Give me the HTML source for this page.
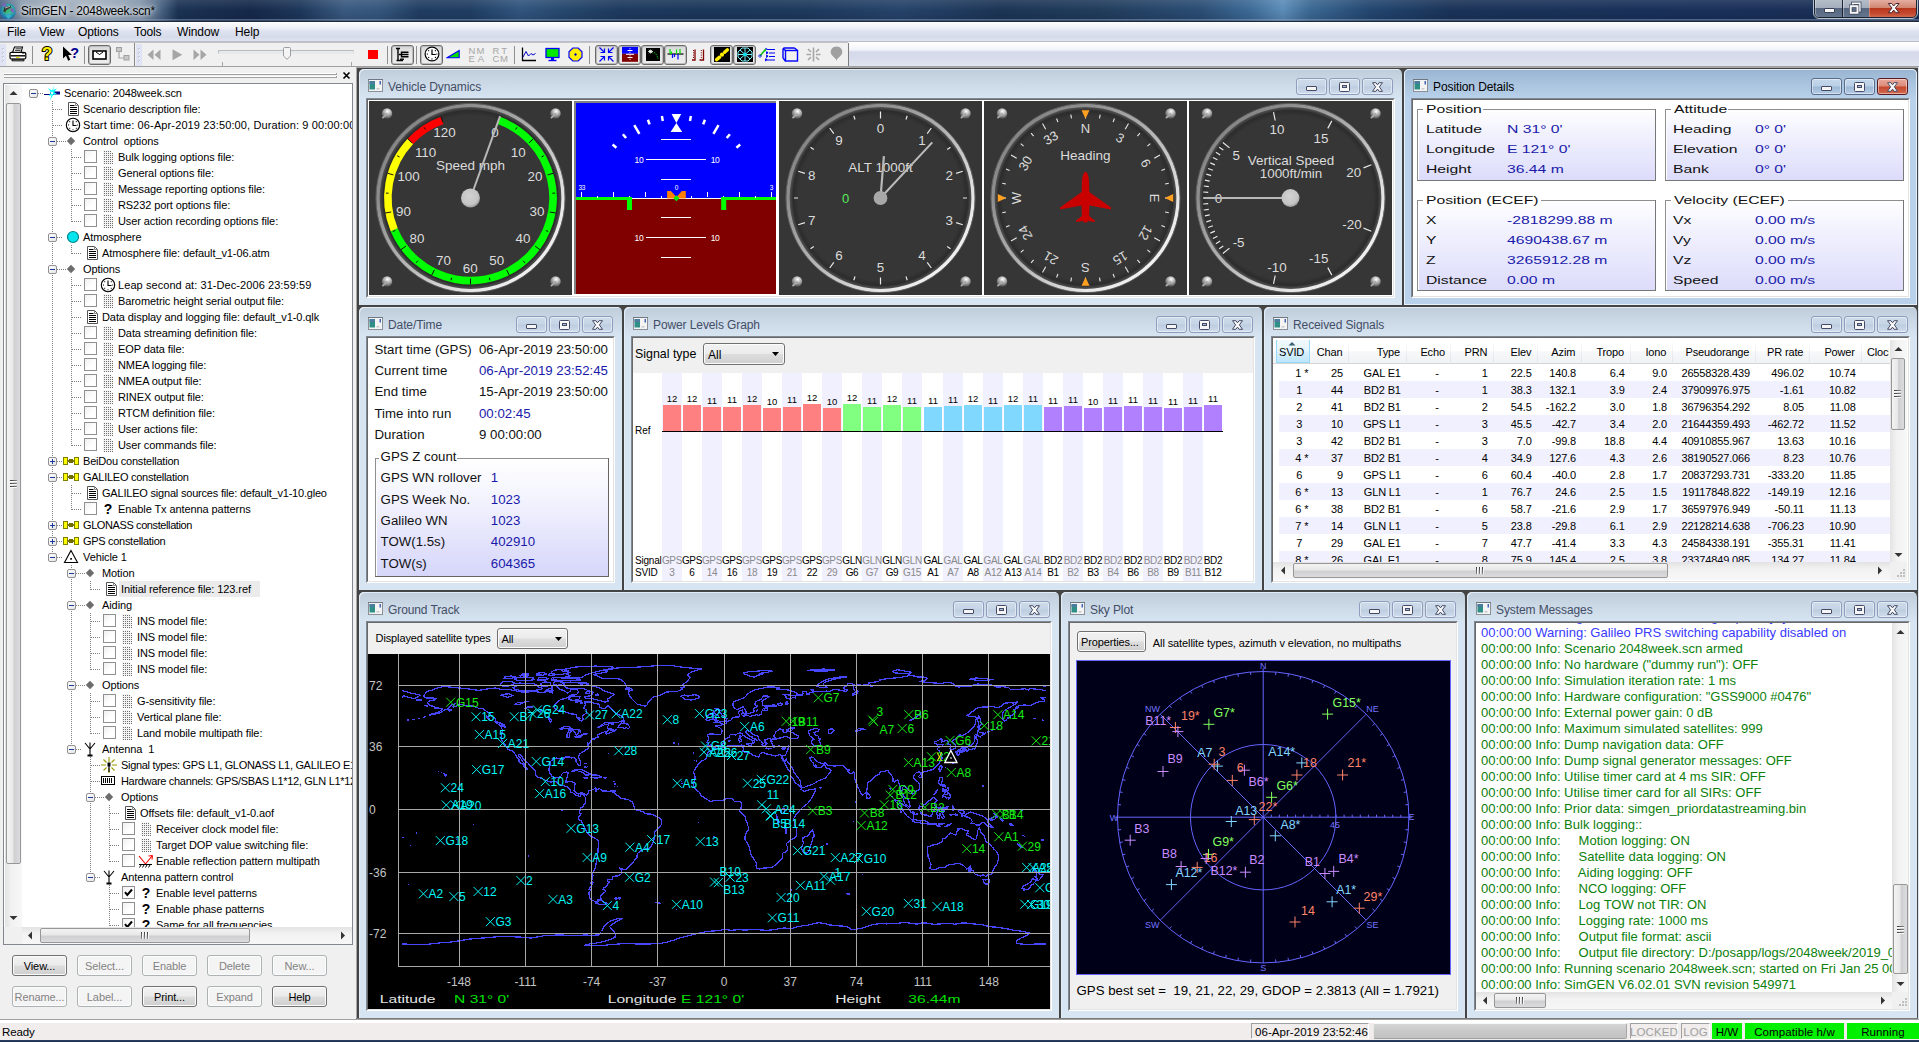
<!DOCTYPE html>
<html><head><meta charset="utf-8"><title>SimGEN - 2048week.scn*</title>
<style>
html,body{margin:0;padding:0;background:#f0f0f0;}
body{width:1919px;height:1042px;position:relative;overflow:hidden;font-family:'Liberation Sans',sans-serif;}
</style></head><body><div style="position:absolute;left:0px;top:0px;width:1919px;height:1042px;background:#f0f0f0"></div><div style="position:absolute;left:0px;top:0px;width:1919px;height:22px;background:linear-gradient(90deg,#4a6484 0,#8798ac 22px,#a3b0be 60px,#9aa9b9 110px,#8295ab 140px,#4c6685 160px,#1b3354 178px,#16294a 250px,#1d375a 300px,#3a5a80 345px,#35567c 380px,#203d61 420px,#203e63 470px,#31557e 520px,#28496f 560px,#1d3a5e 620px,#1b375a 700px,#1d395c 800px,#26436a 900px,#1c3556 1000px,#213c5c 1100px,#2b4d74 1200px,#3c6a96 1250px,#5b8cb8 1283px,#3b6892 1310px,#234670 1370px,#1a3358 1450px,#19305a 1700px,#1b2f55 1919px)"></div><div style="position:absolute;left:0px;top:0px;width:1919px;height:22px;background:linear-gradient(rgba(255,255,255,.10) 0,rgba(255,255,255,0) 10px,rgba(0,0,20,.12) 20px)"></div><div style="position:absolute;left:0px;top:21px;width:1919px;height:1px;background:#1d2a3c"></div><svg style="position:absolute;left:0px;top:1px;" width="17" height="20" viewBox="0 0 17 20"><defs><radialGradient id="gl" cx="55%" cy="40%" r="65%"><stop offset="0" stop-color="#62d8c0"/><stop offset="0.55" stop-color="#2a9fa8"/><stop offset="1" stop-color="#1d55a8"/></radialGradient></defs><circle cx="7.8" cy="10.5" r="8" fill="url(#gl)"/><path d="M3 8 Q7 5 12 6.5 Q15 9 13 11 Q9 10.5 6 12.5 Q3 11 3 8Z" fill="#3cb868" opacity="0.9"/><path d="M6 14 Q9 12.5 11.5 14.5 Q10.5 17.5 8 18 Q6 16.5 6 14Z" fill="#36b0c8"/><path d="M1.5 3.2 L4.5 2 L7 5 L4 6.2Z" fill="#7a66b8"/><path d="M9.5 8.2 L12.5 7 L15 10.5 L12 11.5Z" fill="#7a66b8"/><path d="M3.2 10.2 L4.2 6.2 L10.6 4.4 L11.3 6.2 L6.3 9.2 L5.2 11.6Z" fill="#3a3a3a"/><path d="M5 7 L10 5.3" stroke="#b8bcc2" stroke-width="0.9"/></svg><span style="position:absolute;left:21px;top:4px;white-space:pre;font:12px 'Liberation Sans',sans-serif;color:#000;letter-spacing:-0.22px;text-shadow:0 0 6px rgba(255,255,255,.9),0 0 10px rgba(255,255,255,.7),0 0 3px rgba(255,255,255,.6)">SimGEN - 2048week.scn*</span><div style="position:absolute;left:1813px;top:-2px;width:105px;height:21px;border:1px solid #b4c0cd;border-radius:0 0 6px 6px;box-sizing:border-box;background:#1c2433"></div><div style="position:absolute;left:1815px;top:0px;width:27px;height:17px;border-radius:0 0 0 4px;background:linear-gradient(#b4bdc9 0,#a3adbc 45%,#56677f 50%,#64758e 100%);box-shadow:inset 1px 0 0 rgba(255,255,255,.35)"></div><div style="position:absolute;left:1843px;top:0px;width:26px;height:17px;background:linear-gradient(#b4bdc9 0,#a3adbc 45%,#56677f 50%,#64758e 100%);box-shadow:inset 1px 0 0 rgba(255,255,255,.35)"></div><div style="position:absolute;left:1869px;top:0px;width:47px;height:17px;border-radius:0 0 4px 0;background:linear-gradient(#e4aea2 0,#d28672 45%,#b9371e 50%,#c44a30 80%,#d0674d 100%);box-shadow:inset 1px 0 0 rgba(255,255,255,.3)"></div><div style="position:absolute;left:0px;top:19px;width:1919px;height:2px;background:linear-gradient(rgba(150,170,195,.55),rgba(120,140,165,.2))"></div><div style="position:absolute;left:1824px;top:8px;width:9px;height:3px;background:#f6f6f6;border:1px solid #39425a;border-radius:1px;box-sizing:content-box"></div><svg style="position:absolute;left:1848px;top:1px;" width="16" height="14" viewBox="0 0 16 14"><rect x="4.8" y="2.3" width="7" height="7.5" fill="none" stroke="#39425a" stroke-width="3.2"/><rect x="4.8" y="2.3" width="7" height="7.5" fill="none" stroke="#f6f6f6" stroke-width="1.7"/><rect x="2.7" y="5.2" width="6.8" height="6.6" fill="#5d6d86" stroke="#39425a" stroke-width="3.4"/><rect x="2.7" y="5.2" width="6.8" height="6.6" fill="none" stroke="#f6f6f6" stroke-width="2"/></svg><svg style="position:absolute;left:1887px;top:2px;" width="14" height="12" viewBox="0 0 14 12"><path d="M1.3 1.5 L4.6 1.5 L6.7 4 L8.8 1.5 L12.1 1.5 L8.4 6 L12.1 10.7 L8.8 10.7 L6.7 8.1 L4.6 10.7 L1.3 10.7 L5 6 Z" fill="#f8f8f8" stroke="#4a2630" stroke-width="1" stroke-linejoin="round"/></svg><div style="position:absolute;left:0px;top:22px;width:1919px;height:20px;background:linear-gradient(#fdfdfe 0,#eef0f8 6px,#dfe3f0 9px,#d6dbea 15px,#e2e6f2 20px)"></div><div style="position:absolute;left:0px;top:41px;width:1919px;height:1px;background:#b9bccb"></div><div style="position:absolute;left:0px;top:42px;width:1919px;height:1px;background:#ffffff"></div><span style="position:absolute;left:7px;top:25px;white-space:pre;font:12px 'Liberation Sans',sans-serif;color:#000;letter-spacing:-0.1px">File</span><span style="position:absolute;left:39px;top:25px;white-space:pre;font:12px 'Liberation Sans',sans-serif;color:#000;letter-spacing:-0.1px">View</span><span style="position:absolute;left:78px;top:25px;white-space:pre;font:12px 'Liberation Sans',sans-serif;color:#000;letter-spacing:-0.1px">Options</span><span style="position:absolute;left:134px;top:25px;white-space:pre;font:12px 'Liberation Sans',sans-serif;color:#000;letter-spacing:-0.1px">Tools</span><span style="position:absolute;left:177px;top:25px;white-space:pre;font:12px 'Liberation Sans',sans-serif;color:#000;letter-spacing:-0.1px">Window</span><span style="position:absolute;left:235px;top:25px;white-space:pre;font:12px 'Liberation Sans',sans-serif;color:#000;letter-spacing:-0.1px">Help</span><div style="position:absolute;left:0px;top:43px;width:1919px;height:23px;background:linear-gradient(#ffffff 0,#f2f3f9 7px,#d5daeb 9px,#d8dcec 16px,#e1e5f1 23px)"></div><div style="position:absolute;left:0px;top:43px;width:848px;height:23px;background:#f0f0f0"></div><div style="position:absolute;left:0px;top:42px;width:848px;height:1px;background:#c4c4c4"></div><div style="position:absolute;left:848px;top:43px;width:1px;height:23px;background:#7c7c7c"></div><div style="position:absolute;left:134px;top:43px;width:1px;height:23px;background:#8a8a8a"></div><div style="position:absolute;left:0px;top:44px;width:6px;height:22px;background:#dfe3f4"></div><div style="position:absolute;left:2px;top:48px;width:2px;height:2px;background:#c3c8da"></div><div style="position:absolute;left:3px;top:49px;width:1px;height:1px;background:#fff"></div><div style="position:absolute;left:2px;top:52px;width:2px;height:2px;background:#c3c8da"></div><div style="position:absolute;left:3px;top:53px;width:1px;height:1px;background:#fff"></div><div style="position:absolute;left:2px;top:56px;width:2px;height:2px;background:#c3c8da"></div><div style="position:absolute;left:3px;top:57px;width:1px;height:1px;background:#fff"></div><div style="position:absolute;left:2px;top:60px;width:2px;height:2px;background:#c3c8da"></div><div style="position:absolute;left:3px;top:61px;width:1px;height:1px;background:#fff"></div><div style="position:absolute;left:136px;top:44px;width:6px;height:22px;background:#dfe3f4"></div><div style="position:absolute;left:138px;top:48px;width:2px;height:2px;background:#c3c8da"></div><div style="position:absolute;left:139px;top:49px;width:1px;height:1px;background:#fff"></div><div style="position:absolute;left:138px;top:52px;width:2px;height:2px;background:#c3c8da"></div><div style="position:absolute;left:139px;top:53px;width:1px;height:1px;background:#fff"></div><div style="position:absolute;left:138px;top:56px;width:2px;height:2px;background:#c3c8da"></div><div style="position:absolute;left:139px;top:57px;width:1px;height:1px;background:#fff"></div><div style="position:absolute;left:138px;top:60px;width:2px;height:2px;background:#c3c8da"></div><div style="position:absolute;left:139px;top:61px;width:1px;height:1px;background:#fff"></div><svg style="position:absolute;left:9px;top:46px;" width="18" height="16" viewBox="0 0 18 16"><path d="M5.5 1 H13.5 L12 6.5 H3.5Z" fill="#fff" stroke="#000" stroke-width="1.1"/><path d="M6.5 2.8H12M6 4.4H11.5" stroke="#000" stroke-width="0.8"/><path d="M1 7.5 Q1 6.3 2.5 6.3 H14.5 Q16.8 6.3 16.8 8 V11.5 Q16.8 13 15 13 H2.8 Q1 13 1 11.5Z" fill="#fff" stroke="#000" stroke-width="1.2"/><path d="M1.5 9.8H16" stroke="#000" stroke-width="1.4"/><path d="M3 13.3 H15 V14.8 H3Z" fill="#fff" stroke="#000" stroke-width="1"/><rect x="7" y="10.8" width="3.5" height="1.2" fill="#e8d800"/><path d="M13 7.5h2.5" stroke="#777" stroke-width="1"/></svg><div style="position:absolute;left:32px;top:46px;width:1px;height:18px;background:#8f8f8f"></div><svg style="position:absolute;left:41px;top:45px;" width="12" height="18" viewBox="0 0 12 18"><text x="6" y="15" text-anchor="middle" font-family="Liberation Sans,sans-serif" font-weight="bold" font-size="17.5" fill="#ffee00" stroke="#000" stroke-width="2" paint-order="stroke" stroke-linejoin="round">?</text></svg><svg style="position:absolute;left:62px;top:46px;" width="18" height="16" viewBox="0 0 18 16"><path d="M1 0.5 V12.5 L4 9.8 L6.2 14.8 L8.3 13.8 L6.2 9 L10 9 Z" fill="#000"/><text x="12.8" y="11.5" text-anchor="middle" font-family="Liberation Sans,sans-serif" font-weight="bold" font-size="14.5" fill="#000090">?</text></svg><div style="position:absolute;left:84px;top:46px;width:1px;height:18px;background:#8f8f8f"></div><div style="position:absolute;left:88px;top:45px;width:23px;height:20px;box-sizing:border-box;border:1px solid #6b6b6b;border-radius:3px;background:linear-gradient(#d6d6d6 0,#e6e6e6 40%,#ededed 100%);box-shadow:inset 0 0 0 1px #bdbdbd"></div><svg style="position:absolute;left:92px;top:50px;" width="15" height="10" viewBox="0 0 15 10"><rect x="1" y="1" width="13" height="8" fill="#fff" stroke="#000" stroke-width="1.6"/><path d="M4 2 L7.5 4.5 L11 2" fill="none" stroke="#000" stroke-width="1"/></svg><svg style="position:absolute;left:116px;top:47px;" width="14" height="14" viewBox="0 0 14 14"><rect x="0.5" y="0.5" width="5" height="4" fill="#c8c8c8" stroke="#a0a0a0"/><rect x="8" y="8.5" width="5" height="4.5" fill="#c8c8c8" stroke="#a0a0a0"/><path d="M3 4.5 V11 H8" fill="none" stroke="#a8a8a8" stroke-width="1.2"/></svg><svg style="position:absolute;left:147px;top:49px;" width="14" height="12" viewBox="0 0 14 12"><path d="M6.5 0.5 V11 L0.5 5.8Z M13.5 0.5 V11 L7.5 5.8Z" fill="#a6a6a6"/></svg><svg style="position:absolute;left:172px;top:49px;" width="11" height="12" viewBox="0 0 11 12"><path d="M0.5 0.3 V11.3 L10.3 5.8Z" fill="#a6a6a6"/></svg><svg style="position:absolute;left:193px;top:49px;" width="14" height="12" viewBox="0 0 14 12"><path d="M0.5 0.5 V11 L6.5 5.8Z M7.5 0.5 V11 L13.5 5.8Z" fill="#a6a6a6"/></svg><div style="position:absolute;left:218px;top:50px;width:136px;height:4px;box-sizing:border-box;border:1px solid #b8bcc0;border-bottom-color:#e6eaee;border-right-color:#d6dadd;background:#e7eaea;border-radius:1px"></div><svg style="position:absolute;left:283px;top:47px;" width="8" height="13" viewBox="0 0 8 13"><path d="M0.5 1.5 Q0.5 0.5 1.5 0.5 H6.5 Q7.5 0.5 7.5 1.5 V9 L4 12.3 L0.5 9Z" fill="#f4f4f4" stroke="#9a9ea3" stroke-width="1"/></svg><div style="position:absolute;left:222px;top:62px;width:1px;height:4px;background:#a8a8a8"></div><div style="position:absolute;left:351px;top:62px;width:1px;height:4px;background:#a8a8a8"></div><div style="position:absolute;left:368px;top:50px;width:10px;height:9px;background:#ff0000"></div><div style="position:absolute;left:387px;top:46px;width:1px;height:18px;background:#8f8f8f"></div><div style="position:absolute;left:391px;top:45px;width:23px;height:20px;box-sizing:border-box;border:1px solid #6b6b6b;border-radius:3px;background:linear-gradient(#d6d6d6 0,#e6e6e6 40%,#ededed 100%);box-shadow:inset 0 0 0 1px #bdbdbd"></div><svg style="position:absolute;left:395px;top:47px;" width="15" height="15" viewBox="0 0 15 15"><path d="M1 1.5H5M3 1.5V13.5M1.5 13.5H8" stroke="#000" stroke-width="1.4" fill="none"/><path d="M4 7.5H7M7 5.2H13.5M7 7.5H13.5M7 9.8H13.5M6.5 4.5V10.5" stroke="#000" stroke-width="1.4" fill="none"/><path d="M5 12.2H9" stroke="#000" stroke-width="1.4"/></svg><div style="position:absolute;left:416px;top:46px;width:1px;height:18px;background:#8f8f8f"></div><div style="position:absolute;left:420px;top:45px;width:23px;height:20px;box-sizing:border-box;border:1px solid #6b6b6b;border-radius:3px;background:linear-gradient(#d6d6d6 0,#e6e6e6 40%,#ededed 100%);box-shadow:inset 0 0 0 1px #bdbdbd"></div><svg style="position:absolute;left:424px;top:46px;" width="16" height="16" viewBox="0 0 16 16"><circle cx="8" cy="8" r="6.9" fill="#fff" stroke="#000" stroke-width="1.2"/><path d="M8 3.5V8.5H11.8" fill="none" stroke="#000" stroke-width="1.2"/><g fill="#000"><rect x="7.4" y="12.4" width="1.1" height="1.1"/><rect x="2.8" y="7.5" width="1.1" height="1.1"/><rect x="12.3" y="7.5" width="1.1" height="1.1"/><rect x="4.1" y="4.1" width="1.1" height="1.1"/><rect x="10.9" y="4.1" width="1.1" height="1.1"/><rect x="4.1" y="10.9" width="1.1" height="1.1"/><rect x="10.9" y="10.9" width="1.1" height="1.1"/></g></svg><svg style="position:absolute;left:446px;top:49px;" width="15" height="10" viewBox="0 0 15 10"><path d="M1 8.8 L13.2 1.5 V8.8Z" fill="#00e000" stroke="#0000ff" stroke-width="1.1"/></svg><svg style="position:absolute;left:467px;top:45px;" width="42" height="18" viewBox="0 0 42 18"><text x="1.5" y="9" style="font-family:'Liberation Sans',sans-serif;font-size:9.5px;fill:#a6a6a6" textLength="16" lengthAdjust="spacing">NM</text><text x="1.5" y="17" style="font-family:'Liberation Sans',sans-serif;font-size:9.5px;fill:#a6a6a6" textLength="15.5" lengthAdjust="spacing">EA</text><text x="25.5" y="9" style="font-family:'Liberation Sans',sans-serif;font-size:9.5px;fill:#a6a6a6" textLength="14.5" lengthAdjust="spacing">RT</text><text x="25.5" y="17" style="font-family:'Liberation Sans',sans-serif;font-size:9.5px;fill:#a6a6a6" textLength="15.5" lengthAdjust="spacing">CM</text></svg><div style="position:absolute;left:514px;top:46px;width:1px;height:18px;background:#8f8f8f"></div><svg style="position:absolute;left:521px;top:47px;" width="16" height="15" viewBox="0 0 16 15"><path d="M1.5 0.5V13.5H15" fill="none" stroke="#000" stroke-width="1.3"/><path d="M2 10 L5 4.5 L7.5 9 L10 6.5 L12 8 L14.5 6.5" fill="none" stroke="#0000c8" stroke-width="1"/></svg><svg style="position:absolute;left:545px;top:47px;" width="15" height="15" viewBox="0 0 15 15"><rect x="1" y="1.5" width="13" height="9" fill="#00e800" stroke="#0000ff" stroke-width="1.3"/><rect x="6" y="11" width="3" height="2" fill="#0000ff"/><rect x="3.5" y="12.8" width="8" height="1.4" fill="#0000ff"/></svg><svg style="position:absolute;left:568px;top:47px;" width="15" height="15" viewBox="0 0 15 15"><path d="M4.8 1 H10.2 L14 4.8 V10.2 L10.2 14 H4.8 L1 10.2 V4.8Z" fill="#ffee00" stroke="#0000ff" stroke-width="1.2"/><path d="M7.5 6 L9 7.5 L7.5 9 L6 7.5Z" fill="#0000c8"/></svg><div style="position:absolute;left:589px;top:46px;width:1px;height:18px;background:#8f8f8f"></div><div style="position:absolute;left:595px;top:45px;width:23px;height:20px;box-sizing:border-box;border:1px solid #6b6b6b;border-radius:3px;background:linear-gradient(#d6d6d6 0,#e6e6e6 40%,#ededed 100%);box-shadow:inset 0 0 0 1px #bdbdbd"></div><svg style="position:absolute;left:598px;top:46px;" width="17" height="17" viewBox="0 0 17 17"><g stroke="#0000ff" stroke-width="1.2" fill="none"><path d="M1.5 1.5 L6.5 6.5 M6.5 2.5 V6.5 H2.5"/><path d="M15.5 1.5 L10.5 6.5 M10.5 2.5 V6.5 H14.5"/><path d="M1.5 15.5 L6.5 10.5 M6.5 14.5 V10.5 H2.5"/><path d="M15.5 15.5 L10.5 10.5 M10.5 14.5 V10.5 H14.5"/></g></svg><div style="position:absolute;left:618px;top:45px;width:23px;height:20px;box-sizing:border-box;border:1px solid #6b6b6b;border-radius:3px;background:linear-gradient(#d6d6d6 0,#e6e6e6 40%,#ededed 100%);box-shadow:inset 0 0 0 1px #bdbdbd"></div><svg style="position:absolute;left:622px;top:46px;" width="16" height="16" viewBox="0 0 16 16"><rect x="0" y="0.8" width="16" height="7" fill="#0000ff"/><rect x="0" y="7.8" width="16" height="8" fill="#800000"/><g stroke="#fff" stroke-width="1" fill="none"><path d="M5.5 4.5H10.5M8 2.2V3.2M8 5.8V6.8M4 8.3H12M5.5 11.5H10.5M8 9.5V10.3M8 12.8V13.8"/></g></svg><div style="position:absolute;left:641px;top:45px;width:23px;height:20px;box-sizing:border-box;border:1px solid #6b6b6b;border-radius:3px;background:linear-gradient(#d6d6d6 0,#e6e6e6 40%,#ededed 100%);box-shadow:inset 0 0 0 1px #bdbdbd"></div><svg style="position:absolute;left:646px;top:48px;" width="14" height="13" viewBox="0 0 14 13"><rect width="14" height="13" fill="#000"/><path d="M3 3.5 Q10.5 3 12 11" fill="none" stroke="#00e000" stroke-width="1" stroke-dasharray="1.5 1"/><path d="M2 3.5H7M4.5 1.5V5.5M2.8 1.8L6.2 5.2M6.2 1.8L2.8 5.2" stroke="#fff" stroke-width="0.8"/></svg><div style="position:absolute;left:664px;top:45px;width:23px;height:20px;box-sizing:border-box;border:1px solid #6b6b6b;border-radius:3px;background:linear-gradient(#d6d6d6 0,#e6e6e6 40%,#ededed 100%);box-shadow:inset 0 0 0 1px #bdbdbd"></div><svg style="position:absolute;left:667px;top:48px;" width="17" height="13" viewBox="0 0 17 13"><path d="M0.5 6H16.5" stroke="#000" stroke-width="1.2"/><path d="M3 1V6M4.5 3.5V6M9.5 1.5V6M13 1V6" stroke="#00e000" stroke-width="1.2"/><path d="M5.5 6V10M7.5 6V9M11 6V11.5" stroke="#0000ff" stroke-width="1.2"/></svg><svg style="position:absolute;left:692px;top:49px;" width="13" height="12" viewBox="0 0 13 12"><path d="M3 0.5V11H0M11.5 0.5V11H7.5" fill="none" stroke="#800000" stroke-width="1.3"/><path d="M1.5 1V10M9.3 1V10" stroke="#800000" stroke-width="1" stroke-dasharray="1 1.3"/></svg><div style="position:absolute;left:710px;top:45px;width:23px;height:20px;box-sizing:border-box;border:1px solid #6b6b6b;border-radius:3px;background:linear-gradient(#d6d6d6 0,#e6e6e6 40%,#ededed 100%);box-shadow:inset 0 0 0 1px #bdbdbd"></div><svg style="position:absolute;left:714px;top:47px;" width="16" height="15" viewBox="0 0 16 15"><rect width="16" height="15" fill="#000"/><path d="M2.6 12.6 L5.6 10.2" stroke="#ffee00" stroke-width="3.4" stroke-linecap="round"/><path d="M10.6 5.2 L13.4 2.8" stroke="#ffee00" stroke-width="3.4" stroke-linecap="round"/><circle cx="8" cy="7.7" r="2.1" fill="#ffee00"/></svg><div style="position:absolute;left:733px;top:45px;width:23px;height:20px;box-sizing:border-box;border:1px solid #6b6b6b;border-radius:3px;background:linear-gradient(#d6d6d6 0,#e6e6e6 40%,#ededed 100%);box-shadow:inset 0 0 0 1px #bdbdbd"></div><svg style="position:absolute;left:737px;top:47px;" width="16" height="15" viewBox="0 0 16 15"><rect width="16" height="15" fill="#000"/><g stroke="#7af4ff" stroke-width="1" fill="none"><path d="M5 1 H11 L15 5 V10 L11 14 H5 L1 10 V5Z"/><path d="M8 1V14M1 7.5H15M3 3L13 12M13 3L3 12"/></g><circle cx="8" cy="7.5" r="1.8" fill="#00e5ee"/></svg><svg style="position:absolute;left:758px;top:47px;" width="18" height="15" viewBox="0 0 18 15"><g stroke="#0000ff" stroke-width="1.1" fill="none"><path d="M9 2.5H17M11 6H17M11 9.5H17M9 13H17"/><path d="M9 2.5L7.5 1.2M10 6L8.5 4.7 M10 9.5 L8.5 8.2M9 13L7.5 11.7" /></g><path d="M2 9 L7 3" stroke="#00c000" stroke-width="1.4"/><path d="M0.5 9 L2 7.5 L3.5 9 L2 10.5Z" fill="none" stroke="#0000ff" stroke-width="0.9"/><path d="M7.8 1.5 L8 4.5 L5.5 3.2Z" fill="#00c000"/><g fill="none" stroke="#0000ff" stroke-width="0.9"><path d="M8.5 5 L9.8 6 L8.5 7Z M8.5 8.5 L9.8 9.5 L8.5 10.5Z M7.5 12 L8.8 13 L7.5 14Z"/></g></svg><svg style="position:absolute;left:782px;top:47px;" width="17" height="15" viewBox="0 0 17 15"><g stroke="#0000ff" stroke-width="1.4" fill="none"><rect x="3.5" y="3.5" width="12" height="10.5"/><path d="M1 2.5 Q1 1 2.5 1 H12.5 M1 2.5 V11 M1 11 L3.5 14 M12.5 1 L15.5 3.5 M1 1.5 L3.5 3.5"/></g></svg><svg style="position:absolute;left:806px;top:47px;" width="15" height="15" viewBox="0 0 15 15"><g stroke="#a6a6a6" stroke-width="1.6" fill="none"><path d="M7.5 0.5V14.5M0.5 7.5H5M10 7.5H14.5M2 2L5 5M13 2L10 5M2 13L5 10M13 13L10 10"/></g></svg><svg style="position:absolute;left:830px;top:46px;" width="13" height="16" viewBox="0 0 13 16"><path d="M6.5 0.5 C10.5 0.5 12.3 3.5 12.3 6 C12.3 9 8.5 11.5 7.2 13 L6.5 15 L5.8 13 C4.5 11.5 0.7 9 0.7 6 C0.7 3.5 2.5 0.5 6.5 0.5Z" fill="#a0a0a0"/></svg><div style="position:absolute;left:0px;top:67px;width:356px;height:951px;background:#f0f0f0"></div><div style="position:absolute;left:0px;top:66px;width:1919px;height:1px;background:#a0a0a0"></div><div style="position:absolute;left:4px;top:73px;width:332px;height:1px;background:#fff"></div><div style="position:absolute;left:4px;top:74px;width:332px;height:1px;background:#a0a0a0"></div><div style="position:absolute;left:336px;top:73px;width:1px;height:2px;background:#a0a0a0"></div><div style="position:absolute;left:4px;top:76px;width:332px;height:1px;background:#fff"></div><div style="position:absolute;left:4px;top:77px;width:332px;height:1px;background:#a0a0a0"></div><div style="position:absolute;left:336px;top:76px;width:1px;height:2px;background:#a0a0a0"></div><svg style="position:absolute;left:342px;top:71px;" width="10" height="10" viewBox="0 0 10 10"><path d="M1.5 1.5 L7.5 7.5 M7.5 1.5 L1.5 7.5" stroke="#000" stroke-width="1.6"/></svg><div style="position:absolute;left:3px;top:83px;width:350px;height:862px;box-sizing:border-box;border:1px solid #828790;background:#fff"></div><div style="position:absolute;left:0;top:84px;width:352px;height:843px;overflow:hidden"><div style="position:absolute;left:0;top:-84px"><div style="position:absolute;left:38px;top:93px;width:6px;height:1px;background:repeating-linear-gradient(90deg,#808080 0,#808080 1px,transparent 1px,transparent 2px)"></div><div style="position:absolute;left:29px;top:89px;width:7px;height:7px;border:1px solid #919191;border-radius:2px;background:linear-gradient(135deg,#fff,#e4e4e4)"></div><div style="position:absolute;left:31px;top:93px;width:5px;height:1px;background:#1b3a9c"></div><svg style="position:absolute;left:44px;top:85px" width="16" height="16" viewBox="0 0 16 16"><path d="M0 9 H6 V7.5 H9 V6.5 H16 V9.5 H10 V10 H0Z" fill="#000080"/><path d="M10.5 0 L9 5 L13 3.5 L10 7 L13 9 L9.5 9.5 L6 15 L7.5 10 L4.5 11 L7 7.5 L4 3 L8 5.5 Z" fill="#00ffff"/><path d="M8 6.5 L9.5 8 L8 9.5 L6.7 8Z" fill="#fff"/></svg><span style="position:absolute;left:64px;top:87px;line-height:16px;white-space:pre;font:11px 'Liberation Sans',sans-serif;letter-spacing:-0.09px;color:#000;">Scenario: 2048week.scn</span><div style="position:absolute;left:52px;top:101px;width:1px;height:16px;background:repeating-linear-gradient(#808080 0,#808080 1px,transparent 1px,transparent 2px)"></div><div style="position:absolute;left:53px;top:109px;width:10px;height:1px;background:repeating-linear-gradient(90deg,#808080 0,#808080 1px,transparent 1px,transparent 2px)"></div><svg style="position:absolute;left:65px;top:101px" width="16" height="16" viewBox="0 0 16 16"><path d="M3.5 1.5 H10.5 L13.5 4.5 V14.5 H3.5 Z" fill="#fff" stroke="#555" stroke-width="1"/><path d="M10.5 1.5 V4.5 H13.5" fill="none" stroke="#888" stroke-width="1"/><path d="M5 4.5H9.5M5 6.5H12M5 8.5H12M5 10.5H12M5 12.5H12" stroke="#000" stroke-width="1"/></svg><span style="position:absolute;left:83px;top:103px;line-height:16px;white-space:pre;font:11px 'Liberation Sans',sans-serif;letter-spacing:-0.09px;color:#000;">Scenario description file:</span><div style="position:absolute;left:52px;top:117px;width:1px;height:16px;background:repeating-linear-gradient(#808080 0,#808080 1px,transparent 1px,transparent 2px)"></div><div style="position:absolute;left:53px;top:125px;width:10px;height:1px;background:repeating-linear-gradient(90deg,#808080 0,#808080 1px,transparent 1px,transparent 2px)"></div><svg style="position:absolute;left:65px;top:117px" width="16" height="16" viewBox="0 0 16 16"><circle cx="8" cy="8" r="6.7" fill="#fff" stroke="#000" stroke-width="1.1"/><path d="M8 3.5V8.5H11.5" fill="none" stroke="#000" stroke-width="1.1"/><g fill="#000"><rect x="7.5" y="12.3" width="1" height="1"/><rect x="3" y="7.5" width="1" height="1"/><rect x="12.2" y="7.5" width="1" height="1"/><rect x="4.2" y="4.2" width="1" height="1"/><rect x="10.8" y="4.2" width="1" height="1"/><rect x="4.2" y="10.8" width="1" height="1"/><rect x="10.8" y="10.8" width="1" height="1"/></g></svg><span style="position:absolute;left:83px;top:119px;line-height:16px;white-space:pre;font:11px 'Liberation Sans',sans-serif;letter-spacing:-0.09px;color:#000;letter-spacing:0.12px;">Start time: 06-Apr-2019 23:50:00, Duration: 9 00:00:00</span><div style="position:absolute;left:52px;top:133px;width:1px;height:16px;background:repeating-linear-gradient(#808080 0,#808080 1px,transparent 1px,transparent 2px)"></div><div style="position:absolute;left:57px;top:141px;width:10px;height:1px;background:repeating-linear-gradient(90deg,#808080 0,#808080 1px,transparent 1px,transparent 2px)"></div><div style="position:absolute;left:48px;top:137px;width:7px;height:7px;border:1px solid #919191;border-radius:2px;background:linear-gradient(135deg,#fff,#e4e4e4)"></div><div style="position:absolute;left:50px;top:141px;width:5px;height:1px;background:#1b3a9c"></div><svg style="position:absolute;left:63px;top:133px" width="16" height="16" viewBox="0 0 16 16"><path d="M8 3.8 L12.2 8 L8 12.2 L3.8 8 Z" fill="#6c6c6c"/></svg><span style="position:absolute;left:83px;top:135px;line-height:16px;white-space:pre;font:11px 'Liberation Sans',sans-serif;letter-spacing:-0.09px;color:#000;">Control  options</span><div style="position:absolute;left:52px;top:149px;width:1px;height:16px;background:repeating-linear-gradient(#808080 0,#808080 1px,transparent 1px,transparent 2px)"></div><div style="position:absolute;left:71px;top:149px;width:1px;height:16px;background:repeating-linear-gradient(#808080 0,#808080 1px,transparent 1px,transparent 2px)"></div><div style="position:absolute;left:72px;top:157px;width:10px;height:1px;background:repeating-linear-gradient(90deg,#808080 0,#808080 1px,transparent 1px,transparent 2px)"></div><div style="position:absolute;left:84px;top:150px;width:11px;height:11px;border:1px solid #8e8f8f;background:linear-gradient(135deg,#f0f0f0,#fff 60%)"></div><svg style="position:absolute;left:100px;top:149px" width="16" height="16" viewBox="0 0 16 16"><defs><pattern id="dt" width="2" height="2" patternUnits="userSpaceOnUse"><rect width="1" height="1" fill="#6e6e6e"/></pattern></defs><path d="M3 1 H10 L13 4 V15 H3 Z" fill="#f4f4f4"/><path d="M3 1 H10 L13 4 V15 H3 Z" fill="url(#dt)"/></svg><span style="position:absolute;left:118px;top:151px;line-height:16px;white-space:pre;font:11px 'Liberation Sans',sans-serif;letter-spacing:-0.09px;color:#000;">Bulk logging options file:</span><div style="position:absolute;left:52px;top:165px;width:1px;height:16px;background:repeating-linear-gradient(#808080 0,#808080 1px,transparent 1px,transparent 2px)"></div><div style="position:absolute;left:71px;top:165px;width:1px;height:16px;background:repeating-linear-gradient(#808080 0,#808080 1px,transparent 1px,transparent 2px)"></div><div style="position:absolute;left:72px;top:173px;width:10px;height:1px;background:repeating-linear-gradient(90deg,#808080 0,#808080 1px,transparent 1px,transparent 2px)"></div><div style="position:absolute;left:84px;top:166px;width:11px;height:11px;border:1px solid #8e8f8f;background:linear-gradient(135deg,#f0f0f0,#fff 60%)"></div><svg style="position:absolute;left:100px;top:165px" width="16" height="16" viewBox="0 0 16 16"><defs><pattern id="dt" width="2" height="2" patternUnits="userSpaceOnUse"><rect width="1" height="1" fill="#6e6e6e"/></pattern></defs><path d="M3 1 H10 L13 4 V15 H3 Z" fill="#f4f4f4"/><path d="M3 1 H10 L13 4 V15 H3 Z" fill="url(#dt)"/></svg><span style="position:absolute;left:118px;top:167px;line-height:16px;white-space:pre;font:11px 'Liberation Sans',sans-serif;letter-spacing:-0.09px;color:#000;">General options file:</span><div style="position:absolute;left:52px;top:181px;width:1px;height:16px;background:repeating-linear-gradient(#808080 0,#808080 1px,transparent 1px,transparent 2px)"></div><div style="position:absolute;left:71px;top:181px;width:1px;height:16px;background:repeating-linear-gradient(#808080 0,#808080 1px,transparent 1px,transparent 2px)"></div><div style="position:absolute;left:72px;top:189px;width:10px;height:1px;background:repeating-linear-gradient(90deg,#808080 0,#808080 1px,transparent 1px,transparent 2px)"></div><div style="position:absolute;left:84px;top:182px;width:11px;height:11px;border:1px solid #8e8f8f;background:linear-gradient(135deg,#f0f0f0,#fff 60%)"></div><svg style="position:absolute;left:100px;top:181px" width="16" height="16" viewBox="0 0 16 16"><defs><pattern id="dt" width="2" height="2" patternUnits="userSpaceOnUse"><rect width="1" height="1" fill="#6e6e6e"/></pattern></defs><path d="M3 1 H10 L13 4 V15 H3 Z" fill="#f4f4f4"/><path d="M3 1 H10 L13 4 V15 H3 Z" fill="url(#dt)"/></svg><span style="position:absolute;left:118px;top:183px;line-height:16px;white-space:pre;font:11px 'Liberation Sans',sans-serif;letter-spacing:-0.09px;color:#000;">Message reporting options file:</span><div style="position:absolute;left:52px;top:197px;width:1px;height:16px;background:repeating-linear-gradient(#808080 0,#808080 1px,transparent 1px,transparent 2px)"></div><div style="position:absolute;left:71px;top:197px;width:1px;height:16px;background:repeating-linear-gradient(#808080 0,#808080 1px,transparent 1px,transparent 2px)"></div><div style="position:absolute;left:72px;top:205px;width:10px;height:1px;background:repeating-linear-gradient(90deg,#808080 0,#808080 1px,transparent 1px,transparent 2px)"></div><div style="position:absolute;left:84px;top:198px;width:11px;height:11px;border:1px solid #8e8f8f;background:linear-gradient(135deg,#f0f0f0,#fff 60%)"></div><svg style="position:absolute;left:100px;top:197px" width="16" height="16" viewBox="0 0 16 16"><defs><pattern id="dt" width="2" height="2" patternUnits="userSpaceOnUse"><rect width="1" height="1" fill="#6e6e6e"/></pattern></defs><path d="M3 1 H10 L13 4 V15 H3 Z" fill="#f4f4f4"/><path d="M3 1 H10 L13 4 V15 H3 Z" fill="url(#dt)"/></svg><span style="position:absolute;left:118px;top:199px;line-height:16px;white-space:pre;font:11px 'Liberation Sans',sans-serif;letter-spacing:-0.09px;color:#000;">RS232 port options file:</span><div style="position:absolute;left:52px;top:213px;width:1px;height:16px;background:repeating-linear-gradient(#808080 0,#808080 1px,transparent 1px,transparent 2px)"></div><div style="position:absolute;left:71px;top:213px;width:1px;height:9px;background:repeating-linear-gradient(#808080 0,#808080 1px,transparent 1px,transparent 2px)"></div><div style="position:absolute;left:72px;top:221px;width:10px;height:1px;background:repeating-linear-gradient(90deg,#808080 0,#808080 1px,transparent 1px,transparent 2px)"></div><div style="position:absolute;left:84px;top:214px;width:11px;height:11px;border:1px solid #8e8f8f;background:linear-gradient(135deg,#f0f0f0,#fff 60%)"></div><svg style="position:absolute;left:100px;top:213px" width="16" height="16" viewBox="0 0 16 16"><defs><pattern id="dt" width="2" height="2" patternUnits="userSpaceOnUse"><rect width="1" height="1" fill="#6e6e6e"/></pattern></defs><path d="M3 1 H10 L13 4 V15 H3 Z" fill="#f4f4f4"/><path d="M3 1 H10 L13 4 V15 H3 Z" fill="url(#dt)"/></svg><span style="position:absolute;left:118px;top:215px;line-height:16px;white-space:pre;font:11px 'Liberation Sans',sans-serif;letter-spacing:-0.09px;color:#000;">User action recording options file:</span><div style="position:absolute;left:52px;top:229px;width:1px;height:16px;background:repeating-linear-gradient(#808080 0,#808080 1px,transparent 1px,transparent 2px)"></div><div style="position:absolute;left:57px;top:237px;width:6px;height:1px;background:repeating-linear-gradient(90deg,#808080 0,#808080 1px,transparent 1px,transparent 2px)"></div><div style="position:absolute;left:48px;top:233px;width:7px;height:7px;border:1px solid #919191;border-radius:2px;background:linear-gradient(135deg,#fff,#e4e4e4)"></div><div style="position:absolute;left:50px;top:237px;width:5px;height:1px;background:#1b3a9c"></div><svg style="position:absolute;left:65px;top:229px" width="16" height="16" viewBox="0 0 16 16"><circle cx="8" cy="8" r="5.5" fill="#00e5ee" stroke="#00868b" stroke-width="1.2"/></svg><span style="position:absolute;left:83px;top:231px;line-height:16px;white-space:pre;font:11px 'Liberation Sans',sans-serif;letter-spacing:-0.09px;color:#000;">Atmosphere</span><div style="position:absolute;left:52px;top:245px;width:1px;height:16px;background:repeating-linear-gradient(#808080 0,#808080 1px,transparent 1px,transparent 2px)"></div><div style="position:absolute;left:71px;top:245px;width:1px;height:9px;background:repeating-linear-gradient(#808080 0,#808080 1px,transparent 1px,transparent 2px)"></div><div style="position:absolute;left:72px;top:253px;width:10px;height:1px;background:repeating-linear-gradient(90deg,#808080 0,#808080 1px,transparent 1px,transparent 2px)"></div><svg style="position:absolute;left:84px;top:245px" width="16" height="16" viewBox="0 0 16 16"><path d="M3.5 1.5 H10.5 L13.5 4.5 V14.5 H3.5 Z" fill="#fff" stroke="#555" stroke-width="1"/><path d="M10.5 1.5 V4.5 H13.5" fill="none" stroke="#888" stroke-width="1"/><path d="M5 4.5H9.5M5 6.5H12M5 8.5H12M5 10.5H12M5 12.5H12" stroke="#000" stroke-width="1"/></svg><span style="position:absolute;left:102px;top:247px;line-height:16px;white-space:pre;font:11px 'Liberation Sans',sans-serif;letter-spacing:-0.09px;color:#000;">Atmosphere file: default_v1-06.atm</span><div style="position:absolute;left:52px;top:261px;width:1px;height:16px;background:repeating-linear-gradient(#808080 0,#808080 1px,transparent 1px,transparent 2px)"></div><div style="position:absolute;left:57px;top:269px;width:10px;height:1px;background:repeating-linear-gradient(90deg,#808080 0,#808080 1px,transparent 1px,transparent 2px)"></div><div style="position:absolute;left:48px;top:265px;width:7px;height:7px;border:1px solid #919191;border-radius:2px;background:linear-gradient(135deg,#fff,#e4e4e4)"></div><div style="position:absolute;left:50px;top:269px;width:5px;height:1px;background:#1b3a9c"></div><svg style="position:absolute;left:63px;top:261px" width="16" height="16" viewBox="0 0 16 16"><path d="M8 3.8 L12.2 8 L8 12.2 L3.8 8 Z" fill="#6c6c6c"/></svg><span style="position:absolute;left:83px;top:263px;line-height:16px;white-space:pre;font:11px 'Liberation Sans',sans-serif;letter-spacing:-0.09px;color:#000;">Options</span><div style="position:absolute;left:52px;top:277px;width:1px;height:16px;background:repeating-linear-gradient(#808080 0,#808080 1px,transparent 1px,transparent 2px)"></div><div style="position:absolute;left:71px;top:277px;width:1px;height:16px;background:repeating-linear-gradient(#808080 0,#808080 1px,transparent 1px,transparent 2px)"></div><div style="position:absolute;left:72px;top:285px;width:10px;height:1px;background:repeating-linear-gradient(90deg,#808080 0,#808080 1px,transparent 1px,transparent 2px)"></div><div style="position:absolute;left:84px;top:278px;width:11px;height:11px;border:1px solid #8e8f8f;background:linear-gradient(135deg,#f0f0f0,#fff 60%)"></div><svg style="position:absolute;left:100px;top:277px" width="16" height="16" viewBox="0 0 16 16"><circle cx="8" cy="8" r="6.7" fill="#fff" stroke="#000" stroke-width="1.1"/><path d="M8 3.5V8.5H11.5" fill="none" stroke="#000" stroke-width="1.1"/><g fill="#000"><rect x="7.5" y="12.3" width="1" height="1"/><rect x="3" y="7.5" width="1" height="1"/><rect x="12.2" y="7.5" width="1" height="1"/><rect x="4.2" y="4.2" width="1" height="1"/><rect x="10.8" y="4.2" width="1" height="1"/><rect x="4.2" y="10.8" width="1" height="1"/><rect x="10.8" y="10.8" width="1" height="1"/></g></svg><span style="position:absolute;left:118px;top:279px;line-height:16px;white-space:pre;font:11px 'Liberation Sans',sans-serif;letter-spacing:-0.09px;color:#000;letter-spacing:0.07px;">Leap second at: 31-Dec-2006 23:59:59</span><div style="position:absolute;left:52px;top:293px;width:1px;height:16px;background:repeating-linear-gradient(#808080 0,#808080 1px,transparent 1px,transparent 2px)"></div><div style="position:absolute;left:71px;top:293px;width:1px;height:16px;background:repeating-linear-gradient(#808080 0,#808080 1px,transparent 1px,transparent 2px)"></div><div style="position:absolute;left:72px;top:301px;width:10px;height:1px;background:repeating-linear-gradient(90deg,#808080 0,#808080 1px,transparent 1px,transparent 2px)"></div><div style="position:absolute;left:84px;top:294px;width:11px;height:11px;border:1px solid #8e8f8f;background:linear-gradient(135deg,#f0f0f0,#fff 60%)"></div><svg style="position:absolute;left:100px;top:293px" width="16" height="16" viewBox="0 0 16 16"><defs><pattern id="dt" width="2" height="2" patternUnits="userSpaceOnUse"><rect width="1" height="1" fill="#6e6e6e"/></pattern></defs><path d="M3 1 H10 L13 4 V15 H3 Z" fill="#f4f4f4"/><path d="M3 1 H10 L13 4 V15 H3 Z" fill="url(#dt)"/></svg><span style="position:absolute;left:118px;top:295px;line-height:16px;white-space:pre;font:11px 'Liberation Sans',sans-serif;letter-spacing:-0.09px;color:#000;">Barometric height serial output file:</span><div style="position:absolute;left:52px;top:309px;width:1px;height:16px;background:repeating-linear-gradient(#808080 0,#808080 1px,transparent 1px,transparent 2px)"></div><div style="position:absolute;left:71px;top:309px;width:1px;height:16px;background:repeating-linear-gradient(#808080 0,#808080 1px,transparent 1px,transparent 2px)"></div><div style="position:absolute;left:72px;top:317px;width:10px;height:1px;background:repeating-linear-gradient(90deg,#808080 0,#808080 1px,transparent 1px,transparent 2px)"></div><svg style="position:absolute;left:84px;top:309px" width="16" height="16" viewBox="0 0 16 16"><path d="M3.5 1.5 H10.5 L13.5 4.5 V14.5 H3.5 Z" fill="#fff" stroke="#555" stroke-width="1"/><path d="M10.5 1.5 V4.5 H13.5" fill="none" stroke="#888" stroke-width="1"/><path d="M5 4.5H9.5M5 6.5H12M5 8.5H12M5 10.5H12M5 12.5H12" stroke="#000" stroke-width="1"/></svg><span style="position:absolute;left:102px;top:311px;line-height:16px;white-space:pre;font:11px 'Liberation Sans',sans-serif;letter-spacing:-0.09px;color:#000;">Data display and logging file: default_v1-0.qlk</span><div style="position:absolute;left:52px;top:325px;width:1px;height:16px;background:repeating-linear-gradient(#808080 0,#808080 1px,transparent 1px,transparent 2px)"></div><div style="position:absolute;left:71px;top:325px;width:1px;height:16px;background:repeating-linear-gradient(#808080 0,#808080 1px,transparent 1px,transparent 2px)"></div><div style="position:absolute;left:72px;top:333px;width:10px;height:1px;background:repeating-linear-gradient(90deg,#808080 0,#808080 1px,transparent 1px,transparent 2px)"></div><div style="position:absolute;left:84px;top:326px;width:11px;height:11px;border:1px solid #8e8f8f;background:linear-gradient(135deg,#f0f0f0,#fff 60%)"></div><svg style="position:absolute;left:100px;top:325px" width="16" height="16" viewBox="0 0 16 16"><defs><pattern id="dt" width="2" height="2" patternUnits="userSpaceOnUse"><rect width="1" height="1" fill="#6e6e6e"/></pattern></defs><path d="M3 1 H10 L13 4 V15 H3 Z" fill="#f4f4f4"/><path d="M3 1 H10 L13 4 V15 H3 Z" fill="url(#dt)"/></svg><span style="position:absolute;left:118px;top:327px;line-height:16px;white-space:pre;font:11px 'Liberation Sans',sans-serif;letter-spacing:-0.09px;color:#000;">Data streaming definition file:</span><div style="position:absolute;left:52px;top:341px;width:1px;height:16px;background:repeating-linear-gradient(#808080 0,#808080 1px,transparent 1px,transparent 2px)"></div><div style="position:absolute;left:71px;top:341px;width:1px;height:16px;background:repeating-linear-gradient(#808080 0,#808080 1px,transparent 1px,transparent 2px)"></div><div style="position:absolute;left:72px;top:349px;width:10px;height:1px;background:repeating-linear-gradient(90deg,#808080 0,#808080 1px,transparent 1px,transparent 2px)"></div><div style="position:absolute;left:84px;top:342px;width:11px;height:11px;border:1px solid #8e8f8f;background:linear-gradient(135deg,#f0f0f0,#fff 60%)"></div><svg style="position:absolute;left:100px;top:341px" width="16" height="16" viewBox="0 0 16 16"><defs><pattern id="dt" width="2" height="2" patternUnits="userSpaceOnUse"><rect width="1" height="1" fill="#6e6e6e"/></pattern></defs><path d="M3 1 H10 L13 4 V15 H3 Z" fill="#f4f4f4"/><path d="M3 1 H10 L13 4 V15 H3 Z" fill="url(#dt)"/></svg><span style="position:absolute;left:118px;top:343px;line-height:16px;white-space:pre;font:11px 'Liberation Sans',sans-serif;letter-spacing:-0.09px;color:#000;">EOP data file:</span><div style="position:absolute;left:52px;top:357px;width:1px;height:16px;background:repeating-linear-gradient(#808080 0,#808080 1px,transparent 1px,transparent 2px)"></div><div style="position:absolute;left:71px;top:357px;width:1px;height:16px;background:repeating-linear-gradient(#808080 0,#808080 1px,transparent 1px,transparent 2px)"></div><div style="position:absolute;left:72px;top:365px;width:10px;height:1px;background:repeating-linear-gradient(90deg,#808080 0,#808080 1px,transparent 1px,transparent 2px)"></div><div style="position:absolute;left:84px;top:358px;width:11px;height:11px;border:1px solid #8e8f8f;background:linear-gradient(135deg,#f0f0f0,#fff 60%)"></div><svg style="position:absolute;left:100px;top:357px" width="16" height="16" viewBox="0 0 16 16"><defs><pattern id="dt" width="2" height="2" patternUnits="userSpaceOnUse"><rect width="1" height="1" fill="#6e6e6e"/></pattern></defs><path d="M3 1 H10 L13 4 V15 H3 Z" fill="#f4f4f4"/><path d="M3 1 H10 L13 4 V15 H3 Z" fill="url(#dt)"/></svg><span style="position:absolute;left:118px;top:359px;line-height:16px;white-space:pre;font:11px 'Liberation Sans',sans-serif;letter-spacing:-0.09px;color:#000;">NMEA logging file:</span><div style="position:absolute;left:52px;top:373px;width:1px;height:16px;background:repeating-linear-gradient(#808080 0,#808080 1px,transparent 1px,transparent 2px)"></div><div style="position:absolute;left:71px;top:373px;width:1px;height:16px;background:repeating-linear-gradient(#808080 0,#808080 1px,transparent 1px,transparent 2px)"></div><div style="position:absolute;left:72px;top:381px;width:10px;height:1px;background:repeating-linear-gradient(90deg,#808080 0,#808080 1px,transparent 1px,transparent 2px)"></div><div style="position:absolute;left:84px;top:374px;width:11px;height:11px;border:1px solid #8e8f8f;background:linear-gradient(135deg,#f0f0f0,#fff 60%)"></div><svg style="position:absolute;left:100px;top:373px" width="16" height="16" viewBox="0 0 16 16"><defs><pattern id="dt" width="2" height="2" patternUnits="userSpaceOnUse"><rect width="1" height="1" fill="#6e6e6e"/></pattern></defs><path d="M3 1 H10 L13 4 V15 H3 Z" fill="#f4f4f4"/><path d="M3 1 H10 L13 4 V15 H3 Z" fill="url(#dt)"/></svg><span style="position:absolute;left:118px;top:375px;line-height:16px;white-space:pre;font:11px 'Liberation Sans',sans-serif;letter-spacing:-0.09px;color:#000;">NMEA output file:</span><div style="position:absolute;left:52px;top:389px;width:1px;height:16px;background:repeating-linear-gradient(#808080 0,#808080 1px,transparent 1px,transparent 2px)"></div><div style="position:absolute;left:71px;top:389px;width:1px;height:16px;background:repeating-linear-gradient(#808080 0,#808080 1px,transparent 1px,transparent 2px)"></div><div style="position:absolute;left:72px;top:397px;width:10px;height:1px;background:repeating-linear-gradient(90deg,#808080 0,#808080 1px,transparent 1px,transparent 2px)"></div><div style="position:absolute;left:84px;top:390px;width:11px;height:11px;border:1px solid #8e8f8f;background:linear-gradient(135deg,#f0f0f0,#fff 60%)"></div><svg style="position:absolute;left:100px;top:389px" width="16" height="16" viewBox="0 0 16 16"><defs><pattern id="dt" width="2" height="2" patternUnits="userSpaceOnUse"><rect width="1" height="1" fill="#6e6e6e"/></pattern></defs><path d="M3 1 H10 L13 4 V15 H3 Z" fill="#f4f4f4"/><path d="M3 1 H10 L13 4 V15 H3 Z" fill="url(#dt)"/></svg><span style="position:absolute;left:118px;top:391px;line-height:16px;white-space:pre;font:11px 'Liberation Sans',sans-serif;letter-spacing:-0.09px;color:#000;">RINEX output file:</span><div style="position:absolute;left:52px;top:405px;width:1px;height:16px;background:repeating-linear-gradient(#808080 0,#808080 1px,transparent 1px,transparent 2px)"></div><div style="position:absolute;left:71px;top:405px;width:1px;height:16px;background:repeating-linear-gradient(#808080 0,#808080 1px,transparent 1px,transparent 2px)"></div><div style="position:absolute;left:72px;top:413px;width:10px;height:1px;background:repeating-linear-gradient(90deg,#808080 0,#808080 1px,transparent 1px,transparent 2px)"></div><div style="position:absolute;left:84px;top:406px;width:11px;height:11px;border:1px solid #8e8f8f;background:linear-gradient(135deg,#f0f0f0,#fff 60%)"></div><svg style="position:absolute;left:100px;top:405px" width="16" height="16" viewBox="0 0 16 16"><defs><pattern id="dt" width="2" height="2" patternUnits="userSpaceOnUse"><rect width="1" height="1" fill="#6e6e6e"/></pattern></defs><path d="M3 1 H10 L13 4 V15 H3 Z" fill="#f4f4f4"/><path d="M3 1 H10 L13 4 V15 H3 Z" fill="url(#dt)"/></svg><span style="position:absolute;left:118px;top:407px;line-height:16px;white-space:pre;font:11px 'Liberation Sans',sans-serif;letter-spacing:-0.09px;color:#000;">RTCM definition file:</span><div style="position:absolute;left:52px;top:421px;width:1px;height:16px;background:repeating-linear-gradient(#808080 0,#808080 1px,transparent 1px,transparent 2px)"></div><div style="position:absolute;left:71px;top:421px;width:1px;height:16px;background:repeating-linear-gradient(#808080 0,#808080 1px,transparent 1px,transparent 2px)"></div><div style="position:absolute;left:72px;top:429px;width:10px;height:1px;background:repeating-linear-gradient(90deg,#808080 0,#808080 1px,transparent 1px,transparent 2px)"></div><div style="position:absolute;left:84px;top:422px;width:11px;height:11px;border:1px solid #8e8f8f;background:linear-gradient(135deg,#f0f0f0,#fff 60%)"></div><svg style="position:absolute;left:100px;top:421px" width="16" height="16" viewBox="0 0 16 16"><defs><pattern id="dt" width="2" height="2" patternUnits="userSpaceOnUse"><rect width="1" height="1" fill="#6e6e6e"/></pattern></defs><path d="M3 1 H10 L13 4 V15 H3 Z" fill="#f4f4f4"/><path d="M3 1 H10 L13 4 V15 H3 Z" fill="url(#dt)"/></svg><span style="position:absolute;left:118px;top:423px;line-height:16px;white-space:pre;font:11px 'Liberation Sans',sans-serif;letter-spacing:-0.09px;color:#000;">User actions file:</span><div style="position:absolute;left:52px;top:437px;width:1px;height:16px;background:repeating-linear-gradient(#808080 0,#808080 1px,transparent 1px,transparent 2px)"></div><div style="position:absolute;left:71px;top:437px;width:1px;height:9px;background:repeating-linear-gradient(#808080 0,#808080 1px,transparent 1px,transparent 2px)"></div><div style="position:absolute;left:72px;top:445px;width:10px;height:1px;background:repeating-linear-gradient(90deg,#808080 0,#808080 1px,transparent 1px,transparent 2px)"></div><div style="position:absolute;left:84px;top:438px;width:11px;height:11px;border:1px solid #8e8f8f;background:linear-gradient(135deg,#f0f0f0,#fff 60%)"></div><svg style="position:absolute;left:100px;top:437px" width="16" height="16" viewBox="0 0 16 16"><defs><pattern id="dt" width="2" height="2" patternUnits="userSpaceOnUse"><rect width="1" height="1" fill="#6e6e6e"/></pattern></defs><path d="M3 1 H10 L13 4 V15 H3 Z" fill="#f4f4f4"/><path d="M3 1 H10 L13 4 V15 H3 Z" fill="url(#dt)"/></svg><span style="position:absolute;left:118px;top:439px;line-height:16px;white-space:pre;font:11px 'Liberation Sans',sans-serif;letter-spacing:-0.09px;color:#000;">User commands file:</span><div style="position:absolute;left:52px;top:453px;width:1px;height:16px;background:repeating-linear-gradient(#808080 0,#808080 1px,transparent 1px,transparent 2px)"></div><div style="position:absolute;left:57px;top:461px;width:6px;height:1px;background:repeating-linear-gradient(90deg,#808080 0,#808080 1px,transparent 1px,transparent 2px)"></div><div style="position:absolute;left:48px;top:457px;width:7px;height:7px;border:1px solid #919191;border-radius:2px;background:linear-gradient(135deg,#fff,#e4e4e4)"></div><div style="position:absolute;left:50px;top:461px;width:5px;height:1px;background:#1b3a9c"></div><div style="position:absolute;left:52px;top:459px;width:1px;height:5px;background:#1b3a9c"></div><svg style="position:absolute;left:63px;top:453px" width="16" height="16" viewBox="0 0 16 16"><rect x="0.5" y="4.5" width="4" height="7" fill="#ffff00" stroke="#808000"/><rect x="11.5" y="4.5" width="4" height="7" fill="#ffff00" stroke="#808000"/><rect x="6" y="6" width="4" height="4" fill="#6e6e00"/><path d="M4.5 8H6M10 8H11.5" stroke="#808000" stroke-width="2"/></svg><span style="position:absolute;left:83px;top:455px;line-height:16px;white-space:pre;font:11px 'Liberation Sans',sans-serif;letter-spacing:-0.09px;color:#000;letter-spacing:-0.2px;">BeiDou constellation</span><div style="position:absolute;left:52px;top:469px;width:1px;height:16px;background:repeating-linear-gradient(#808080 0,#808080 1px,transparent 1px,transparent 2px)"></div><div style="position:absolute;left:57px;top:477px;width:6px;height:1px;background:repeating-linear-gradient(90deg,#808080 0,#808080 1px,transparent 1px,transparent 2px)"></div><div style="position:absolute;left:48px;top:473px;width:7px;height:7px;border:1px solid #919191;border-radius:2px;background:linear-gradient(135deg,#fff,#e4e4e4)"></div><div style="position:absolute;left:50px;top:477px;width:5px;height:1px;background:#1b3a9c"></div><svg style="position:absolute;left:63px;top:469px" width="16" height="16" viewBox="0 0 16 16"><rect x="0.5" y="4.5" width="4" height="7" fill="#ffff00" stroke="#808000"/><rect x="11.5" y="4.5" width="4" height="7" fill="#ffff00" stroke="#808000"/><rect x="6" y="6" width="4" height="4" fill="#6e6e00"/><path d="M4.5 8H6M10 8H11.5" stroke="#808000" stroke-width="2"/></svg><span style="position:absolute;left:83px;top:471px;line-height:16px;white-space:pre;font:11px 'Liberation Sans',sans-serif;letter-spacing:-0.09px;color:#000;letter-spacing:-0.27px;">GALILEO constellation</span><div style="position:absolute;left:52px;top:485px;width:1px;height:16px;background:repeating-linear-gradient(#808080 0,#808080 1px,transparent 1px,transparent 2px)"></div><div style="position:absolute;left:71px;top:485px;width:1px;height:16px;background:repeating-linear-gradient(#808080 0,#808080 1px,transparent 1px,transparent 2px)"></div><div style="position:absolute;left:72px;top:493px;width:10px;height:1px;background:repeating-linear-gradient(90deg,#808080 0,#808080 1px,transparent 1px,transparent 2px)"></div><svg style="position:absolute;left:84px;top:485px" width="16" height="16" viewBox="0 0 16 16"><path d="M3.5 1.5 H10.5 L13.5 4.5 V14.5 H3.5 Z" fill="#fff" stroke="#555" stroke-width="1"/><path d="M10.5 1.5 V4.5 H13.5" fill="none" stroke="#888" stroke-width="1"/><path d="M5 4.5H9.5M5 6.5H12M5 8.5H12M5 10.5H12M5 12.5H12" stroke="#000" stroke-width="1"/></svg><span style="position:absolute;left:102px;top:487px;line-height:16px;white-space:pre;font:11px 'Liberation Sans',sans-serif;letter-spacing:-0.09px;color:#000;letter-spacing:-0.2px;">GALILEO signal sources file: default_v1-10.gleo</span><div style="position:absolute;left:52px;top:501px;width:1px;height:16px;background:repeating-linear-gradient(#808080 0,#808080 1px,transparent 1px,transparent 2px)"></div><div style="position:absolute;left:71px;top:501px;width:1px;height:9px;background:repeating-linear-gradient(#808080 0,#808080 1px,transparent 1px,transparent 2px)"></div><div style="position:absolute;left:72px;top:509px;width:10px;height:1px;background:repeating-linear-gradient(90deg,#808080 0,#808080 1px,transparent 1px,transparent 2px)"></div><div style="position:absolute;left:84px;top:502px;width:11px;height:11px;border:1px solid #8e8f8f;background:linear-gradient(135deg,#f0f0f0,#fff 60%)"></div><svg style="position:absolute;left:100px;top:501px" width="16" height="16" viewBox="0 0 16 16"><text x="8" y="13" text-anchor="middle" font-family="Liberation Sans,sans-serif" font-weight="bold" font-size="14" fill="#000">?</text></svg><span style="position:absolute;left:118px;top:503px;line-height:16px;white-space:pre;font:11px 'Liberation Sans',sans-serif;letter-spacing:-0.09px;color:#000;">Enable Tx antenna patterns</span><div style="position:absolute;left:52px;top:517px;width:1px;height:16px;background:repeating-linear-gradient(#808080 0,#808080 1px,transparent 1px,transparent 2px)"></div><div style="position:absolute;left:57px;top:525px;width:6px;height:1px;background:repeating-linear-gradient(90deg,#808080 0,#808080 1px,transparent 1px,transparent 2px)"></div><div style="position:absolute;left:48px;top:521px;width:7px;height:7px;border:1px solid #919191;border-radius:2px;background:linear-gradient(135deg,#fff,#e4e4e4)"></div><div style="position:absolute;left:50px;top:525px;width:5px;height:1px;background:#1b3a9c"></div><div style="position:absolute;left:52px;top:523px;width:1px;height:5px;background:#1b3a9c"></div><svg style="position:absolute;left:63px;top:517px" width="16" height="16" viewBox="0 0 16 16"><rect x="0.5" y="4.5" width="4" height="7" fill="#ffff00" stroke="#808000"/><rect x="11.5" y="4.5" width="4" height="7" fill="#ffff00" stroke="#808000"/><rect x="6" y="6" width="4" height="4" fill="#6e6e00"/><path d="M4.5 8H6M10 8H11.5" stroke="#808000" stroke-width="2"/></svg><span style="position:absolute;left:83px;top:519px;line-height:16px;white-space:pre;font:11px 'Liberation Sans',sans-serif;letter-spacing:-0.09px;color:#000;letter-spacing:-0.4px;">GLONASS constellation</span><div style="position:absolute;left:52px;top:533px;width:1px;height:16px;background:repeating-linear-gradient(#808080 0,#808080 1px,transparent 1px,transparent 2px)"></div><div style="position:absolute;left:57px;top:541px;width:6px;height:1px;background:repeating-linear-gradient(90deg,#808080 0,#808080 1px,transparent 1px,transparent 2px)"></div><div style="position:absolute;left:48px;top:537px;width:7px;height:7px;border:1px solid #919191;border-radius:2px;background:linear-gradient(135deg,#fff,#e4e4e4)"></div><div style="position:absolute;left:50px;top:541px;width:5px;height:1px;background:#1b3a9c"></div><div style="position:absolute;left:52px;top:539px;width:1px;height:5px;background:#1b3a9c"></div><svg style="position:absolute;left:63px;top:533px" width="16" height="16" viewBox="0 0 16 16"><rect x="0.5" y="4.5" width="4" height="7" fill="#ffff00" stroke="#808000"/><rect x="11.5" y="4.5" width="4" height="7" fill="#ffff00" stroke="#808000"/><rect x="6" y="6" width="4" height="4" fill="#6e6e00"/><path d="M4.5 8H6M10 8H11.5" stroke="#808000" stroke-width="2"/></svg><span style="position:absolute;left:83px;top:535px;line-height:16px;white-space:pre;font:11px 'Liberation Sans',sans-serif;letter-spacing:-0.09px;color:#000;letter-spacing:-0.3px;">GPS constellation</span><div style="position:absolute;left:52px;top:549px;width:1px;height:9px;background:repeating-linear-gradient(#808080 0,#808080 1px,transparent 1px,transparent 2px)"></div><div style="position:absolute;left:57px;top:557px;width:6px;height:1px;background:repeating-linear-gradient(90deg,#808080 0,#808080 1px,transparent 1px,transparent 2px)"></div><div style="position:absolute;left:48px;top:553px;width:7px;height:7px;border:1px solid #919191;border-radius:2px;background:linear-gradient(135deg,#fff,#e4e4e4)"></div><div style="position:absolute;left:50px;top:557px;width:5px;height:1px;background:#1b3a9c"></div><svg style="position:absolute;left:63px;top:549px" width="16" height="16" viewBox="0 0 16 16"><path d="M8 1.5 L14.5 13.5 H1.5 Z" fill="#fff" stroke="#000" stroke-width="1.1"/><rect x="7.2" y="9" width="1.7" height="1.7" fill="#000"/></svg><span style="position:absolute;left:83px;top:551px;line-height:16px;white-space:pre;font:11px 'Liberation Sans',sans-serif;letter-spacing:-0.09px;color:#000;">Vehicle 1</span><div style="position:absolute;left:71px;top:565px;width:1px;height:16px;background:repeating-linear-gradient(#808080 0,#808080 1px,transparent 1px,transparent 2px)"></div><div style="position:absolute;left:76px;top:573px;width:10px;height:1px;background:repeating-linear-gradient(90deg,#808080 0,#808080 1px,transparent 1px,transparent 2px)"></div><div style="position:absolute;left:67px;top:569px;width:7px;height:7px;border:1px solid #919191;border-radius:2px;background:linear-gradient(135deg,#fff,#e4e4e4)"></div><div style="position:absolute;left:69px;top:573px;width:5px;height:1px;background:#1b3a9c"></div><svg style="position:absolute;left:82px;top:565px" width="16" height="16" viewBox="0 0 16 16"><path d="M8 3.8 L12.2 8 L8 12.2 L3.8 8 Z" fill="#6c6c6c"/></svg><span style="position:absolute;left:102px;top:567px;line-height:16px;white-space:pre;font:11px 'Liberation Sans',sans-serif;letter-spacing:-0.09px;color:#000;">Motion</span><div style="position:absolute;left:71px;top:581px;width:1px;height:16px;background:repeating-linear-gradient(#808080 0,#808080 1px,transparent 1px,transparent 2px)"></div><div style="position:absolute;left:90px;top:581px;width:1px;height:9px;background:repeating-linear-gradient(#808080 0,#808080 1px,transparent 1px,transparent 2px)"></div><div style="position:absolute;left:91px;top:589px;width:10px;height:1px;background:repeating-linear-gradient(90deg,#808080 0,#808080 1px,transparent 1px,transparent 2px)"></div><svg style="position:absolute;left:103px;top:581px" width="16" height="16" viewBox="0 0 16 16"><path d="M3.5 1.5 H10.5 L13.5 4.5 V14.5 H3.5 Z" fill="#fff" stroke="#555" stroke-width="1"/><path d="M10.5 1.5 V4.5 H13.5" fill="none" stroke="#888" stroke-width="1"/><path d="M5 4.5H9.5M5 6.5H12M5 8.5H12M5 10.5H12M5 12.5H12" stroke="#000" stroke-width="1"/></svg><div style="position:absolute;left:119px;top:581px;width:141px;height:16px;background:#ebebeb"></div><span style="position:absolute;left:121px;top:583px;line-height:16px;white-space:pre;font:11px 'Liberation Sans',sans-serif;letter-spacing:-0.09px;color:#000;">Initial reference file: 123.ref</span><div style="position:absolute;left:71px;top:597px;width:1px;height:16px;background:repeating-linear-gradient(#808080 0,#808080 1px,transparent 1px,transparent 2px)"></div><div style="position:absolute;left:76px;top:605px;width:10px;height:1px;background:repeating-linear-gradient(90deg,#808080 0,#808080 1px,transparent 1px,transparent 2px)"></div><div style="position:absolute;left:67px;top:601px;width:7px;height:7px;border:1px solid #919191;border-radius:2px;background:linear-gradient(135deg,#fff,#e4e4e4)"></div><div style="position:absolute;left:69px;top:605px;width:5px;height:1px;background:#1b3a9c"></div><svg style="position:absolute;left:82px;top:597px" width="16" height="16" viewBox="0 0 16 16"><path d="M8 3.8 L12.2 8 L8 12.2 L3.8 8 Z" fill="#6c6c6c"/></svg><span style="position:absolute;left:102px;top:599px;line-height:16px;white-space:pre;font:11px 'Liberation Sans',sans-serif;letter-spacing:-0.09px;color:#000;">Aiding</span><div style="position:absolute;left:71px;top:613px;width:1px;height:16px;background:repeating-linear-gradient(#808080 0,#808080 1px,transparent 1px,transparent 2px)"></div><div style="position:absolute;left:90px;top:613px;width:1px;height:16px;background:repeating-linear-gradient(#808080 0,#808080 1px,transparent 1px,transparent 2px)"></div><div style="position:absolute;left:91px;top:621px;width:10px;height:1px;background:repeating-linear-gradient(90deg,#808080 0,#808080 1px,transparent 1px,transparent 2px)"></div><div style="position:absolute;left:103px;top:614px;width:11px;height:11px;border:1px solid #8e8f8f;background:linear-gradient(135deg,#f0f0f0,#fff 60%)"></div><svg style="position:absolute;left:119px;top:613px" width="16" height="16" viewBox="0 0 16 16"><defs><pattern id="dt" width="2" height="2" patternUnits="userSpaceOnUse"><rect width="1" height="1" fill="#6e6e6e"/></pattern></defs><path d="M3 1 H10 L13 4 V15 H3 Z" fill="#f4f4f4"/><path d="M3 1 H10 L13 4 V15 H3 Z" fill="url(#dt)"/></svg><span style="position:absolute;left:137px;top:615px;line-height:16px;white-space:pre;font:11px 'Liberation Sans',sans-serif;letter-spacing:-0.09px;color:#000;">INS model file:</span><div style="position:absolute;left:71px;top:629px;width:1px;height:16px;background:repeating-linear-gradient(#808080 0,#808080 1px,transparent 1px,transparent 2px)"></div><div style="position:absolute;left:90px;top:629px;width:1px;height:16px;background:repeating-linear-gradient(#808080 0,#808080 1px,transparent 1px,transparent 2px)"></div><div style="position:absolute;left:91px;top:637px;width:10px;height:1px;background:repeating-linear-gradient(90deg,#808080 0,#808080 1px,transparent 1px,transparent 2px)"></div><div style="position:absolute;left:103px;top:630px;width:11px;height:11px;border:1px solid #8e8f8f;background:linear-gradient(135deg,#f0f0f0,#fff 60%)"></div><svg style="position:absolute;left:119px;top:629px" width="16" height="16" viewBox="0 0 16 16"><defs><pattern id="dt" width="2" height="2" patternUnits="userSpaceOnUse"><rect width="1" height="1" fill="#6e6e6e"/></pattern></defs><path d="M3 1 H10 L13 4 V15 H3 Z" fill="#f4f4f4"/><path d="M3 1 H10 L13 4 V15 H3 Z" fill="url(#dt)"/></svg><span style="position:absolute;left:137px;top:631px;line-height:16px;white-space:pre;font:11px 'Liberation Sans',sans-serif;letter-spacing:-0.09px;color:#000;">INS model file:</span><div style="position:absolute;left:71px;top:645px;width:1px;height:16px;background:repeating-linear-gradient(#808080 0,#808080 1px,transparent 1px,transparent 2px)"></div><div style="position:absolute;left:90px;top:645px;width:1px;height:16px;background:repeating-linear-gradient(#808080 0,#808080 1px,transparent 1px,transparent 2px)"></div><div style="position:absolute;left:91px;top:653px;width:10px;height:1px;background:repeating-linear-gradient(90deg,#808080 0,#808080 1px,transparent 1px,transparent 2px)"></div><div style="position:absolute;left:103px;top:646px;width:11px;height:11px;border:1px solid #8e8f8f;background:linear-gradient(135deg,#f0f0f0,#fff 60%)"></div><svg style="position:absolute;left:119px;top:645px" width="16" height="16" viewBox="0 0 16 16"><defs><pattern id="dt" width="2" height="2" patternUnits="userSpaceOnUse"><rect width="1" height="1" fill="#6e6e6e"/></pattern></defs><path d="M3 1 H10 L13 4 V15 H3 Z" fill="#f4f4f4"/><path d="M3 1 H10 L13 4 V15 H3 Z" fill="url(#dt)"/></svg><span style="position:absolute;left:137px;top:647px;line-height:16px;white-space:pre;font:11px 'Liberation Sans',sans-serif;letter-spacing:-0.09px;color:#000;">INS model file:</span><div style="position:absolute;left:71px;top:661px;width:1px;height:16px;background:repeating-linear-gradient(#808080 0,#808080 1px,transparent 1px,transparent 2px)"></div><div style="position:absolute;left:90px;top:661px;width:1px;height:9px;background:repeating-linear-gradient(#808080 0,#808080 1px,transparent 1px,transparent 2px)"></div><div style="position:absolute;left:91px;top:669px;width:10px;height:1px;background:repeating-linear-gradient(90deg,#808080 0,#808080 1px,transparent 1px,transparent 2px)"></div><div style="position:absolute;left:103px;top:662px;width:11px;height:11px;border:1px solid #8e8f8f;background:linear-gradient(135deg,#f0f0f0,#fff 60%)"></div><svg style="position:absolute;left:119px;top:661px" width="16" height="16" viewBox="0 0 16 16"><defs><pattern id="dt" width="2" height="2" patternUnits="userSpaceOnUse"><rect width="1" height="1" fill="#6e6e6e"/></pattern></defs><path d="M3 1 H10 L13 4 V15 H3 Z" fill="#f4f4f4"/><path d="M3 1 H10 L13 4 V15 H3 Z" fill="url(#dt)"/></svg><span style="position:absolute;left:137px;top:663px;line-height:16px;white-space:pre;font:11px 'Liberation Sans',sans-serif;letter-spacing:-0.09px;color:#000;">INS model file:</span><div style="position:absolute;left:71px;top:677px;width:1px;height:16px;background:repeating-linear-gradient(#808080 0,#808080 1px,transparent 1px,transparent 2px)"></div><div style="position:absolute;left:76px;top:685px;width:10px;height:1px;background:repeating-linear-gradient(90deg,#808080 0,#808080 1px,transparent 1px,transparent 2px)"></div><div style="position:absolute;left:67px;top:681px;width:7px;height:7px;border:1px solid #919191;border-radius:2px;background:linear-gradient(135deg,#fff,#e4e4e4)"></div><div style="position:absolute;left:69px;top:685px;width:5px;height:1px;background:#1b3a9c"></div><svg style="position:absolute;left:82px;top:677px" width="16" height="16" viewBox="0 0 16 16"><path d="M8 3.8 L12.2 8 L8 12.2 L3.8 8 Z" fill="#6c6c6c"/></svg><span style="position:absolute;left:102px;top:679px;line-height:16px;white-space:pre;font:11px 'Liberation Sans',sans-serif;letter-spacing:-0.09px;color:#000;">Options</span><div style="position:absolute;left:71px;top:693px;width:1px;height:16px;background:repeating-linear-gradient(#808080 0,#808080 1px,transparent 1px,transparent 2px)"></div><div style="position:absolute;left:90px;top:693px;width:1px;height:16px;background:repeating-linear-gradient(#808080 0,#808080 1px,transparent 1px,transparent 2px)"></div><div style="position:absolute;left:91px;top:701px;width:10px;height:1px;background:repeating-linear-gradient(90deg,#808080 0,#808080 1px,transparent 1px,transparent 2px)"></div><div style="position:absolute;left:103px;top:694px;width:11px;height:11px;border:1px solid #8e8f8f;background:linear-gradient(135deg,#f0f0f0,#fff 60%)"></div><svg style="position:absolute;left:119px;top:693px" width="16" height="16" viewBox="0 0 16 16"><defs><pattern id="dt" width="2" height="2" patternUnits="userSpaceOnUse"><rect width="1" height="1" fill="#6e6e6e"/></pattern></defs><path d="M3 1 H10 L13 4 V15 H3 Z" fill="#f4f4f4"/><path d="M3 1 H10 L13 4 V15 H3 Z" fill="url(#dt)"/></svg><span style="position:absolute;left:137px;top:695px;line-height:16px;white-space:pre;font:11px 'Liberation Sans',sans-serif;letter-spacing:-0.09px;color:#000;">G-sensitivity file:</span><div style="position:absolute;left:71px;top:709px;width:1px;height:16px;background:repeating-linear-gradient(#808080 0,#808080 1px,transparent 1px,transparent 2px)"></div><div style="position:absolute;left:90px;top:709px;width:1px;height:16px;background:repeating-linear-gradient(#808080 0,#808080 1px,transparent 1px,transparent 2px)"></div><div style="position:absolute;left:91px;top:717px;width:10px;height:1px;background:repeating-linear-gradient(90deg,#808080 0,#808080 1px,transparent 1px,transparent 2px)"></div><div style="position:absolute;left:103px;top:710px;width:11px;height:11px;border:1px solid #8e8f8f;background:linear-gradient(135deg,#f0f0f0,#fff 60%)"></div><svg style="position:absolute;left:119px;top:709px" width="16" height="16" viewBox="0 0 16 16"><defs><pattern id="dt" width="2" height="2" patternUnits="userSpaceOnUse"><rect width="1" height="1" fill="#6e6e6e"/></pattern></defs><path d="M3 1 H10 L13 4 V15 H3 Z" fill="#f4f4f4"/><path d="M3 1 H10 L13 4 V15 H3 Z" fill="url(#dt)"/></svg><span style="position:absolute;left:137px;top:711px;line-height:16px;white-space:pre;font:11px 'Liberation Sans',sans-serif;letter-spacing:-0.09px;color:#000;">Vertical plane file:</span><div style="position:absolute;left:71px;top:725px;width:1px;height:16px;background:repeating-linear-gradient(#808080 0,#808080 1px,transparent 1px,transparent 2px)"></div><div style="position:absolute;left:90px;top:725px;width:1px;height:9px;background:repeating-linear-gradient(#808080 0,#808080 1px,transparent 1px,transparent 2px)"></div><div style="position:absolute;left:91px;top:733px;width:10px;height:1px;background:repeating-linear-gradient(90deg,#808080 0,#808080 1px,transparent 1px,transparent 2px)"></div><div style="position:absolute;left:103px;top:726px;width:11px;height:11px;border:1px solid #8e8f8f;background:linear-gradient(135deg,#f0f0f0,#fff 60%)"></div><svg style="position:absolute;left:119px;top:725px" width="16" height="16" viewBox="0 0 16 16"><defs><pattern id="dt" width="2" height="2" patternUnits="userSpaceOnUse"><rect width="1" height="1" fill="#6e6e6e"/></pattern></defs><path d="M3 1 H10 L13 4 V15 H3 Z" fill="#f4f4f4"/><path d="M3 1 H10 L13 4 V15 H3 Z" fill="url(#dt)"/></svg><span style="position:absolute;left:137px;top:727px;line-height:16px;white-space:pre;font:11px 'Liberation Sans',sans-serif;letter-spacing:-0.09px;color:#000;">Land mobile multipath file:</span><div style="position:absolute;left:71px;top:741px;width:1px;height:9px;background:repeating-linear-gradient(#808080 0,#808080 1px,transparent 1px,transparent 2px)"></div><div style="position:absolute;left:76px;top:749px;width:6px;height:1px;background:repeating-linear-gradient(90deg,#808080 0,#808080 1px,transparent 1px,transparent 2px)"></div><div style="position:absolute;left:67px;top:745px;width:7px;height:7px;border:1px solid #919191;border-radius:2px;background:linear-gradient(135deg,#fff,#e4e4e4)"></div><div style="position:absolute;left:69px;top:749px;width:5px;height:1px;background:#1b3a9c"></div><svg style="position:absolute;left:82px;top:741px" width="16" height="16" viewBox="0 0 16 16"><path d="M3 2 L8 8 L13 2 M8 1.5 V14" fill="none" stroke="#000" stroke-width="1.1"/><rect x="5.5" y="13.5" width="5" height="2" fill="#000"/></svg><span style="position:absolute;left:102px;top:743px;line-height:16px;white-space:pre;font:11px 'Liberation Sans',sans-serif;letter-spacing:-0.09px;color:#000;">Antenna  1</span><div style="position:absolute;left:90px;top:757px;width:1px;height:16px;background:repeating-linear-gradient(#808080 0,#808080 1px,transparent 1px,transparent 2px)"></div><div style="position:absolute;left:91px;top:765px;width:10px;height:1px;background:repeating-linear-gradient(90deg,#808080 0,#808080 1px,transparent 1px,transparent 2px)"></div><svg style="position:absolute;left:101px;top:757px" width="16" height="16" viewBox="0 0 16 16"><path d="M8 0V5M8 11V16M0 8H5M11 8H16M2.5 2.5L5.5 5.5M13.5 2.5L10.5 5.5M2.5 13.5L5.5 10.5M13.5 13.5L10.5 10.5" stroke="#9a9a00" stroke-width="1.1"/><rect x="6.5" y="5.5" width="3" height="4" fill="#000"/><path d="M8 9V15" stroke="#000" stroke-width="1.2"/></svg><span style="position:absolute;left:121px;top:759px;line-height:16px;white-space:pre;font:11px 'Liberation Sans',sans-serif;letter-spacing:-0.09px;color:#000;letter-spacing:-0.32px;">Signal types: GPS L1, GLONASS L1, GALILEO E1, BeiDou B1</span><div style="position:absolute;left:90px;top:773px;width:1px;height:16px;background:repeating-linear-gradient(#808080 0,#808080 1px,transparent 1px,transparent 2px)"></div><div style="position:absolute;left:91px;top:781px;width:10px;height:1px;background:repeating-linear-gradient(90deg,#808080 0,#808080 1px,transparent 1px,transparent 2px)"></div><svg style="position:absolute;left:101px;top:773px" width="16" height="16" viewBox="0 0 16 16"><g shape-rendering="crispEdges"><rect x="0.5" y="3.5" width="13" height="8" fill="#fff" stroke="#000"/><path d="M2.5 5V10M4.5 5V10M6.5 5V10M8.5 5V10M10.5 5V10" stroke="#000" stroke-width="1"/></g></svg><span style="position:absolute;left:121px;top:775px;line-height:16px;white-space:pre;font:11px 'Liberation Sans',sans-serif;letter-spacing:-0.09px;color:#000;letter-spacing:-0.32px;">Hardware channels: GPS/SBAS L1*12, GLN L1*12, GAL E1*12</span><div style="position:absolute;left:90px;top:789px;width:1px;height:16px;background:repeating-linear-gradient(#808080 0,#808080 1px,transparent 1px,transparent 2px)"></div><div style="position:absolute;left:95px;top:797px;width:10px;height:1px;background:repeating-linear-gradient(90deg,#808080 0,#808080 1px,transparent 1px,transparent 2px)"></div><div style="position:absolute;left:86px;top:793px;width:7px;height:7px;border:1px solid #919191;border-radius:2px;background:linear-gradient(135deg,#fff,#e4e4e4)"></div><div style="position:absolute;left:88px;top:797px;width:5px;height:1px;background:#1b3a9c"></div><svg style="position:absolute;left:101px;top:789px" width="16" height="16" viewBox="0 0 16 16"><path d="M8 3.8 L12.2 8 L8 12.2 L3.8 8 Z" fill="#6c6c6c"/></svg><span style="position:absolute;left:121px;top:791px;line-height:16px;white-space:pre;font:11px 'Liberation Sans',sans-serif;letter-spacing:-0.09px;color:#000;">Options</span><div style="position:absolute;left:90px;top:805px;width:1px;height:16px;background:repeating-linear-gradient(#808080 0,#808080 1px,transparent 1px,transparent 2px)"></div><div style="position:absolute;left:109px;top:805px;width:1px;height:16px;background:repeating-linear-gradient(#808080 0,#808080 1px,transparent 1px,transparent 2px)"></div><div style="position:absolute;left:110px;top:813px;width:10px;height:1px;background:repeating-linear-gradient(90deg,#808080 0,#808080 1px,transparent 1px,transparent 2px)"></div><svg style="position:absolute;left:122px;top:805px" width="16" height="16" viewBox="0 0 16 16"><path d="M3.5 1.5 H10.5 L13.5 4.5 V14.5 H3.5 Z" fill="#fff" stroke="#555" stroke-width="1"/><path d="M10.5 1.5 V4.5 H13.5" fill="none" stroke="#888" stroke-width="1"/><path d="M5 4.5H9.5M5 6.5H12M5 8.5H12M5 10.5H12M5 12.5H12" stroke="#000" stroke-width="1"/></svg><span style="position:absolute;left:140px;top:807px;line-height:16px;white-space:pre;font:11px 'Liberation Sans',sans-serif;letter-spacing:-0.09px;color:#000;">Offsets file: default_v1-0.aof</span><div style="position:absolute;left:90px;top:821px;width:1px;height:16px;background:repeating-linear-gradient(#808080 0,#808080 1px,transparent 1px,transparent 2px)"></div><div style="position:absolute;left:109px;top:821px;width:1px;height:16px;background:repeating-linear-gradient(#808080 0,#808080 1px,transparent 1px,transparent 2px)"></div><div style="position:absolute;left:110px;top:829px;width:10px;height:1px;background:repeating-linear-gradient(90deg,#808080 0,#808080 1px,transparent 1px,transparent 2px)"></div><div style="position:absolute;left:122px;top:822px;width:11px;height:11px;border:1px solid #8e8f8f;background:linear-gradient(135deg,#f0f0f0,#fff 60%)"></div><svg style="position:absolute;left:138px;top:821px" width="16" height="16" viewBox="0 0 16 16"><defs><pattern id="dt" width="2" height="2" patternUnits="userSpaceOnUse"><rect width="1" height="1" fill="#6e6e6e"/></pattern></defs><path d="M3 1 H10 L13 4 V15 H3 Z" fill="#f4f4f4"/><path d="M3 1 H10 L13 4 V15 H3 Z" fill="url(#dt)"/></svg><span style="position:absolute;left:156px;top:823px;line-height:16px;white-space:pre;font:11px 'Liberation Sans',sans-serif;letter-spacing:-0.09px;color:#000;">Receiver clock model file:</span><div style="position:absolute;left:90px;top:837px;width:1px;height:16px;background:repeating-linear-gradient(#808080 0,#808080 1px,transparent 1px,transparent 2px)"></div><div style="position:absolute;left:109px;top:837px;width:1px;height:16px;background:repeating-linear-gradient(#808080 0,#808080 1px,transparent 1px,transparent 2px)"></div><div style="position:absolute;left:110px;top:845px;width:10px;height:1px;background:repeating-linear-gradient(90deg,#808080 0,#808080 1px,transparent 1px,transparent 2px)"></div><div style="position:absolute;left:122px;top:838px;width:11px;height:11px;border:1px solid #8e8f8f;background:linear-gradient(135deg,#f0f0f0,#fff 60%)"></div><svg style="position:absolute;left:138px;top:837px" width="16" height="16" viewBox="0 0 16 16"><defs><pattern id="dt" width="2" height="2" patternUnits="userSpaceOnUse"><rect width="1" height="1" fill="#6e6e6e"/></pattern></defs><path d="M3 1 H10 L13 4 V15 H3 Z" fill="#f4f4f4"/><path d="M3 1 H10 L13 4 V15 H3 Z" fill="url(#dt)"/></svg><span style="position:absolute;left:156px;top:839px;line-height:16px;white-space:pre;font:11px 'Liberation Sans',sans-serif;letter-spacing:-0.09px;color:#000;">Target DOP value switching file:</span><div style="position:absolute;left:90px;top:853px;width:1px;height:16px;background:repeating-linear-gradient(#808080 0,#808080 1px,transparent 1px,transparent 2px)"></div><div style="position:absolute;left:109px;top:853px;width:1px;height:9px;background:repeating-linear-gradient(#808080 0,#808080 1px,transparent 1px,transparent 2px)"></div><div style="position:absolute;left:110px;top:861px;width:10px;height:1px;background:repeating-linear-gradient(90deg,#808080 0,#808080 1px,transparent 1px,transparent 2px)"></div><div style="position:absolute;left:122px;top:854px;width:11px;height:11px;border:1px solid #8e8f8f;background:linear-gradient(135deg,#f0f0f0,#fff 60%)"></div><svg style="position:absolute;left:138px;top:853px" width="16" height="16" viewBox="0 0 16 16"><path d="M1 3 L7.5 11 L14 3" fill="none" stroke="#ff0000" stroke-width="1.1"/><path d="M14.5 2.5 L10.5 3 M14.5 2.5 L14 6.5" stroke="#ff0000" stroke-width="1.1"/><path d="M1 11.5H14" stroke="#000" stroke-width="1"/><path d="M3 12L1.5 14.5M6 12L4.5 14.5M9 12L7.5 14.5M12 12L10.5 14.5" stroke="#000" stroke-width="1"/></svg><span style="position:absolute;left:156px;top:855px;line-height:16px;white-space:pre;font:11px 'Liberation Sans',sans-serif;letter-spacing:-0.09px;color:#000;">Enable reflection pattern multipath</span><div style="position:absolute;left:90px;top:869px;width:1px;height:9px;background:repeating-linear-gradient(#808080 0,#808080 1px,transparent 1px,transparent 2px)"></div><div style="position:absolute;left:95px;top:877px;width:6px;height:1px;background:repeating-linear-gradient(90deg,#808080 0,#808080 1px,transparent 1px,transparent 2px)"></div><div style="position:absolute;left:86px;top:873px;width:7px;height:7px;border:1px solid #919191;border-radius:2px;background:linear-gradient(135deg,#fff,#e4e4e4)"></div><div style="position:absolute;left:88px;top:877px;width:5px;height:1px;background:#1b3a9c"></div><svg style="position:absolute;left:101px;top:869px" width="16" height="16" viewBox="0 0 16 16"><path d="M3 2 L8 8 L13 2 M8 1.5 V14" fill="none" stroke="#000" stroke-width="1.1"/><rect x="5.5" y="13.5" width="5" height="2" fill="#000"/></svg><span style="position:absolute;left:121px;top:871px;line-height:16px;white-space:pre;font:11px 'Liberation Sans',sans-serif;letter-spacing:-0.09px;color:#000;">Antenna pattern control</span><div style="position:absolute;left:109px;top:885px;width:1px;height:16px;background:repeating-linear-gradient(#808080 0,#808080 1px,transparent 1px,transparent 2px)"></div><div style="position:absolute;left:110px;top:893px;width:10px;height:1px;background:repeating-linear-gradient(90deg,#808080 0,#808080 1px,transparent 1px,transparent 2px)"></div><div style="position:absolute;left:122px;top:886px;width:11px;height:11px;border:1px solid #8e8f8f;background:linear-gradient(135deg,#f0f0f0,#fff 60%)"></div><svg style="position:absolute;left:123px;top:887px" width="11" height="11" viewBox="0 0 11 11"><path d="M2 5.2 L4.3 8 L9 2.5" fill="none" stroke="#000" stroke-width="2"/></svg><svg style="position:absolute;left:138px;top:885px" width="16" height="16" viewBox="0 0 16 16"><text x="8" y="13" text-anchor="middle" font-family="Liberation Sans,sans-serif" font-weight="bold" font-size="14" fill="#000">?</text></svg><span style="position:absolute;left:156px;top:887px;line-height:16px;white-space:pre;font:11px 'Liberation Sans',sans-serif;letter-spacing:-0.09px;color:#000;">Enable level patterns</span><div style="position:absolute;left:109px;top:901px;width:1px;height:16px;background:repeating-linear-gradient(#808080 0,#808080 1px,transparent 1px,transparent 2px)"></div><div style="position:absolute;left:110px;top:909px;width:10px;height:1px;background:repeating-linear-gradient(90deg,#808080 0,#808080 1px,transparent 1px,transparent 2px)"></div><div style="position:absolute;left:122px;top:902px;width:11px;height:11px;border:1px solid #8e8f8f;background:linear-gradient(135deg,#f0f0f0,#fff 60%)"></div><svg style="position:absolute;left:138px;top:901px" width="16" height="16" viewBox="0 0 16 16"><text x="8" y="13" text-anchor="middle" font-family="Liberation Sans,sans-serif" font-weight="bold" font-size="14" fill="#000">?</text></svg><span style="position:absolute;left:156px;top:903px;line-height:16px;white-space:pre;font:11px 'Liberation Sans',sans-serif;letter-spacing:-0.09px;color:#000;">Enable phase patterns</span><div style="position:absolute;left:109px;top:917px;width:1px;height:9px;background:repeating-linear-gradient(#808080 0,#808080 1px,transparent 1px,transparent 2px)"></div><div style="position:absolute;left:110px;top:925px;width:10px;height:1px;background:repeating-linear-gradient(90deg,#808080 0,#808080 1px,transparent 1px,transparent 2px)"></div><div style="position:absolute;left:122px;top:918px;width:11px;height:11px;border:1px solid #8e8f8f;background:linear-gradient(135deg,#f0f0f0,#fff 60%)"></div><svg style="position:absolute;left:123px;top:919px" width="11" height="11" viewBox="0 0 11 11"><path d="M2 5.2 L4.3 8 L9 2.5" fill="none" stroke="#000" stroke-width="2"/></svg><svg style="position:absolute;left:138px;top:917px" width="16" height="16" viewBox="0 0 16 16"><text x="8" y="13" text-anchor="middle" font-family="Liberation Sans,sans-serif" font-weight="bold" font-size="14" fill="#000">?</text></svg><span style="position:absolute;left:156px;top:919px;line-height:16px;white-space:pre;font:11px 'Liberation Sans',sans-serif;letter-spacing:-0.09px;color:#000;">Same for all frequencies</span></div></div><div style="position:absolute;left:4px;top:84px;width:19px;height:843px;background:#fff"></div><div style="position:absolute;left:5px;top:85px;width:17px;height:842px;background:linear-gradient(90deg,#e3e3e3,#f2f2f2 40%,#f7f7f7)"></div><svg style="position:absolute;left:9px;top:90px;" width="9" height="6" viewBox="0 0 9 6"><path d="M0.5 5 L4.5 1 L8.5 5Z" fill="#333"/></svg><svg style="position:absolute;left:9px;top:915px;" width="9" height="6" viewBox="0 0 9 6"><path d="M0.5 1 L4.5 5 L8.5 1Z" fill="#333"/></svg><div style="position:absolute;left:6px;top:103px;width:15px;height:761px;border:1px solid #979797;border-radius:2px;background:linear-gradient(90deg,#f3f3f3 0,#e8e8e9 45%,#cfcfd1 55%,#dcdcde 100%);box-sizing:border-box"></div><div style="position:absolute;left:10px;top:480px;width:7px;height:1px;background:linear-gradient(90deg,#3a3a3a,#8a8a8a)"></div><div style="position:absolute;left:10px;top:481px;width:7px;height:1px;background:rgba(255,255,255,.8)"></div><div style="position:absolute;left:10px;top:483px;width:7px;height:1px;background:linear-gradient(90deg,#3a3a3a,#8a8a8a)"></div><div style="position:absolute;left:10px;top:484px;width:7px;height:1px;background:rgba(255,255,255,.8)"></div><div style="position:absolute;left:10px;top:486px;width:7px;height:1px;background:linear-gradient(90deg,#3a3a3a,#8a8a8a)"></div><div style="position:absolute;left:10px;top:487px;width:7px;height:1px;background:rgba(255,255,255,.8)"></div><div style="position:absolute;left:4px;top:927px;width:348px;height:17px;background:#f0f0f0"></div><div style="position:absolute;left:22px;top:927px;width:330px;height:17px;background:linear-gradient(#e3e3e3,#f2f2f2 40%,#f7f7f7)"></div><svg style="position:absolute;left:27px;top:931px;" width="6" height="9" viewBox="0 0 6 9"><path d="M5 0.5 L1 4.5 L5 8.5Z" fill="#333"/></svg><svg style="position:absolute;left:340px;top:931px;" width="6" height="9" viewBox="0 0 6 9"><path d="M1 0.5 L5 4.5 L1 8.5Z" fill="#333"/></svg><div style="position:absolute;left:40px;top:928px;width:210px;height:15px;border:1px solid #979797;border-radius:2px;background:linear-gradient(#f3f3f3 0,#e8e8e9 45%,#cfcfd1 55%,#dcdcde 100%);box-sizing:border-box"></div><div style="position:absolute;left:141px;top:932px;width:1px;height:7px;background:linear-gradient(#3a3a3a,#8a8a8a)"></div><div style="position:absolute;left:142px;top:932px;width:1px;height:7px;background:rgba(255,255,255,.8)"></div><div style="position:absolute;left:144px;top:932px;width:1px;height:7px;background:linear-gradient(#3a3a3a,#8a8a8a)"></div><div style="position:absolute;left:145px;top:932px;width:1px;height:7px;background:rgba(255,255,255,.8)"></div><div style="position:absolute;left:147px;top:932px;width:1px;height:7px;background:linear-gradient(#3a3a3a,#8a8a8a)"></div><div style="position:absolute;left:148px;top:932px;width:1px;height:7px;background:rgba(255,255,255,.8)"></div><div style="position:absolute;left:12px;top:955px;width:53px;height:19px;border-radius:3px;border:1px solid #707070;background:linear-gradient(#f2f2f2 0,#ebebeb 48%,#dddddd 52%,#cfcfcf 100%);box-shadow:inset 0 0 0 1px #fcfcfc;color:#000;font:11px 'Liberation Sans',sans-serif;letter-spacing:-0.1px;text-align:center;line-height:20px;white-space:pre">View...</div><div style="position:absolute;left:77px;top:955px;width:53px;height:19px;border-radius:3px;border:1px solid #adb2b5;background:#f4f4f4;box-shadow:inset 0 0 0 1px #fcfcfc;color:#838383;font:11px 'Liberation Sans',sans-serif;letter-spacing:-0.1px;text-align:center;line-height:20px;white-space:pre">Select...</div><div style="position:absolute;left:142px;top:955px;width:53px;height:19px;border-radius:3px;border:1px solid #adb2b5;background:#f4f4f4;box-shadow:inset 0 0 0 1px #fcfcfc;color:#838383;font:11px 'Liberation Sans',sans-serif;letter-spacing:-0.1px;text-align:center;line-height:20px;white-space:pre">Enable</div><div style="position:absolute;left:207px;top:955px;width:53px;height:19px;border-radius:3px;border:1px solid #adb2b5;background:#f4f4f4;box-shadow:inset 0 0 0 1px #fcfcfc;color:#838383;font:11px 'Liberation Sans',sans-serif;letter-spacing:-0.1px;text-align:center;line-height:20px;white-space:pre">Delete</div><div style="position:absolute;left:272px;top:955px;width:53px;height:19px;border-radius:3px;border:1px solid #adb2b5;background:#f4f4f4;box-shadow:inset 0 0 0 1px #fcfcfc;color:#838383;font:11px 'Liberation Sans',sans-serif;letter-spacing:-0.1px;text-align:center;line-height:20px;white-space:pre">New...</div><div style="position:absolute;left:12px;top:986px;width:53px;height:19px;border-radius:3px;border:1px solid #adb2b5;background:#f4f4f4;box-shadow:inset 0 0 0 1px #fcfcfc;color:#838383;font:11px 'Liberation Sans',sans-serif;letter-spacing:-0.1px;text-align:center;line-height:20px;white-space:pre">Rename...</div><div style="position:absolute;left:77px;top:986px;width:53px;height:19px;border-radius:3px;border:1px solid #adb2b5;background:#f4f4f4;box-shadow:inset 0 0 0 1px #fcfcfc;color:#838383;font:11px 'Liberation Sans',sans-serif;letter-spacing:-0.1px;text-align:center;line-height:20px;white-space:pre">Label...</div><div style="position:absolute;left:142px;top:986px;width:53px;height:19px;border-radius:3px;border:1px solid #707070;background:linear-gradient(#f2f2f2 0,#ebebeb 48%,#dddddd 52%,#cfcfcf 100%);box-shadow:inset 0 0 0 1px #fcfcfc;color:#000;font:11px 'Liberation Sans',sans-serif;letter-spacing:-0.1px;text-align:center;line-height:20px;white-space:pre">Print...</div><div style="position:absolute;left:207px;top:986px;width:53px;height:19px;border-radius:3px;border:1px solid #adb2b5;background:#f4f4f4;box-shadow:inset 0 0 0 1px #fcfcfc;color:#838383;font:11px 'Liberation Sans',sans-serif;letter-spacing:-0.1px;text-align:center;line-height:20px;white-space:pre">Expand</div><div style="position:absolute;left:272px;top:986px;width:53px;height:19px;border-radius:3px;border:1px solid #707070;background:linear-gradient(#f2f2f2 0,#ebebeb 48%,#dddddd 52%,#cfcfcf 100%);box-shadow:inset 0 0 0 1px #fcfcfc;color:#000;font:11px 'Liberation Sans',sans-serif;letter-spacing:-0.1px;text-align:center;line-height:20px;white-space:pre">Help</div><div style="position:absolute;left:10px;top:480px;width:0px;height:0px;"></div><div style="position:absolute;left:10px;top:483px;width:0px;height:0px;"></div><div style="position:absolute;left:10px;top:486px;width:0px;height:0px;"></div><div style="position:absolute;left:356px;top:67px;width:1563px;height:952px;background:#a9a9a9"></div><div style="position:absolute;left:357px;top:68px;width:1562px;height:951px;background:#444"></div><div style="position:absolute;left:358px;top:68px;width:1045px;height:238px;background:#444;border-radius:6px 6px 0 0"></div><div style="position:absolute;left:359px;top:69px;width:1043px;height:236px;background:linear-gradient(#bfcddb 0px,#cbd8e6 14px,#d7e4f2 30px,#d7e4f2 100%);border-radius:5px 5px 0 0;box-shadow:inset 1px 1px 0 0 #e3edf7;"><svg style="position:absolute;left:9px;top:10px" width="15" height="13" viewBox="0 0 15 13"><rect x="0.5" y="0.5" width="14" height="12" fill="#f4f4f4" stroke="#8a8f98"/><rect x="0" y="0" width="15" height="1" fill="#6f7782"/><rect x="1.5" y="2" width="5.5" height="8.5" fill="#2f8f86"/><rect x="1.5" y="2" width="5.5" height="3" fill="#5573a8" opacity="0.7"/><rect x="11.6" y="2" width="1.2" height="3.5" fill="#1a43a8"/><rect x="8.5" y="9" width="3" height="1.5" fill="#c9c9c9"/></svg><span style="position:absolute;left:29px;top:11px;font:12px 'Liberation Sans',sans-serif;color:#434e66;white-space:pre;letter-spacing:-0.1px">Vehicle Dynamics</span><div style="position:absolute;left:1003px;top:9px;width:29px;height:15px;border:1px solid #8e9dbd;border-radius:3px;background:linear-gradient(#cddbea 0,#c6d5e6 48%,#bccde0 52%,#cfdcec 100%);box-shadow:inset 0 0 0 1px rgba(255,255,255,.45)"><svg style="position:absolute;left:9px;top:3px" width="12" height="11" viewBox="0 0 12 11"><path d="M0.5 0.7 L3.9 0.7 L5.5 2.8 L7.1 0.7 L10.5 0.7 L7.4 4.9 L10.5 9.3 L7.1 9.3 L5.5 7.1 L3.9 9.3 L0.5 9.3 L3.6 4.9 Z" fill="#f8f8f8" stroke="#454b66" stroke-width="1" stroke-linejoin="round"/></svg></div><div style="position:absolute;left:970px;top:9px;width:29px;height:15px;border:1px solid #8e9dbd;border-radius:3px;background:linear-gradient(#cddbea 0,#c6d5e6 48%,#bccde0 52%,#cfdcec 100%);box-shadow:inset 0 0 0 1px rgba(255,255,255,.45)"><svg style="position:absolute;left:9px;top:3px" width="12" height="11" viewBox="0 0 12 11"><rect x="0.5" y="0.5" width="10" height="9" rx="1" fill="#f6f6f6" stroke="#454b66"/><rect x="3.5" y="3.5" width="4" height="2" fill="#a9bbd3" stroke="#454b66"/></svg></div><div style="position:absolute;left:937px;top:9px;width:29px;height:15px;border:1px solid #8e9dbd;border-radius:3px;background:linear-gradient(#cddbea 0,#c6d5e6 48%,#bccde0 52%,#cfdcec 100%);box-shadow:inset 0 0 0 1px rgba(255,255,255,.45)"><div style="position:absolute;left:9px;top:7px;width:9px;height:3px;background:#f6f6f6;border:1px solid #454b66;border-radius:1px"></div></div><div style="position:absolute;left:7px;top:29px;width:1029px;height:200px;box-sizing:border-box;border:1px solid;border-color:#7f8893 #fff #fff #7f8893;"><div style="position:absolute;left:0;top:0;right:0;bottom:0;border:1px solid;border-color:#696969 #e3e3e3 #e3e3e3 #696969;overflow:hidden"><div style="position:absolute;left:0px;top:0px;width:1030px;height:200px;background:#fff"></div><svg style="position:absolute;left:1px;top:1px" width="203" height="194" viewBox="0 0 203 194"><defs><linearGradient id="ring" x1="0" y1="0" x2="1" y2="1"><stop offset="0" stop-color="#7c7c7c"/><stop offset="0.25" stop-color="#8e8e8e"/><stop offset="0.5" stop-color="#b4b4b4"/><stop offset="0.75" stop-color="#e6e6e6"/><stop offset="0.9" stop-color="#f4f4f4"/><stop offset="1" stop-color="#b8b8b8"/></linearGradient><radialGradient id="face" cx="50%" cy="50%" r="50%"><stop offset="0" stop-color="#363636"/><stop offset="0.90" stop-color="#363636"/><stop offset="0.955" stop-color="#2c2c2c"/><stop offset="1" stop-color="#5a5a5a"/></radialGradient><radialGradient id="screw" cx="56%" cy="30%" r="70%"><stop offset="0" stop-color="#ffffff"/><stop offset="0.35" stop-color="#c4c4c4"/><stop offset="0.75" stop-color="#7c7c7c"/><stop offset="1" stop-color="#484848"/></radialGradient><radialGradient id="hub" cx="45%" cy="40%" r="60%"><stop offset="0" stop-color="#d2d2d2"/><stop offset="0.75" stop-color="#c4c4c4"/><stop offset="1" stop-color="#9a9a9a"/></radialGradient></defs><rect x="0" y="0" width="203" height="194" fill="#363636"/><circle cx="18" cy="12.5" r="5.2" fill="url(#screw)"/><path d="M13.4 17.1 L18.5 12.5" stroke="#a8a8a8" stroke-width="1.8"/><circle cx="186.5" cy="12.5" r="5.2" fill="url(#screw)"/><path d="M181.9 17.1 L187.0 12.5" stroke="#a8a8a8" stroke-width="1.8"/><circle cx="18" cy="180.5" r="5.2" fill="url(#screw)"/><path d="M13.4 185.1 L18.5 180.5" stroke="#a8a8a8" stroke-width="1.8"/><circle cx="186.5" cy="180.5" r="5.2" fill="url(#screw)"/><path d="M181.9 185.1 L187.0 180.5" stroke="#a8a8a8" stroke-width="1.8"/><circle cx="101.5" cy="97" r="91.5" fill="url(#face)"/><circle cx="101.5" cy="97" r="92.6" fill="none" stroke="url(#ring)" stroke-width="3.4"/><circle cx="101.5" cy="97" r="94.6" fill="none" stroke="#666" stroke-width="0.8"/><path d="M129.8 19.4A82.6 82.6 0 1 1 25.2 128.7" stroke="#00ff00" stroke-width="7.6" fill="none"/><path d="M25.2 128.7A82.6 82.6 0 0 1 41.4 40.3" stroke="#ffff00" stroke-width="7.6" fill="none"/><path d="M41.4 40.3A82.6 82.6 0 0 1 73.3 19.4" stroke="#ff0000" stroke-width="7.6" fill="none"/><path d="M129.0 21.4L131.1 15.6M160.1 41.8L164.5 37.6M178.6 73.9L184.5 72.2M180.8 111.0L186.8 112.0M166.1 145.1L171.0 148.7M137.6 168.9L140.4 174.4M101.5 177.5L101.5 183.6M65.4 168.9L62.6 174.4M36.9 145.1L32.0 148.7M22.2 111.0L16.2 112.0M24.4 73.9L18.5 72.2M42.9 41.8L38.5 37.6M74.0 21.4L71.9 15.6" stroke="#111" stroke-width="1" fill="none"/><path d="M146.6 28.5L148.0 26.3M172.5 56.0L174.8 54.7M183.4 92.2L186.0 92.1M176.8 129.5L179.2 130.5M154.2 159.8L155.9 161.8M120.4 176.8L121.0 179.3M82.6 176.8L82.0 179.3M48.8 159.8L47.1 161.8M26.2 129.5L23.8 130.5M19.6 92.2L17.0 92.1M30.5 56.0L28.2 54.7M56.4 28.5L55.0 26.3" stroke="#111" stroke-width="1" fill="none"/><text x="126.0" y="36.4" style="font-family:'Liberation Sans',sans-serif;fill:#dcdcdc;text-anchor:middle;font-size:13.4px;">0</text><text x="149.3" y="55.8" style="font-family:'Liberation Sans',sans-serif;fill:#dcdcdc;text-anchor:middle;font-size:13.4px;">10</text><text x="166.0" y="80.4" style="font-family:'Liberation Sans',sans-serif;fill:#dcdcdc;text-anchor:middle;font-size:13.4px;">20</text><text x="168.0" y="115.2" style="font-family:'Liberation Sans',sans-serif;fill:#dcdcdc;text-anchor:middle;font-size:13.4px;">30</text><text x="154.0" y="141.8" style="font-family:'Liberation Sans',sans-serif;fill:#dcdcdc;text-anchor:middle;font-size:13.4px;">40</text><text x="127.7" y="164.1" style="font-family:'Liberation Sans',sans-serif;fill:#dcdcdc;text-anchor:middle;font-size:13.4px;">50</text><text x="101.2" y="172.1" style="font-family:'Liberation Sans',sans-serif;fill:#dcdcdc;text-anchor:middle;font-size:13.4px;">60</text><text x="74.4" y="164.1" style="font-family:'Liberation Sans',sans-serif;fill:#dcdcdc;text-anchor:middle;font-size:13.4px;">70</text><text x="48.0" y="141.8" style="font-family:'Liberation Sans',sans-serif;fill:#dcdcdc;text-anchor:middle;font-size:13.4px;">80</text><text x="34.4" y="115.2" style="font-family:'Liberation Sans',sans-serif;fill:#dcdcdc;text-anchor:middle;font-size:13.4px;">90</text><text x="39.6" y="80.4" style="font-family:'Liberation Sans',sans-serif;fill:#dcdcdc;text-anchor:middle;font-size:13.4px;">100</text><text x="56.6" y="55.8" style="font-family:'Liberation Sans',sans-serif;fill:#dcdcdc;text-anchor:middle;font-size:13.4px;">110</text><text x="75.5" y="36.4" style="font-family:'Liberation Sans',sans-serif;fill:#dcdcdc;text-anchor:middle;font-size:13.4px;">120</text><text x="101.5" y="68.8" style="font-family:'Liberation Sans',sans-serif;fill:#dcdcdc;text-anchor:middle;font-size:13.5px;">Speed mph</text><path d="M101.5 97L131.1 15.2" stroke="#b8b8b8" stroke-width="2"/><circle cx="101.5" cy="97" r="9.5" fill="url(#hub)"/></svg><svg style="position:absolute;left:206px;top:1px" width="203" height="194" viewBox="0 0 203 194"><rect x="0" y="0" width="203" height="194" fill="#fff"/><rect x="0" y="0" width="202" height="193" fill="#808080"/><rect x="2" y="2" width="200" height="191" fill="#0000ff"/><rect x="2" y="98" width="200" height="95" fill="#800000"/><rect x="2" y="96" width="56" height="3" fill="#00ff00"/><rect x="147.2" y="96" width="54.8" height="3" fill="#00ff00"/><rect x="58" y="97" width="89.2" height="1" fill="#fff"/><path d="M87.1 38.5H117.1" stroke="#fff" stroke-width="1" fill="none" shape-rendering="crispEdges"/><path d="M87.1 78.5H117.1" stroke="#fff" stroke-width="1" fill="none" shape-rendering="crispEdges"/><path d="M87.1 116.5H117.1" stroke="#fff" stroke-width="1" fill="none" shape-rendering="crispEdges"/><path d="M87.1 156.5H117.1" stroke="#fff" stroke-width="1" fill="none" shape-rendering="crispEdges"/><path d="M72.2 58.5H132.0" stroke="#fff" stroke-width="1" fill="none" shape-rendering="crispEdges"/><text x="64.9" y="61.5" style="font-family:'Liberation Sans',sans-serif;font-size:8.5px;fill:#fff;text-anchor:middle;letter-spacing:-0.4px">10</text><text x="141.1" y="61.5" style="font-family:'Liberation Sans',sans-serif;font-size:8.5px;fill:#fff;text-anchor:middle;letter-spacing:-0.4px">10</text><path d="M72.2 136.5H132.0" stroke="#fff" stroke-width="1" fill="none" shape-rendering="crispEdges"/><text x="64.9" y="139.5" style="font-family:'Liberation Sans',sans-serif;font-size:8.5px;fill:#fff;text-anchor:middle;letter-spacing:-0.4px">10</text><text x="141.1" y="139.5" style="font-family:'Liberation Sans',sans-serif;font-size:8.5px;fill:#fff;text-anchor:middle;letter-spacing:-0.4px">10</text><path d="M42.4 46.7L38.6 43.5" stroke="#fff" stroke-width="2.5"/><path d="M52.1 37.0L48.9 33.2" stroke="#fff" stroke-width="2.5"/><path d="M65.4 32.9L60.3 24.1" stroke="#fff" stroke-width="2.5"/><path d="M75.6 23.4L73.9 18.7" stroke="#fff" stroke-width="2.5"/><path d="M88.8 19.9L87.9 15.0" stroke="#fff" stroke-width="2.5"/><path d="M116.0 19.9L116.9 15.0" stroke="#fff" stroke-width="2.5"/><path d="M129.2 23.4L130.9 18.7" stroke="#fff" stroke-width="2.5"/><path d="M139.4 32.9L144.5 24.1" stroke="#fff" stroke-width="2.5"/><path d="M152.7 37.0L155.9 33.2" stroke="#fff" stroke-width="2.5"/><path d="M162.4 46.7L166.2 43.5" stroke="#fff" stroke-width="2.5"/><path d="M97.59999999999998 12.900000000000006 H107.19999999999997 L102.39999999999998 22Z M102.39999999999998 22 L108.19999999999997 31 H96.59999999999998Z" fill="#fff"/><text x="7.7000000000000455" y="88.80000000000001" style="font-family:'Liberation Sans',sans-serif;font-size:6.5px;fill:#fff;text-anchor:middle;letter-spacing:-0.3px">33</text><text x="102.39999999999998" y="88.80000000000001" style="font-family:'Liberation Sans',sans-serif;font-size:6.5px;fill:#fff;text-anchor:middle;letter-spacing:-0.3px">0</text><text x="197.5" y="88.80000000000001" style="font-family:'Liberation Sans',sans-serif;font-size:6.5px;fill:#fff;text-anchor:middle;letter-spacing:-0.3px">3</text><path d="M7.5 91V96M39.5 91V96M71.5 91V96M133.5 91V96M165.5 91V96M197.5 91V96M23.5 95V97M55.5 95V97M87.5 95V97M117.5 95V97M149.5 95V97M181.5 95V97" stroke="#fff" stroke-width="1" fill="none" shape-rendering="crispEdges"/><path d="M93.09999999999998 90 H96.89999999999998 L102.39999999999998 96 L107.89999999999998 90 H111.79999999999998 V97.6 H93.09999999999998Z" fill="#ff8000"/><path d="M99.39999999999998 97.19999999999999 L102.39999999999998 94.19999999999999 L105.39999999999998 97.19999999999999 L102.39999999999998 100.19999999999999Z" fill="#00ee00"/><rect x="53" y="96" width="5" height="13" fill="#00ff00"/><rect x="147.2" y="96" width="5" height="13" fill="#00ff00"/></svg><svg style="position:absolute;left:411px;top:1px" width="203" height="194" viewBox="0 0 203 194"><rect x="0" y="0" width="203" height="194" fill="#363636"/><circle cx="18" cy="12.5" r="5.2" fill="url(#screw)"/><path d="M13.4 17.1 L18.5 12.5" stroke="#a8a8a8" stroke-width="1.8"/><circle cx="186.5" cy="12.5" r="5.2" fill="url(#screw)"/><path d="M181.9 17.1 L187.0 12.5" stroke="#a8a8a8" stroke-width="1.8"/><circle cx="18" cy="180.5" r="5.2" fill="url(#screw)"/><path d="M13.4 185.1 L18.5 180.5" stroke="#a8a8a8" stroke-width="1.8"/><circle cx="186.5" cy="180.5" r="5.2" fill="url(#screw)"/><path d="M181.9 185.1 L187.0 180.5" stroke="#a8a8a8" stroke-width="1.8"/><circle cx="101.5" cy="97" r="91.5" fill="url(#face)"/><circle cx="101.5" cy="97" r="92.6" fill="none" stroke="url(#ring)" stroke-width="3.4"/><circle cx="101.5" cy="97" r="94.6" fill="none" stroke="#666" stroke-width="0.8"/><path d="M101.5 17.5L101.5 10.5M148.2 32.7L152.3 27.0M177.1 72.4L183.8 70.3M177.1 121.6L183.8 123.7M148.2 161.3L152.3 167.0M101.5 176.5L101.5 183.5M54.8 161.3L50.7 167.0M25.9 121.6L19.2 123.7M25.9 72.4L19.2 70.3M54.8 32.7L50.7 27.0" stroke="#e8e8e8" stroke-width="1.2" fill="none"/><path d="M127.0 18.5L128.2 14.7M168.2 48.5L171.5 46.2M184.0 97.0L188.0 97.0M168.2 145.5L171.5 147.8M127.0 175.5L128.2 179.3M76.0 175.5L74.8 179.3M34.8 145.5L31.5 147.8M19.0 97.0L15.0 97.0M34.8 48.5L31.5 46.2M76.0 18.5L74.8 14.7" stroke="#e8e8e8" stroke-width="1.2" fill="none"/><text x="101.5" y="31.8" style="font-family:'Liberation Sans',sans-serif;fill:#dcdcdc;text-anchor:middle;font-size:13.4px;">0</text><text x="142.9" y="44.4" style="font-family:'Liberation Sans',sans-serif;fill:#dcdcdc;text-anchor:middle;font-size:13.4px;">1</text><text x="170.2" y="79.1" style="font-family:'Liberation Sans',sans-serif;fill:#dcdcdc;text-anchor:middle;font-size:13.4px;">2</text><text x="170.2" y="123.7" style="font-family:'Liberation Sans',sans-serif;fill:#dcdcdc;text-anchor:middle;font-size:13.4px;">3</text><text x="142.9" y="158.5" style="font-family:'Liberation Sans',sans-serif;fill:#dcdcdc;text-anchor:middle;font-size:13.4px;">4</text><text x="101.5" y="171.0" style="font-family:'Liberation Sans',sans-serif;fill:#dcdcdc;text-anchor:middle;font-size:13.4px;">5</text><text x="60.1" y="158.5" style="font-family:'Liberation Sans',sans-serif;fill:#dcdcdc;text-anchor:middle;font-size:13.4px;">6</text><text x="32.8" y="123.7" style="font-family:'Liberation Sans',sans-serif;fill:#dcdcdc;text-anchor:middle;font-size:13.4px;">7</text><text x="32.8" y="79.1" style="font-family:'Liberation Sans',sans-serif;fill:#dcdcdc;text-anchor:middle;font-size:13.4px;">8</text><text x="60.1" y="44.4" style="font-family:'Liberation Sans',sans-serif;fill:#dcdcdc;text-anchor:middle;font-size:13.4px;">9</text><text x="101.5" y="70.5" style="font-family:'Liberation Sans',sans-serif;fill:#dcdcdc;text-anchor:middle;font-size:13.4px;">ALT 1000ft</text><text x="66.7" y="101.8" style="font-family:'Liberation Sans',sans-serif;fill:#dcdcdc;text-anchor:middle;font-size:13px;fill:#58ec58">0</text><path d="M101.5 97L153.3 41.4" stroke="#bcbcbc" stroke-width="2"/><path d="M101.5 97L104.9 55.1" stroke="#b8b8b8" stroke-width="2.2"/><circle cx="101.5" cy="97" r="6.9" fill="#a8a8a8"/></svg><svg style="position:absolute;left:616px;top:1px" width="203" height="194" viewBox="0 0 203 194"><rect x="0" y="0" width="203" height="194" fill="#363636"/><circle cx="18" cy="12.5" r="5.2" fill="url(#screw)"/><path d="M13.4 17.1 L18.5 12.5" stroke="#a8a8a8" stroke-width="1.8"/><circle cx="186.5" cy="12.5" r="5.2" fill="url(#screw)"/><path d="M181.9 17.1 L187.0 12.5" stroke="#a8a8a8" stroke-width="1.8"/><circle cx="18" cy="180.5" r="5.2" fill="url(#screw)"/><path d="M13.4 185.1 L18.5 180.5" stroke="#a8a8a8" stroke-width="1.8"/><circle cx="186.5" cy="180.5" r="5.2" fill="url(#screw)"/><path d="M181.9 185.1 L187.0 180.5" stroke="#a8a8a8" stroke-width="1.8"/><circle cx="101.5" cy="97" r="91.5" fill="url(#face)"/><circle cx="101.5" cy="97" r="92.6" fill="none" stroke="url(#ring)" stroke-width="3.4"/><circle cx="101.5" cy="97" r="94.6" fill="none" stroke="#666" stroke-width="0.8"/><path d="M101.5 17.5L101.5 11.0M141.2 28.2L144.5 22.5M170.3 57.2L176.0 54.0M181.0 97.0L187.5 97.0M170.3 136.8L176.0 140.0M141.2 165.8L144.5 171.5M101.5 176.5L101.5 183.0M61.7 165.8L58.5 171.5M32.7 136.8L27.0 140.0M22.0 97.0L15.5 97.0M32.7 57.2L27.0 54.0M61.7 28.2L58.5 22.5" stroke="#e8e8e8" stroke-width="1.1" fill="none"/><path d="M115.5 17.4L116.2 13.7M129.1 21.1L130.4 17.5M153.4 35.1L155.9 32.2M163.4 45.1L166.3 42.6M177.4 69.4L181.0 68.1M181.1 83.0L184.8 82.3M181.1 111.0L184.8 111.7M177.4 124.6L181.0 125.9M163.4 148.9L166.3 151.4M153.4 158.9L155.9 161.8M129.1 172.9L130.4 176.5M115.5 176.6L116.2 180.3M87.5 176.6L86.8 180.3M73.9 172.9L72.6 176.5M49.6 158.9L47.1 161.8M39.6 148.9L36.7 151.4M25.6 124.6L22.0 125.9M21.9 111.0L18.2 111.7M21.9 83.0L18.2 82.3M25.6 69.4L22.0 68.1M39.6 45.1L36.7 42.6M49.6 35.1L47.1 32.2M73.9 21.1L72.6 17.5M87.5 17.4L86.8 13.7" stroke="#e8e8e8" stroke-width="1.1" fill="none"/><text x="101.5" y="27.5" transform="rotate(0 101.5 27.5)" dy="4.6" style="font-family:'Liberation Sans',sans-serif;fill:#dcdcdc;text-anchor:middle;font-size:13px">N</text><text x="136.2" y="36.8" transform="rotate(30 136.2 36.8)" dy="4.6" style="font-family:'Liberation Sans',sans-serif;fill:#dcdcdc;text-anchor:middle;font-size:13px">3</text><text x="161.7" y="62.2" transform="rotate(60 161.7 62.2)" dy="4.6" style="font-family:'Liberation Sans',sans-serif;fill:#dcdcdc;text-anchor:middle;font-size:13px">6</text><text x="171.0" y="97.0" transform="rotate(90 171.0 97.0)" dy="4.6" style="font-family:'Liberation Sans',sans-serif;fill:#dcdcdc;text-anchor:middle;font-size:13px">E</text><text x="161.7" y="131.8" transform="rotate(120 161.7 131.8)" dy="4.6" style="font-family:'Liberation Sans',sans-serif;fill:#dcdcdc;text-anchor:middle;font-size:13px">12</text><text x="136.2" y="157.2" transform="rotate(150 136.2 157.2)" dy="4.6" style="font-family:'Liberation Sans',sans-serif;fill:#dcdcdc;text-anchor:middle;font-size:13px">15</text><text x="101.5" y="166.5" transform="rotate(180 101.5 166.5)" dy="4.6" style="font-family:'Liberation Sans',sans-serif;fill:#dcdcdc;text-anchor:middle;font-size:13px">S</text><text x="66.8" y="157.2" transform="rotate(210 66.8 157.2)" dy="4.6" style="font-family:'Liberation Sans',sans-serif;fill:#dcdcdc;text-anchor:middle;font-size:13px">21</text><text x="41.3" y="131.8" transform="rotate(240 41.3 131.8)" dy="4.6" style="font-family:'Liberation Sans',sans-serif;fill:#dcdcdc;text-anchor:middle;font-size:13px">24</text><text x="32.0" y="97.0" transform="rotate(270 32.0 97.0)" dy="4.6" style="font-family:'Liberation Sans',sans-serif;fill:#dcdcdc;text-anchor:middle;font-size:13px">W</text><text x="41.3" y="62.2" transform="rotate(300 41.3 62.2)" dy="4.6" style="font-family:'Liberation Sans',sans-serif;fill:#dcdcdc;text-anchor:middle;font-size:13px">30</text><text x="66.7" y="36.8" transform="rotate(330 66.7 36.8)" dy="4.6" style="font-family:'Liberation Sans',sans-serif;fill:#dcdcdc;text-anchor:middle;font-size:13px">33</text><path d="M-4 -4.2 L4 -4.2 L0 4.2Z" transform="translate(101.5 13.5) rotate(0)" fill="#ffa020"/><path d="M-4 -4.2 L4 -4.2 L0 4.2Z" transform="translate(185.0 97.0) rotate(90)" fill="#ffa020"/><path d="M-4 -4.2 L4 -4.2 L0 4.2Z" transform="translate(101.5 180.5) rotate(180)" fill="#ffa020"/><path d="M-4 -4.2 L4 -4.2 L0 4.2Z" transform="translate(18.0 97.0) rotate(270)" fill="#ffa020"/><text x="101.5" y="58.9" style="font-family:'Liberation Sans',sans-serif;fill:#dcdcdc;text-anchor:middle;font-size:13.5px;">Heading</text><path transform="translate(101.5 97)" d="M0 -26 C2.2 -26 3.4 -21 3.6 -16 L3.8 -6 L25.5 9.5 L25.5 11.5 L4 7.5 L3.6 18 L9.5 22.5 L9.5 24 L2.5 23 L1.5 24.5 L-1.5 24.5 L-2.5 23 L-9.5 24 L-9.5 22.5 L-3.6 18 L-4 7.5 L-25.5 11.5 L-25.5 9.5 L-3.8 -6 L-3.6 -16 C-3.4 -21 -2.2 -26 0 -26Z" fill="#c80000"/></svg><svg style="position:absolute;left:821px;top:1px" width="203" height="194" viewBox="0 0 203 194"><rect x="0" y="0" width="203" height="194" fill="#363636"/><circle cx="18" cy="12.5" r="5.2" fill="url(#screw)"/><path d="M13.4 17.1 L18.5 12.5" stroke="#a8a8a8" stroke-width="1.8"/><circle cx="186.5" cy="12.5" r="5.2" fill="url(#screw)"/><path d="M181.9 17.1 L187.0 12.5" stroke="#a8a8a8" stroke-width="1.8"/><circle cx="18" cy="180.5" r="5.2" fill="url(#screw)"/><path d="M13.4 185.1 L18.5 180.5" stroke="#a8a8a8" stroke-width="1.8"/><circle cx="186.5" cy="180.5" r="5.2" fill="url(#screw)"/><path d="M181.9 185.1 L187.0 180.5" stroke="#a8a8a8" stroke-width="1.8"/><circle cx="101.5" cy="97" r="91.5" fill="url(#face)"/><circle cx="101.5" cy="97" r="92.6" fill="none" stroke="url(#ring)" stroke-width="3.4"/><circle cx="101.5" cy="97" r="94.6" fill="none" stroke="#666" stroke-width="0.8"/><path d="M174.5 127.1L182.4 130.3M138.8 166.6L142.8 174.1M86.2 174.5L84.5 182.8M40.5 147.1L33.9 152.5M22.5 97.0L14.0 97.0M40.5 46.9L33.9 41.5M86.2 19.5L84.5 11.2M138.8 27.4L142.8 19.9M174.5 66.9L182.4 63.7" stroke="#e8e8e8" stroke-width="1.2" fill="none"/><path d="M34.3 144.9L30.2 147.8M31.2 140.1L26.9 142.7M28.4 135.2L23.9 137.5M25.9 130.1L21.3 132.1M23.8 124.8L19.1 126.5M22.1 119.4L17.3 120.8M20.7 113.9L15.9 114.9M19.8 108.3L14.8 109.0M19.2 102.7L14.2 103.0M19.2 91.3L14.2 91.0M19.8 85.7L14.8 85.0M20.7 80.1L15.9 79.1M22.1 74.6L17.3 73.2M23.8 69.2L19.1 67.5M25.9 63.9L21.3 61.9M28.4 58.8L23.9 56.5M31.2 53.9L26.9 51.3M34.3 49.1L30.2 46.2" stroke="#e8e8e8" stroke-width="1.2" fill="none"/><text x="29.6" y="102.2" style="font-family:'Liberation Sans',sans-serif;fill:#dcdcdc;text-anchor:middle;font-size:13.4px;">0</text><text x="47.3" y="58.8" style="font-family:'Liberation Sans',sans-serif;fill:#dcdcdc;text-anchor:middle;font-size:13.4px;">5</text><text x="88.0" y="33.2" style="font-family:'Liberation Sans',sans-serif;fill:#dcdcdc;text-anchor:middle;font-size:13.4px;">10</text><text x="132.0" y="41.5" style="font-family:'Liberation Sans',sans-serif;fill:#dcdcdc;text-anchor:middle;font-size:13.4px;">15</text><text x="164.7" y="76.2" style="font-family:'Liberation Sans',sans-serif;fill:#dcdcdc;text-anchor:middle;font-size:13.4px;">20</text><text x="163.0" y="127.8" style="font-family:'Liberation Sans',sans-serif;fill:#dcdcdc;text-anchor:middle;font-size:13.4px;">-20</text><text x="129.7" y="162.3" style="font-family:'Liberation Sans',sans-serif;fill:#dcdcdc;text-anchor:middle;font-size:13.4px;">-15</text><text x="88.0" y="170.6" style="font-family:'Liberation Sans',sans-serif;fill:#dcdcdc;text-anchor:middle;font-size:13.4px;">-10</text><text x="49.6" y="145.6" style="font-family:'Liberation Sans',sans-serif;fill:#dcdcdc;text-anchor:middle;font-size:13.4px;">-5</text><text x="102.0" y="63.8" style="font-family:'Liberation Sans',sans-serif;fill:#dcdcdc;text-anchor:middle;font-size:13.4px;">Vertical Speed</text><text x="102.0" y="77.2" style="font-family:'Liberation Sans',sans-serif;fill:#dcdcdc;text-anchor:middle;font-size:13.4px;">1000ft/min</text><path d="M101.5 97L14.5 97" stroke="#b8b8b8" stroke-width="2"/><circle cx="101.5" cy="97" r="9" fill="url(#hub)"/></svg></div></div></div><div style="position:absolute;left:1403px;top:68px;width:515px;height:238px;background:#444;border-radius:6px 6px 0 0"></div><div style="position:absolute;left:1404px;top:69px;width:513px;height:236px;background:linear-gradient(#99b4d1 0px,#a9c3de 14px,#b9d1ea 30px,#b9d1ea 100%);border-radius:5px 5px 0 0;box-shadow:inset 0 0 0 1px #e8f1fb;"><svg style="position:absolute;left:9px;top:10px" width="15" height="13" viewBox="0 0 15 13"><rect x="0.5" y="0.5" width="14" height="12" fill="#f4f4f4" stroke="#8a8f98"/><rect x="0" y="0" width="15" height="1" fill="#6f7782"/><rect x="1.5" y="2" width="5.5" height="8.5" fill="#2f8f86"/><rect x="1.5" y="2" width="5.5" height="3" fill="#5573a8" opacity="0.7"/><rect x="11.6" y="2" width="1.2" height="3.5" fill="#1a43a8"/><rect x="8.5" y="9" width="3" height="1.5" fill="#c9c9c9"/></svg><span style="position:absolute;left:29px;top:11px;font:12px 'Liberation Sans',sans-serif;color:#000;white-space:pre;letter-spacing:-0.1px">Position Details</span><div style="position:absolute;left:473px;top:9px;width:29px;height:15px;border:1px solid #5b1a1f;border-radius:3px;background:linear-gradient(#e9a99b 0,#dc8a78 48%,#c4472d 52%,#d2694f 100%);box-shadow:inset 0 0 0 1px rgba(255,255,255,.45)"><svg style="position:absolute;left:9px;top:3px" width="12" height="11" viewBox="0 0 12 11"><path d="M0.5 0.7 L3.9 0.7 L5.5 2.8 L7.1 0.7 L10.5 0.7 L7.4 4.9 L10.5 9.3 L7.1 9.3 L5.5 7.1 L3.9 9.3 L0.5 9.3 L3.6 4.9 Z" fill="#f8f8f8" stroke="#454b66" stroke-width="1" stroke-linejoin="round"/></svg></div><div style="position:absolute;left:440px;top:9px;width:29px;height:15px;border:1px solid #5a6c8c;border-radius:3px;background:linear-gradient(#c5d8ec 0,#b9cfe6 48%,#9cb8d6 52%,#b4cbe4 100%);box-shadow:inset 0 0 0 1px rgba(255,255,255,.45)"><svg style="position:absolute;left:9px;top:3px" width="12" height="11" viewBox="0 0 12 11"><rect x="0.5" y="0.5" width="10" height="9" rx="1" fill="#f6f6f6" stroke="#454b66"/><rect x="3.5" y="3.5" width="4" height="2" fill="#a9bbd3" stroke="#454b66"/></svg></div><div style="position:absolute;left:407px;top:9px;width:29px;height:15px;border:1px solid #5a6c8c;border-radius:3px;background:linear-gradient(#c5d8ec 0,#b9cfe6 48%,#9cb8d6 52%,#b4cbe4 100%);box-shadow:inset 0 0 0 1px rgba(255,255,255,.45)"><div style="position:absolute;left:9px;top:7px;width:9px;height:3px;background:#f6f6f6;border:1px solid #454b66;border-radius:1px"></div></div><div style="position:absolute;left:7px;top:29px;width:499px;height:200px;box-sizing:border-box;border:1px solid;border-color:#7f8893 #fff #fff #7f8893;"><div style="position:absolute;left:0;top:0;right:0;bottom:0;border:1px solid;border-color:#696969 #e3e3e3 #e3e3e3 #696969;overflow:hidden"><div style="position:absolute;left:0px;top:0px;width:500px;height:200px;background:#fff"></div><div style="position:absolute;left:4px;top:9px;width:238px;height:71px;background:linear-gradient(#ffffff 0,#f3f3fe 30%,#dcdcfb 100%)"></div><div style="position:absolute;left:4px;top:9px;width:1px;height:71px;background:#8e8e8e"></div><div style="position:absolute;left:5px;top:10px;width:1px;height:70px;background:#fdfdfd"></div><div style="position:absolute;left:4px;top:80px;width:239px;height:1px;background:#777"></div><div style="position:absolute;left:242px;top:9px;width:1px;height:71px;background:#777"></div><div style="position:absolute;left:4px;top:9px;width:6px;height:1px;background:#8e8e8e"></div><div style="position:absolute;left:70px;top:9px;width:172px;height:1px;background:#8e8e8e"></div><span style="position:absolute;left:13px;top:2px;white-space:pre;font:11.5px 'Liberation Sans',sans-serif;transform:scaleX(1.365);transform-origin:0 0;line-height:14px;color:#111">Position</span><div style="position:absolute;left:252px;top:9px;width:238px;height:71px;background:linear-gradient(#ffffff 0,#f3f3fe 30%,#dcdcfb 100%)"></div><div style="position:absolute;left:252px;top:9px;width:1px;height:71px;background:#8e8e8e"></div><div style="position:absolute;left:253px;top:10px;width:1px;height:70px;background:#fdfdfd"></div><div style="position:absolute;left:252px;top:80px;width:239px;height:1px;background:#777"></div><div style="position:absolute;left:490px;top:9px;width:1px;height:71px;background:#777"></div><div style="position:absolute;left:252px;top:9px;width:6px;height:1px;background:#8e8e8e"></div><div style="position:absolute;left:315px;top:9px;width:175px;height:1px;background:#8e8e8e"></div><span style="position:absolute;left:261px;top:2px;white-space:pre;font:11.5px 'Liberation Sans',sans-serif;transform:scaleX(1.365);transform-origin:0 0;line-height:14px;color:#111">Attitude</span><div style="position:absolute;left:4px;top:100px;width:238px;height:90px;background:linear-gradient(#ffffff 0,#f3f3fe 30%,#dcdcfb 100%)"></div><div style="position:absolute;left:4px;top:100px;width:1px;height:90px;background:#8e8e8e"></div><div style="position:absolute;left:5px;top:101px;width:1px;height:89px;background:#fdfdfd"></div><div style="position:absolute;left:4px;top:190px;width:239px;height:1px;background:#777"></div><div style="position:absolute;left:242px;top:100px;width:1px;height:90px;background:#777"></div><div style="position:absolute;left:4px;top:100px;width:6px;height:1px;background:#8e8e8e"></div><div style="position:absolute;left:128px;top:100px;width:114px;height:1px;background:#8e8e8e"></div><span style="position:absolute;left:13px;top:93px;white-space:pre;font:11.5px 'Liberation Sans',sans-serif;transform:scaleX(1.365);transform-origin:0 0;line-height:14px;color:#111">Position (ECEF)</span><div style="position:absolute;left:252px;top:100px;width:238px;height:90px;background:linear-gradient(#ffffff 0,#f3f3fe 30%,#dcdcfb 100%)"></div><div style="position:absolute;left:252px;top:100px;width:1px;height:90px;background:#8e8e8e"></div><div style="position:absolute;left:253px;top:101px;width:1px;height:89px;background:#fdfdfd"></div><div style="position:absolute;left:252px;top:190px;width:239px;height:1px;background:#777"></div><div style="position:absolute;left:490px;top:100px;width:1px;height:90px;background:#777"></div><div style="position:absolute;left:252px;top:100px;width:6px;height:1px;background:#8e8e8e"></div><div style="position:absolute;left:375px;top:100px;width:115px;height:1px;background:#8e8e8e"></div><span style="position:absolute;left:261px;top:93px;white-space:pre;font:11.5px 'Liberation Sans',sans-serif;transform:scaleX(1.365);transform-origin:0 0;line-height:14px;color:#111">Velocity (ECEF)</span><span style="position:absolute;left:13px;top:22.0px;white-space:pre;font:11.5px 'Liberation Sans',sans-serif;transform:scaleX(1.365);transform-origin:0 0;line-height:14px;color:#111">Latitude</span><span style="position:absolute;left:93.79999999999995px;top:22.0px;white-space:pre;font:11.5px 'Liberation Sans',sans-serif;transform:scaleX(1.365);transform-origin:0 0;line-height:14px;color:#1a1aaa">N 31° 0'</span><span style="position:absolute;left:13px;top:42.19999999999999px;white-space:pre;font:11.5px 'Liberation Sans',sans-serif;transform:scaleX(1.365);transform-origin:0 0;line-height:14px;color:#111">Longitude</span><span style="position:absolute;left:93.79999999999995px;top:42.19999999999999px;white-space:pre;font:11.5px 'Liberation Sans',sans-serif;transform:scaleX(1.365);transform-origin:0 0;line-height:14px;color:#1a1aaa">E 121° 0'</span><span style="position:absolute;left:13px;top:62.400000000000006px;white-space:pre;font:11.5px 'Liberation Sans',sans-serif;transform:scaleX(1.365);transform-origin:0 0;line-height:14px;color:#111">Height</span><span style="position:absolute;left:93.79999999999995px;top:62.400000000000006px;white-space:pre;font:11.5px 'Liberation Sans',sans-serif;transform:scaleX(1.365);transform-origin:0 0;line-height:14px;color:#1a1aaa">36.44 m</span><span style="position:absolute;left:260px;top:22.0px;white-space:pre;font:11.5px 'Liberation Sans',sans-serif;transform:scaleX(1.365);transform-origin:0 0;line-height:14px;color:#111">Heading</span><span style="position:absolute;left:342px;top:22.0px;white-space:pre;font:11.5px 'Liberation Sans',sans-serif;transform:scaleX(1.365);transform-origin:0 0;line-height:14px;color:#1a1aaa">0° 0'</span><span style="position:absolute;left:260px;top:42.19999999999999px;white-space:pre;font:11.5px 'Liberation Sans',sans-serif;transform:scaleX(1.365);transform-origin:0 0;line-height:14px;color:#111">Elevation</span><span style="position:absolute;left:342px;top:42.19999999999999px;white-space:pre;font:11.5px 'Liberation Sans',sans-serif;transform:scaleX(1.365);transform-origin:0 0;line-height:14px;color:#1a1aaa">0° 0'</span><span style="position:absolute;left:260px;top:62.400000000000006px;white-space:pre;font:11.5px 'Liberation Sans',sans-serif;transform:scaleX(1.365);transform-origin:0 0;line-height:14px;color:#111">Bank</span><span style="position:absolute;left:342px;top:62.400000000000006px;white-space:pre;font:11.5px 'Liberation Sans',sans-serif;transform:scaleX(1.365);transform-origin:0 0;line-height:14px;color:#1a1aaa">0° 0'</span><span style="position:absolute;left:13px;top:112.69999999999999px;white-space:pre;font:11.5px 'Liberation Sans',sans-serif;transform:scaleX(1.365);transform-origin:0 0;line-height:14px;color:#111">X</span><span style="position:absolute;left:93.79999999999995px;top:112.69999999999999px;white-space:pre;font:11.5px 'Liberation Sans',sans-serif;transform:scaleX(1.365);transform-origin:0 0;line-height:14px;color:#1a1aaa">-2818299.88 m</span><span style="position:absolute;left:13px;top:132.79999999999998px;white-space:pre;font:11.5px 'Liberation Sans',sans-serif;transform:scaleX(1.365);transform-origin:0 0;line-height:14px;color:#111">Y</span><span style="position:absolute;left:93.79999999999995px;top:132.79999999999998px;white-space:pre;font:11.5px 'Liberation Sans',sans-serif;transform:scaleX(1.365);transform-origin:0 0;line-height:14px;color:#1a1aaa">4690438.67 m</span><span style="position:absolute;left:13px;top:152.89999999999998px;white-space:pre;font:11.5px 'Liberation Sans',sans-serif;transform:scaleX(1.365);transform-origin:0 0;line-height:14px;color:#111">Z</span><span style="position:absolute;left:93.79999999999995px;top:152.89999999999998px;white-space:pre;font:11.5px 'Liberation Sans',sans-serif;transform:scaleX(1.365);transform-origin:0 0;line-height:14px;color:#1a1aaa">3265912.28 m</span><span style="position:absolute;left:13px;top:173.0px;white-space:pre;font:11.5px 'Liberation Sans',sans-serif;transform:scaleX(1.365);transform-origin:0 0;line-height:14px;color:#111">Distance</span><span style="position:absolute;left:93.79999999999995px;top:173.0px;white-space:pre;font:11.5px 'Liberation Sans',sans-serif;transform:scaleX(1.365);transform-origin:0 0;line-height:14px;color:#1a1aaa">0.00 m</span><span style="position:absolute;left:260px;top:112.69999999999999px;white-space:pre;font:11.5px 'Liberation Sans',sans-serif;transform:scaleX(1.365);transform-origin:0 0;line-height:14px;color:#111">Vx</span><span style="position:absolute;left:342px;top:112.69999999999999px;white-space:pre;font:11.5px 'Liberation Sans',sans-serif;transform:scaleX(1.365);transform-origin:0 0;line-height:14px;color:#1a1aaa">0.00 m/s</span><span style="position:absolute;left:260px;top:132.79999999999998px;white-space:pre;font:11.5px 'Liberation Sans',sans-serif;transform:scaleX(1.365);transform-origin:0 0;line-height:14px;color:#111">Vy</span><span style="position:absolute;left:342px;top:132.79999999999998px;white-space:pre;font:11.5px 'Liberation Sans',sans-serif;transform:scaleX(1.365);transform-origin:0 0;line-height:14px;color:#1a1aaa">0.00 m/s</span><span style="position:absolute;left:260px;top:152.89999999999998px;white-space:pre;font:11.5px 'Liberation Sans',sans-serif;transform:scaleX(1.365);transform-origin:0 0;line-height:14px;color:#111">Vz</span><span style="position:absolute;left:342px;top:152.89999999999998px;white-space:pre;font:11.5px 'Liberation Sans',sans-serif;transform:scaleX(1.365);transform-origin:0 0;line-height:14px;color:#1a1aaa">0.00 m/s</span><span style="position:absolute;left:260px;top:173.0px;white-space:pre;font:11.5px 'Liberation Sans',sans-serif;transform:scaleX(1.365);transform-origin:0 0;line-height:14px;color:#111">Speed</span><span style="position:absolute;left:342px;top:173.0px;white-space:pre;font:11.5px 'Liberation Sans',sans-serif;transform:scaleX(1.365);transform-origin:0 0;line-height:14px;color:#1a1aaa">0.00 m/s</span></div></div></div><div style="position:absolute;left:358px;top:306px;width:265px;height:285px;background:#444;border-radius:6px 6px 0 0"></div><div style="position:absolute;left:359px;top:307px;width:263px;height:283px;background:linear-gradient(#bfcddb 0px,#cbd8e6 14px,#d7e4f2 30px,#d7e4f2 100%);border-radius:5px 5px 0 0;box-shadow:inset 1px 1px 0 0 #e3edf7;"><svg style="position:absolute;left:9px;top:10px" width="15" height="13" viewBox="0 0 15 13"><rect x="0.5" y="0.5" width="14" height="12" fill="#f4f4f4" stroke="#8a8f98"/><rect x="0" y="0" width="15" height="1" fill="#6f7782"/><rect x="1.5" y="2" width="5.5" height="8.5" fill="#2f8f86"/><rect x="1.5" y="2" width="5.5" height="3" fill="#5573a8" opacity="0.7"/><rect x="11.6" y="2" width="1.2" height="3.5" fill="#1a43a8"/><rect x="8.5" y="9" width="3" height="1.5" fill="#c9c9c9"/></svg><span style="position:absolute;left:29px;top:11px;font:12px 'Liberation Sans',sans-serif;color:#434e66;white-space:pre;letter-spacing:-0.1px">Date/Time</span><div style="position:absolute;left:223px;top:9px;width:29px;height:15px;border:1px solid #8e9dbd;border-radius:3px;background:linear-gradient(#cddbea 0,#c6d5e6 48%,#bccde0 52%,#cfdcec 100%);box-shadow:inset 0 0 0 1px rgba(255,255,255,.45)"><svg style="position:absolute;left:9px;top:3px" width="12" height="11" viewBox="0 0 12 11"><path d="M0.5 0.7 L3.9 0.7 L5.5 2.8 L7.1 0.7 L10.5 0.7 L7.4 4.9 L10.5 9.3 L7.1 9.3 L5.5 7.1 L3.9 9.3 L0.5 9.3 L3.6 4.9 Z" fill="#f8f8f8" stroke="#454b66" stroke-width="1" stroke-linejoin="round"/></svg></div><div style="position:absolute;left:190px;top:9px;width:29px;height:15px;border:1px solid #8e9dbd;border-radius:3px;background:linear-gradient(#cddbea 0,#c6d5e6 48%,#bccde0 52%,#cfdcec 100%);box-shadow:inset 0 0 0 1px rgba(255,255,255,.45)"><svg style="position:absolute;left:9px;top:3px" width="12" height="11" viewBox="0 0 12 11"><rect x="0.5" y="0.5" width="10" height="9" rx="1" fill="#f6f6f6" stroke="#454b66"/><rect x="3.5" y="3.5" width="4" height="2" fill="#a9bbd3" stroke="#454b66"/></svg></div><div style="position:absolute;left:157px;top:9px;width:29px;height:15px;border:1px solid #8e9dbd;border-radius:3px;background:linear-gradient(#cddbea 0,#c6d5e6 48%,#bccde0 52%,#cfdcec 100%);box-shadow:inset 0 0 0 1px rgba(255,255,255,.45)"><div style="position:absolute;left:9px;top:7px;width:9px;height:3px;background:#f6f6f6;border:1px solid #454b66;border-radius:1px"></div></div><div style="position:absolute;left:7px;top:29px;width:249px;height:247px;box-sizing:border-box;border:1px solid;border-color:#7f8893 #fff #fff #7f8893;"><div style="position:absolute;left:0;top:0;right:0;bottom:0;border:1px solid;border-color:#696969 #e3e3e3 #e3e3e3 #696969;overflow:hidden"><div style="position:absolute;left:0px;top:0px;width:300px;height:300px;background:#fff"></div><span style="position:absolute;left:6.5px;top:3.5px;white-space:pre;font:13.25px 'Liberation Sans',sans-serif;line-height:16px;color:#111">Start time (GPS)</span><span style="position:absolute;left:111px;top:3.5px;white-space:pre;font:13.25px 'Liberation Sans',sans-serif;line-height:16px;color:#111">06-Apr-2019 23:50:00</span><span style="position:absolute;left:6.5px;top:24.94999999999999px;white-space:pre;font:13.25px 'Liberation Sans',sans-serif;line-height:16px;color:#111">Current time</span><span style="position:absolute;left:111px;top:24.94999999999999px;white-space:pre;font:13.25px 'Liberation Sans',sans-serif;line-height:16px;color:#1a1aaa">06-Apr-2019 23:52:45</span><span style="position:absolute;left:6.5px;top:46.39999999999998px;white-space:pre;font:13.25px 'Liberation Sans',sans-serif;line-height:16px;color:#111">End time</span><span style="position:absolute;left:111px;top:46.39999999999998px;white-space:pre;font:13.25px 'Liberation Sans',sans-serif;line-height:16px;color:#111">15-Apr-2019 23:50:00</span><span style="position:absolute;left:6.5px;top:67.85000000000002px;white-space:pre;font:13.25px 'Liberation Sans',sans-serif;line-height:16px;color:#111">Time into run</span><span style="position:absolute;left:111px;top:67.85000000000002px;white-space:pre;font:13.25px 'Liberation Sans',sans-serif;line-height:16px;color:#1a1aaa">00:02:45</span><span style="position:absolute;left:6.5px;top:89.30000000000001px;white-space:pre;font:13.25px 'Liberation Sans',sans-serif;line-height:16px;color:#111">Duration</span><span style="position:absolute;left:111px;top:89.30000000000001px;white-space:pre;font:13.25px 'Liberation Sans',sans-serif;line-height:16px;color:#111">9 00:00:00</span><div style="position:absolute;left:7px;top:120px;width:233px;height:118px;background:linear-gradient(#ffffff 0,#f3f3fe 35%,#d6d6fb 100%)"></div><div style="position:absolute;left:7px;top:120px;width:1px;height:118px;background:#8e8e8e"></div><div style="position:absolute;left:8px;top:121px;width:1px;height:117px;background:#fdfdfd"></div><div style="position:absolute;left:7px;top:238px;width:234px;height:1px;background:#666"></div><div style="position:absolute;left:240px;top:120px;width:1px;height:118px;background:#666"></div><div style="position:absolute;left:7px;top:120px;width:4px;height:1px;background:#8e8e8e"></div><div style="position:absolute;left:89px;top:120px;width:151px;height:1px;background:#8e8e8e"></div><span style="position:absolute;left:12.600000000000023px;top:110.5px;white-space:pre;font:13.25px 'Liberation Sans',sans-serif;line-height:16px;color:#111">GPS Z count</span><span style="position:absolute;left:12.600000000000023px;top:132.10000000000002px;white-space:pre;font:13.25px 'Liberation Sans',sans-serif;line-height:16px;color:#111">GPS WN rollover</span><span style="position:absolute;left:122.80000000000001px;top:132.10000000000002px;white-space:pre;font:13.25px 'Liberation Sans',sans-serif;line-height:16px;color:#1a1aaa">1</span><span style="position:absolute;left:12.600000000000023px;top:153.55px;white-space:pre;font:13.25px 'Liberation Sans',sans-serif;line-height:16px;color:#111">GPS Week No.</span><span style="position:absolute;left:122.80000000000001px;top:153.55px;white-space:pre;font:13.25px 'Liberation Sans',sans-serif;line-height:16px;color:#1a1aaa">1023</span><span style="position:absolute;left:12.600000000000023px;top:175.0px;white-space:pre;font:13.25px 'Liberation Sans',sans-serif;line-height:16px;color:#111">Galileo WN</span><span style="position:absolute;left:122.80000000000001px;top:175.0px;white-space:pre;font:13.25px 'Liberation Sans',sans-serif;line-height:16px;color:#1a1aaa">1023</span><span style="position:absolute;left:12.600000000000023px;top:196.45000000000005px;white-space:pre;font:13.25px 'Liberation Sans',sans-serif;line-height:16px;color:#111">TOW(1.5s)</span><span style="position:absolute;left:122.80000000000001px;top:196.45000000000005px;white-space:pre;font:13.25px 'Liberation Sans',sans-serif;line-height:16px;color:#1a1aaa">402910</span><span style="position:absolute;left:12.600000000000023px;top:217.89999999999998px;white-space:pre;font:13.25px 'Liberation Sans',sans-serif;line-height:16px;color:#111">TOW(s)</span><span style="position:absolute;left:122.80000000000001px;top:217.89999999999998px;white-space:pre;font:13.25px 'Liberation Sans',sans-serif;line-height:16px;color:#1a1aaa">604365</span></div></div></div><div style="position:absolute;left:623px;top:306px;width:640px;height:285px;background:#444;border-radius:6px 6px 0 0"></div><div style="position:absolute;left:624px;top:307px;width:638px;height:283px;background:linear-gradient(#bfcddb 0px,#cbd8e6 14px,#d7e4f2 30px,#d7e4f2 100%);border-radius:5px 5px 0 0;box-shadow:inset 1px 1px 0 0 #e3edf7;"><svg style="position:absolute;left:9px;top:10px" width="15" height="13" viewBox="0 0 15 13"><rect x="0.5" y="0.5" width="14" height="12" fill="#f4f4f4" stroke="#8a8f98"/><rect x="0" y="0" width="15" height="1" fill="#6f7782"/><rect x="1.5" y="2" width="5.5" height="8.5" fill="#2f8f86"/><rect x="1.5" y="2" width="5.5" height="3" fill="#5573a8" opacity="0.7"/><rect x="11.6" y="2" width="1.2" height="3.5" fill="#1a43a8"/><rect x="8.5" y="9" width="3" height="1.5" fill="#c9c9c9"/></svg><span style="position:absolute;left:29px;top:11px;font:12px 'Liberation Sans',sans-serif;color:#434e66;white-space:pre;letter-spacing:-0.1px">Power Levels Graph</span><div style="position:absolute;left:598px;top:9px;width:29px;height:15px;border:1px solid #8e9dbd;border-radius:3px;background:linear-gradient(#cddbea 0,#c6d5e6 48%,#bccde0 52%,#cfdcec 100%);box-shadow:inset 0 0 0 1px rgba(255,255,255,.45)"><svg style="position:absolute;left:9px;top:3px" width="12" height="11" viewBox="0 0 12 11"><path d="M0.5 0.7 L3.9 0.7 L5.5 2.8 L7.1 0.7 L10.5 0.7 L7.4 4.9 L10.5 9.3 L7.1 9.3 L5.5 7.1 L3.9 9.3 L0.5 9.3 L3.6 4.9 Z" fill="#f8f8f8" stroke="#454b66" stroke-width="1" stroke-linejoin="round"/></svg></div><div style="position:absolute;left:565px;top:9px;width:29px;height:15px;border:1px solid #8e9dbd;border-radius:3px;background:linear-gradient(#cddbea 0,#c6d5e6 48%,#bccde0 52%,#cfdcec 100%);box-shadow:inset 0 0 0 1px rgba(255,255,255,.45)"><svg style="position:absolute;left:9px;top:3px" width="12" height="11" viewBox="0 0 12 11"><rect x="0.5" y="0.5" width="10" height="9" rx="1" fill="#f6f6f6" stroke="#454b66"/><rect x="3.5" y="3.5" width="4" height="2" fill="#a9bbd3" stroke="#454b66"/></svg></div><div style="position:absolute;left:532px;top:9px;width:29px;height:15px;border:1px solid #8e9dbd;border-radius:3px;background:linear-gradient(#cddbea 0,#c6d5e6 48%,#bccde0 52%,#cfdcec 100%);box-shadow:inset 0 0 0 1px rgba(255,255,255,.45)"><div style="position:absolute;left:9px;top:7px;width:9px;height:3px;background:#f6f6f6;border:1px solid #454b66;border-radius:1px"></div></div><div style="position:absolute;left:7px;top:29px;width:624px;height:247px;box-sizing:border-box;border:1px solid;border-color:#7f8893 #fff #fff #7f8893;"><div style="position:absolute;left:0;top:0;right:0;bottom:0;border:1px solid;border-color:#696969 #e3e3e3 #e3e3e3 #696969;overflow:hidden"><div style="position:absolute;left:0px;top:0px;width:640px;height:260px;background:#fff"></div><div style="position:absolute;left:0px;top:0px;width:640px;height:35px;background:#f0f0f0"></div><span style="position:absolute;left:2px;top:7.5px;white-space:pre;font:12.4px 'Liberation Sans',sans-serif;line-height:16px;color:#000">Signal type</span><div style="position:absolute;left:70px;top:5px;width:82px;height:22px;box-sizing:border-box;border:1px solid #707070;border-radius:3px;background:linear-gradient(#f2f2f2 0,#ebebeb 48%,#dddddd 52%,#cfcfcf 100%);box-shadow:inset 0 0 0 1px #fcfcfc"></div><span style="position:absolute;left:75px;top:9.0px;white-space:pre;font:12px 'Liberation Sans',sans-serif;line-height:16px;color:#000">All</span><svg style="position:absolute;left:139px;top:14.0px;" width="7" height="4" viewBox="0 0 7 4"><path d="M0 0H7L3.5 4Z" fill="#000"/></svg><div style="position:absolute;left:29px;top:35px;width:20px;height:209px;background:#f0f0ff"></div><div style="position:absolute;left:30px;top:67.0px;width:18px;height:26.0px;background:#ff8080"></div><span style="position:absolute;left:29px;top:54.69999999999999px;width:20px;text-align:center;font:10px 'Liberation Sans',sans-serif;line-height:12px;color:#000;font-size:9.5px">12</span><span style="position:absolute;left:27px;top:217px;width:24px;text-align:center;font:10px 'Liberation Sans',sans-serif;line-height:12px;color:#8a8a8a;letter-spacing:-0.3px">GPS</span><span style="position:absolute;left:27px;top:229px;width:24px;text-align:center;font:10px 'Liberation Sans',sans-serif;line-height:12px;color:#8a8a8a;letter-spacing:-0.3px">3</span><div style="position:absolute;left:50px;top:67.0px;width:18px;height:26.0px;background:#ff8080"></div><span style="position:absolute;left:49px;top:54.69999999999999px;width:20px;text-align:center;font:10px 'Liberation Sans',sans-serif;line-height:12px;color:#000;font-size:9.5px">12</span><span style="position:absolute;left:47px;top:217px;width:24px;text-align:center;font:10px 'Liberation Sans',sans-serif;line-height:12px;color:#000;letter-spacing:-0.3px">GPS</span><span style="position:absolute;left:47px;top:229px;width:24px;text-align:center;font:10px 'Liberation Sans',sans-serif;line-height:12px;color:#000;letter-spacing:-0.3px">6</span><div style="position:absolute;left:69px;top:35px;width:20px;height:209px;background:#f0f0ff"></div><div style="position:absolute;left:70px;top:69.0px;width:18px;height:24.0px;background:#ff8080"></div><span style="position:absolute;left:69px;top:56.69999999999999px;width:20px;text-align:center;font:10px 'Liberation Sans',sans-serif;line-height:12px;color:#000;font-size:9.5px">11</span><span style="position:absolute;left:67px;top:217px;width:24px;text-align:center;font:10px 'Liberation Sans',sans-serif;line-height:12px;color:#8a8a8a;letter-spacing:-0.3px">GPS</span><span style="position:absolute;left:67px;top:229px;width:24px;text-align:center;font:10px 'Liberation Sans',sans-serif;line-height:12px;color:#8a8a8a;letter-spacing:-0.3px">14</span><div style="position:absolute;left:90px;top:68.5px;width:18px;height:24.5px;background:#ff8080"></div><span style="position:absolute;left:89px;top:56.19999999999999px;width:20px;text-align:center;font:10px 'Liberation Sans',sans-serif;line-height:12px;color:#000;font-size:9.5px">11</span><span style="position:absolute;left:87px;top:217px;width:24px;text-align:center;font:10px 'Liberation Sans',sans-serif;line-height:12px;color:#000;letter-spacing:-0.3px">GPS</span><span style="position:absolute;left:87px;top:229px;width:24px;text-align:center;font:10px 'Liberation Sans',sans-serif;line-height:12px;color:#000;letter-spacing:-0.3px">16</span><div style="position:absolute;left:109px;top:35px;width:20px;height:209px;background:#f0f0ff"></div><div style="position:absolute;left:110px;top:67.0px;width:18px;height:26.0px;background:#ff8080"></div><span style="position:absolute;left:109px;top:54.69999999999999px;width:20px;text-align:center;font:10px 'Liberation Sans',sans-serif;line-height:12px;color:#000;font-size:9.5px">12</span><span style="position:absolute;left:107px;top:217px;width:24px;text-align:center;font:10px 'Liberation Sans',sans-serif;line-height:12px;color:#8a8a8a;letter-spacing:-0.3px">GPS</span><span style="position:absolute;left:107px;top:229px;width:24px;text-align:center;font:10px 'Liberation Sans',sans-serif;line-height:12px;color:#8a8a8a;letter-spacing:-0.3px">18</span><div style="position:absolute;left:130px;top:70.0px;width:18px;height:23.0px;background:#ff8080"></div><span style="position:absolute;left:129px;top:57.69999999999999px;width:20px;text-align:center;font:10px 'Liberation Sans',sans-serif;line-height:12px;color:#000;font-size:9.5px">10</span><span style="position:absolute;left:127px;top:217px;width:24px;text-align:center;font:10px 'Liberation Sans',sans-serif;line-height:12px;color:#000;letter-spacing:-0.3px">GPS</span><span style="position:absolute;left:127px;top:229px;width:24px;text-align:center;font:10px 'Liberation Sans',sans-serif;line-height:12px;color:#000;letter-spacing:-0.3px">19</span><div style="position:absolute;left:149px;top:35px;width:20px;height:209px;background:#f0f0ff"></div><div style="position:absolute;left:150px;top:68.5px;width:18px;height:24.5px;background:#ff8080"></div><span style="position:absolute;left:149px;top:56.19999999999999px;width:20px;text-align:center;font:10px 'Liberation Sans',sans-serif;line-height:12px;color:#000;font-size:9.5px">11</span><span style="position:absolute;left:147px;top:217px;width:24px;text-align:center;font:10px 'Liberation Sans',sans-serif;line-height:12px;color:#8a8a8a;letter-spacing:-0.3px">GPS</span><span style="position:absolute;left:147px;top:229px;width:24px;text-align:center;font:10px 'Liberation Sans',sans-serif;line-height:12px;color:#8a8a8a;letter-spacing:-0.3px">21</span><div style="position:absolute;left:170px;top:66.0px;width:18px;height:27.0px;background:#ff8080"></div><span style="position:absolute;left:169px;top:53.69999999999999px;width:20px;text-align:center;font:10px 'Liberation Sans',sans-serif;line-height:12px;color:#000;font-size:9.5px">12</span><span style="position:absolute;left:167px;top:217px;width:24px;text-align:center;font:10px 'Liberation Sans',sans-serif;line-height:12px;color:#000;letter-spacing:-0.3px">GPS</span><span style="position:absolute;left:167px;top:229px;width:24px;text-align:center;font:10px 'Liberation Sans',sans-serif;line-height:12px;color:#000;letter-spacing:-0.3px">22</span><div style="position:absolute;left:189px;top:35px;width:20px;height:209px;background:#f0f0ff"></div><div style="position:absolute;left:190px;top:70.0px;width:18px;height:23.0px;background:#ff8080"></div><span style="position:absolute;left:189px;top:57.69999999999999px;width:20px;text-align:center;font:10px 'Liberation Sans',sans-serif;line-height:12px;color:#000;font-size:9.5px">10</span><span style="position:absolute;left:187px;top:217px;width:24px;text-align:center;font:10px 'Liberation Sans',sans-serif;line-height:12px;color:#8a8a8a;letter-spacing:-0.3px">GPS</span><span style="position:absolute;left:187px;top:229px;width:24px;text-align:center;font:10px 'Liberation Sans',sans-serif;line-height:12px;color:#8a8a8a;letter-spacing:-0.3px">29</span><div style="position:absolute;left:210px;top:66.0px;width:18px;height:27.0px;background:#80ff80"></div><span style="position:absolute;left:209px;top:53.69999999999999px;width:20px;text-align:center;font:10px 'Liberation Sans',sans-serif;line-height:12px;color:#000;font-size:9.5px">12</span><span style="position:absolute;left:207px;top:217px;width:24px;text-align:center;font:10px 'Liberation Sans',sans-serif;line-height:12px;color:#000;letter-spacing:-0.3px">GLN</span><span style="position:absolute;left:207px;top:229px;width:24px;text-align:center;font:10px 'Liberation Sans',sans-serif;line-height:12px;color:#000;letter-spacing:-0.3px">G6</span><div style="position:absolute;left:229px;top:35px;width:20px;height:209px;background:#f0f0ff"></div><div style="position:absolute;left:230px;top:69.0px;width:18px;height:24.0px;background:#80ff80"></div><span style="position:absolute;left:229px;top:56.69999999999999px;width:20px;text-align:center;font:10px 'Liberation Sans',sans-serif;line-height:12px;color:#000;font-size:9.5px">11</span><span style="position:absolute;left:227px;top:217px;width:24px;text-align:center;font:10px 'Liberation Sans',sans-serif;line-height:12px;color:#8a8a8a;letter-spacing:-0.3px">GLN</span><span style="position:absolute;left:227px;top:229px;width:24px;text-align:center;font:10px 'Liberation Sans',sans-serif;line-height:12px;color:#8a8a8a;letter-spacing:-0.3px">G7</span><div style="position:absolute;left:250px;top:67.0px;width:18px;height:26.0px;background:#80ff80"></div><span style="position:absolute;left:249px;top:54.69999999999999px;width:20px;text-align:center;font:10px 'Liberation Sans',sans-serif;line-height:12px;color:#000;font-size:9.5px">12</span><span style="position:absolute;left:247px;top:217px;width:24px;text-align:center;font:10px 'Liberation Sans',sans-serif;line-height:12px;color:#000;letter-spacing:-0.3px">GLN</span><span style="position:absolute;left:247px;top:229px;width:24px;text-align:center;font:10px 'Liberation Sans',sans-serif;line-height:12px;color:#000;letter-spacing:-0.3px">G9</span><div style="position:absolute;left:269px;top:35px;width:20px;height:209px;background:#f0f0ff"></div><div style="position:absolute;left:270px;top:69.0px;width:18px;height:24.0px;background:#80ff80"></div><span style="position:absolute;left:269px;top:56.69999999999999px;width:20px;text-align:center;font:10px 'Liberation Sans',sans-serif;line-height:12px;color:#000;font-size:9.5px">11</span><span style="position:absolute;left:267px;top:217px;width:24px;text-align:center;font:10px 'Liberation Sans',sans-serif;line-height:12px;color:#8a8a8a;letter-spacing:-0.3px">GLN</span><span style="position:absolute;left:267px;top:229px;width:24px;text-align:center;font:10px 'Liberation Sans',sans-serif;line-height:12px;color:#8a8a8a;letter-spacing:-0.3px">G15</span><div style="position:absolute;left:291px;top:69.0px;width:18px;height:24.0px;background:#80d8ff"></div><span style="position:absolute;left:290px;top:56.69999999999999px;width:20px;text-align:center;font:10px 'Liberation Sans',sans-serif;line-height:12px;color:#000;font-size:9.5px">11</span><span style="position:absolute;left:288px;top:217px;width:24px;text-align:center;font:10px 'Liberation Sans',sans-serif;line-height:12px;color:#000;letter-spacing:-0.3px">GAL</span><span style="position:absolute;left:288px;top:229px;width:24px;text-align:center;font:10px 'Liberation Sans',sans-serif;line-height:12px;color:#000;letter-spacing:-0.3px">A1</span><div style="position:absolute;left:310px;top:35px;width:20px;height:209px;background:#f0f0ff"></div><div style="position:absolute;left:311px;top:68.0px;width:18px;height:25.0px;background:#80d8ff"></div><span style="position:absolute;left:310px;top:55.69999999999999px;width:20px;text-align:center;font:10px 'Liberation Sans',sans-serif;line-height:12px;color:#000;font-size:9.5px">11</span><span style="position:absolute;left:308px;top:217px;width:24px;text-align:center;font:10px 'Liberation Sans',sans-serif;line-height:12px;color:#8a8a8a;letter-spacing:-0.3px">GAL</span><span style="position:absolute;left:308px;top:229px;width:24px;text-align:center;font:10px 'Liberation Sans',sans-serif;line-height:12px;color:#8a8a8a;letter-spacing:-0.3px">A7</span><div style="position:absolute;left:331px;top:67.0px;width:18px;height:26.0px;background:#80d8ff"></div><span style="position:absolute;left:330px;top:54.69999999999999px;width:20px;text-align:center;font:10px 'Liberation Sans',sans-serif;line-height:12px;color:#000;font-size:9.5px">12</span><span style="position:absolute;left:328px;top:217px;width:24px;text-align:center;font:10px 'Liberation Sans',sans-serif;line-height:12px;color:#000;letter-spacing:-0.3px">GAL</span><span style="position:absolute;left:328px;top:229px;width:24px;text-align:center;font:10px 'Liberation Sans',sans-serif;line-height:12px;color:#000;letter-spacing:-0.3px">A8</span><div style="position:absolute;left:350px;top:35px;width:20px;height:209px;background:#f0f0ff"></div><div style="position:absolute;left:351px;top:69.0px;width:18px;height:24.0px;background:#80d8ff"></div><span style="position:absolute;left:350px;top:56.69999999999999px;width:20px;text-align:center;font:10px 'Liberation Sans',sans-serif;line-height:12px;color:#000;font-size:9.5px">11</span><span style="position:absolute;left:348px;top:217px;width:24px;text-align:center;font:10px 'Liberation Sans',sans-serif;line-height:12px;color:#8a8a8a;letter-spacing:-0.3px">GAL</span><span style="position:absolute;left:348px;top:229px;width:24px;text-align:center;font:10px 'Liberation Sans',sans-serif;line-height:12px;color:#8a8a8a;letter-spacing:-0.3px">A12</span><div style="position:absolute;left:371px;top:67.0px;width:18px;height:26.0px;background:#80d8ff"></div><span style="position:absolute;left:370px;top:54.69999999999999px;width:20px;text-align:center;font:10px 'Liberation Sans',sans-serif;line-height:12px;color:#000;font-size:9.5px">12</span><span style="position:absolute;left:368px;top:217px;width:24px;text-align:center;font:10px 'Liberation Sans',sans-serif;line-height:12px;color:#000;letter-spacing:-0.3px">GAL</span><span style="position:absolute;left:368px;top:229px;width:24px;text-align:center;font:10px 'Liberation Sans',sans-serif;line-height:12px;color:#000;letter-spacing:-0.3px">A13</span><div style="position:absolute;left:390px;top:35px;width:20px;height:209px;background:#f0f0ff"></div><div style="position:absolute;left:391px;top:67.0px;width:18px;height:26.0px;background:#80d8ff"></div><span style="position:absolute;left:390px;top:54.69999999999999px;width:20px;text-align:center;font:10px 'Liberation Sans',sans-serif;line-height:12px;color:#000;font-size:9.5px">11</span><span style="position:absolute;left:388px;top:217px;width:24px;text-align:center;font:10px 'Liberation Sans',sans-serif;line-height:12px;color:#8a8a8a;letter-spacing:-0.3px">GAL</span><span style="position:absolute;left:388px;top:229px;width:24px;text-align:center;font:10px 'Liberation Sans',sans-serif;line-height:12px;color:#8a8a8a;letter-spacing:-0.3px">A14</span><div style="position:absolute;left:411px;top:69.0px;width:18px;height:24.0px;background:#b080ff"></div><span style="position:absolute;left:410px;top:56.69999999999999px;width:20px;text-align:center;font:10px 'Liberation Sans',sans-serif;line-height:12px;color:#000;font-size:9.5px">11</span><span style="position:absolute;left:408px;top:217px;width:24px;text-align:center;font:10px 'Liberation Sans',sans-serif;line-height:12px;color:#000;letter-spacing:-0.3px">BD2</span><span style="position:absolute;left:408px;top:229px;width:24px;text-align:center;font:10px 'Liberation Sans',sans-serif;line-height:12px;color:#000;letter-spacing:-0.3px">B1</span><div style="position:absolute;left:430px;top:35px;width:20px;height:209px;background:#f0f0ff"></div><div style="position:absolute;left:431px;top:68.0px;width:18px;height:25.0px;background:#b080ff"></div><span style="position:absolute;left:430px;top:55.69999999999999px;width:20px;text-align:center;font:10px 'Liberation Sans',sans-serif;line-height:12px;color:#000;font-size:9.5px">11</span><span style="position:absolute;left:428px;top:217px;width:24px;text-align:center;font:10px 'Liberation Sans',sans-serif;line-height:12px;color:#8a8a8a;letter-spacing:-0.3px">BD2</span><span style="position:absolute;left:428px;top:229px;width:24px;text-align:center;font:10px 'Liberation Sans',sans-serif;line-height:12px;color:#8a8a8a;letter-spacing:-0.3px">B2</span><div style="position:absolute;left:451px;top:70.0px;width:18px;height:23.0px;background:#b080ff"></div><span style="position:absolute;left:450px;top:57.69999999999999px;width:20px;text-align:center;font:10px 'Liberation Sans',sans-serif;line-height:12px;color:#000;font-size:9.5px">10</span><span style="position:absolute;left:448px;top:217px;width:24px;text-align:center;font:10px 'Liberation Sans',sans-serif;line-height:12px;color:#000;letter-spacing:-0.3px">BD2</span><span style="position:absolute;left:448px;top:229px;width:24px;text-align:center;font:10px 'Liberation Sans',sans-serif;line-height:12px;color:#000;letter-spacing:-0.3px">B3</span><div style="position:absolute;left:470px;top:35px;width:20px;height:209px;background:#f0f0ff"></div><div style="position:absolute;left:471px;top:69.0px;width:18px;height:24.0px;background:#b080ff"></div><span style="position:absolute;left:470px;top:56.69999999999999px;width:20px;text-align:center;font:10px 'Liberation Sans',sans-serif;line-height:12px;color:#000;font-size:9.5px">11</span><span style="position:absolute;left:468px;top:217px;width:24px;text-align:center;font:10px 'Liberation Sans',sans-serif;line-height:12px;color:#8a8a8a;letter-spacing:-0.3px">BD2</span><span style="position:absolute;left:468px;top:229px;width:24px;text-align:center;font:10px 'Liberation Sans',sans-serif;line-height:12px;color:#8a8a8a;letter-spacing:-0.3px">B4</span><div style="position:absolute;left:491px;top:68.0px;width:18px;height:25.0px;background:#b080ff"></div><span style="position:absolute;left:490px;top:55.69999999999999px;width:20px;text-align:center;font:10px 'Liberation Sans',sans-serif;line-height:12px;color:#000;font-size:9.5px">11</span><span style="position:absolute;left:488px;top:217px;width:24px;text-align:center;font:10px 'Liberation Sans',sans-serif;line-height:12px;color:#000;letter-spacing:-0.3px">BD2</span><span style="position:absolute;left:488px;top:229px;width:24px;text-align:center;font:10px 'Liberation Sans',sans-serif;line-height:12px;color:#000;letter-spacing:-0.3px">B6</span><div style="position:absolute;left:510px;top:35px;width:20px;height:209px;background:#f0f0ff"></div><div style="position:absolute;left:511px;top:69.0px;width:18px;height:24.0px;background:#b080ff"></div><span style="position:absolute;left:510px;top:56.69999999999999px;width:20px;text-align:center;font:10px 'Liberation Sans',sans-serif;line-height:12px;color:#000;font-size:9.5px">11</span><span style="position:absolute;left:508px;top:217px;width:24px;text-align:center;font:10px 'Liberation Sans',sans-serif;line-height:12px;color:#8a8a8a;letter-spacing:-0.3px">BD2</span><span style="position:absolute;left:508px;top:229px;width:24px;text-align:center;font:10px 'Liberation Sans',sans-serif;line-height:12px;color:#8a8a8a;letter-spacing:-0.3px">B8</span><div style="position:absolute;left:531px;top:70.0px;width:18px;height:23.0px;background:#b080ff"></div><span style="position:absolute;left:530px;top:57.69999999999999px;width:20px;text-align:center;font:10px 'Liberation Sans',sans-serif;line-height:12px;color:#000;font-size:9.5px">11</span><span style="position:absolute;left:528px;top:217px;width:24px;text-align:center;font:10px 'Liberation Sans',sans-serif;line-height:12px;color:#000;letter-spacing:-0.3px">BD2</span><span style="position:absolute;left:528px;top:229px;width:24px;text-align:center;font:10px 'Liberation Sans',sans-serif;line-height:12px;color:#000;letter-spacing:-0.3px">B9</span><div style="position:absolute;left:550px;top:35px;width:20px;height:209px;background:#f0f0ff"></div><div style="position:absolute;left:551px;top:69.0px;width:18px;height:24.0px;background:#b080ff"></div><span style="position:absolute;left:550px;top:56.69999999999999px;width:20px;text-align:center;font:10px 'Liberation Sans',sans-serif;line-height:12px;color:#000;font-size:9.5px">11</span><span style="position:absolute;left:548px;top:217px;width:24px;text-align:center;font:10px 'Liberation Sans',sans-serif;line-height:12px;color:#8a8a8a;letter-spacing:-0.3px">BD2</span><span style="position:absolute;left:548px;top:229px;width:24px;text-align:center;font:10px 'Liberation Sans',sans-serif;line-height:12px;color:#8a8a8a;letter-spacing:-0.3px">B11</span><div style="position:absolute;left:571px;top:67.0px;width:18px;height:26.0px;background:#b080ff"></div><span style="position:absolute;left:570px;top:54.69999999999999px;width:20px;text-align:center;font:10px 'Liberation Sans',sans-serif;line-height:12px;color:#000;font-size:9.5px">11</span><span style="position:absolute;left:568px;top:217px;width:24px;text-align:center;font:10px 'Liberation Sans',sans-serif;line-height:12px;color:#000;letter-spacing:-0.3px">BD2</span><span style="position:absolute;left:568px;top:229px;width:24px;text-align:center;font:10px 'Liberation Sans',sans-serif;line-height:12px;color:#000;letter-spacing:-0.3px">B12</span><div style="position:absolute;left:29px;top:93px;width:561px;height:1px;background:#000"></div><span style="position:absolute;left:2px;top:86.69999999999999px;white-space:pre;font:10px 'Liberation Sans',sans-serif;line-height:12px;color:#000">Ref</span><span style="position:absolute;left:2px;top:217px;white-space:pre;font:10px 'Liberation Sans',sans-serif;line-height:12px;color:#000;letter-spacing:-0.2px">Signal</span><span style="position:absolute;left:2px;top:229px;white-space:pre;font:10px 'Liberation Sans',sans-serif;line-height:12px;color:#000;letter-spacing:-0.2px">SVID</span></div></div></div><div style="position:absolute;left:1263px;top:306px;width:655px;height:285px;background:#444;border-radius:6px 6px 0 0"></div><div style="position:absolute;left:1264px;top:307px;width:653px;height:283px;background:linear-gradient(#bfcddb 0px,#cbd8e6 14px,#d7e4f2 30px,#d7e4f2 100%);border-radius:5px 5px 0 0;box-shadow:inset 1px 1px 0 0 #e3edf7;"><svg style="position:absolute;left:9px;top:10px" width="15" height="13" viewBox="0 0 15 13"><rect x="0.5" y="0.5" width="14" height="12" fill="#f4f4f4" stroke="#8a8f98"/><rect x="0" y="0" width="15" height="1" fill="#6f7782"/><rect x="1.5" y="2" width="5.5" height="8.5" fill="#2f8f86"/><rect x="1.5" y="2" width="5.5" height="3" fill="#5573a8" opacity="0.7"/><rect x="11.6" y="2" width="1.2" height="3.5" fill="#1a43a8"/><rect x="8.5" y="9" width="3" height="1.5" fill="#c9c9c9"/></svg><span style="position:absolute;left:29px;top:11px;font:12px 'Liberation Sans',sans-serif;color:#434e66;white-space:pre;letter-spacing:-0.1px">Received Signals</span><div style="position:absolute;left:613px;top:9px;width:29px;height:15px;border:1px solid #8e9dbd;border-radius:3px;background:linear-gradient(#cddbea 0,#c6d5e6 48%,#bccde0 52%,#cfdcec 100%);box-shadow:inset 0 0 0 1px rgba(255,255,255,.45)"><svg style="position:absolute;left:9px;top:3px" width="12" height="11" viewBox="0 0 12 11"><path d="M0.5 0.7 L3.9 0.7 L5.5 2.8 L7.1 0.7 L10.5 0.7 L7.4 4.9 L10.5 9.3 L7.1 9.3 L5.5 7.1 L3.9 9.3 L0.5 9.3 L3.6 4.9 Z" fill="#f8f8f8" stroke="#454b66" stroke-width="1" stroke-linejoin="round"/></svg></div><div style="position:absolute;left:580px;top:9px;width:29px;height:15px;border:1px solid #8e9dbd;border-radius:3px;background:linear-gradient(#cddbea 0,#c6d5e6 48%,#bccde0 52%,#cfdcec 100%);box-shadow:inset 0 0 0 1px rgba(255,255,255,.45)"><svg style="position:absolute;left:9px;top:3px" width="12" height="11" viewBox="0 0 12 11"><rect x="0.5" y="0.5" width="10" height="9" rx="1" fill="#f6f6f6" stroke="#454b66"/><rect x="3.5" y="3.5" width="4" height="2" fill="#a9bbd3" stroke="#454b66"/></svg></div><div style="position:absolute;left:547px;top:9px;width:29px;height:15px;border:1px solid #8e9dbd;border-radius:3px;background:linear-gradient(#cddbea 0,#c6d5e6 48%,#bccde0 52%,#cfdcec 100%);box-shadow:inset 0 0 0 1px rgba(255,255,255,.45)"><div style="position:absolute;left:9px;top:7px;width:9px;height:3px;background:#f6f6f6;border:1px solid #454b66;border-radius:1px"></div></div><div style="position:absolute;left:7px;top:29px;width:639px;height:247px;box-sizing:border-box;border:1px solid;border-color:#7f8893 #fff #fff #7f8893;"><div style="position:absolute;left:0;top:0;right:0;bottom:0;border:1px solid;border-color:#696969 #e3e3e3 #e3e3e3 #696969;overflow:hidden"><div style="position:absolute;left:0;top:0;width:2000px;height:300px"><div style="position:absolute;left:0px;top:0px;width:640px;height:260px;background:#fff"></div><span style="position:absolute;right:1964.7px;top:26.899999999999977px;white-space:pre;font:11px 'Liberation Sans',sans-serif;line-height:16px;letter-spacing:-0.15px;color:#000;">1 *</span><span style="position:absolute;right:1930px;top:26.899999999999977px;white-space:pre;font:11px 'Liberation Sans',sans-serif;line-height:16px;letter-spacing:-0.15px;color:#000;">25</span><span style="position:absolute;right:1872.2px;top:26.899999999999977px;white-space:pre;font:11px 'Liberation Sans',sans-serif;line-height:16px;letter-spacing:-0.15px;color:#000;">GAL E1</span><span style="position:absolute;left:123.90000000000009px;width:80px;text-align:center;top:26.899999999999977px;white-space:pre;font:11px 'Liberation Sans',sans-serif;line-height:16px;letter-spacing:-0.15px;color:#000;">-</span><span style="position:absolute;right:1785.3px;top:26.899999999999977px;white-space:pre;font:11px 'Liberation Sans',sans-serif;line-height:16px;letter-spacing:-0.15px;color:#000;">1</span><span style="position:absolute;right:1741.4px;top:26.899999999999977px;white-space:pre;font:11px 'Liberation Sans',sans-serif;line-height:16px;letter-spacing:-0.15px;color:#000;">22.5</span><span style="position:absolute;right:1697px;top:26.899999999999977px;white-space:pre;font:11px 'Liberation Sans',sans-serif;line-height:16px;letter-spacing:-0.15px;color:#000;">140.8</span><span style="position:absolute;right:1648.3px;top:26.899999999999977px;white-space:pre;font:11px 'Liberation Sans',sans-serif;line-height:16px;letter-spacing:-0.15px;color:#000;">6.4</span><span style="position:absolute;right:1606px;top:26.899999999999977px;white-space:pre;font:11px 'Liberation Sans',sans-serif;line-height:16px;letter-spacing:-0.15px;color:#000;">9.0</span><span style="position:absolute;right:1523px;top:26.899999999999977px;white-space:pre;font:11px 'Liberation Sans',sans-serif;line-height:16px;letter-spacing:-0.15px;color:#000;">26558328.439</span><span style="position:absolute;right:1469px;top:26.899999999999977px;white-space:pre;font:11px 'Liberation Sans',sans-serif;line-height:16px;letter-spacing:-0.15px;color:#000;">496.02</span><span style="position:absolute;right:1417.2px;top:26.899999999999977px;white-space:pre;font:11px 'Liberation Sans',sans-serif;line-height:16px;letter-spacing:-0.15px;color:#000;">10.74</span><div style="position:absolute;left:6px;top:43.39999999999998px;width:611px;height:17px;background:#f0f0ff"></div><span style="position:absolute;right:1970.7px;top:43.89999999999998px;white-space:pre;font:11px 'Liberation Sans',sans-serif;line-height:16px;letter-spacing:-0.15px;color:#000;">1</span><span style="position:absolute;right:1930px;top:43.89999999999998px;white-space:pre;font:11px 'Liberation Sans',sans-serif;line-height:16px;letter-spacing:-0.15px;color:#000;">44</span><span style="position:absolute;right:1872.2px;top:43.89999999999998px;white-space:pre;font:11px 'Liberation Sans',sans-serif;line-height:16px;letter-spacing:-0.15px;color:#000;">BD2 B1</span><span style="position:absolute;left:123.90000000000009px;width:80px;text-align:center;top:43.89999999999998px;white-space:pre;font:11px 'Liberation Sans',sans-serif;line-height:16px;letter-spacing:-0.15px;color:#000;">-</span><span style="position:absolute;right:1785.3px;top:43.89999999999998px;white-space:pre;font:11px 'Liberation Sans',sans-serif;line-height:16px;letter-spacing:-0.15px;color:#000;">1</span><span style="position:absolute;right:1741.4px;top:43.89999999999998px;white-space:pre;font:11px 'Liberation Sans',sans-serif;line-height:16px;letter-spacing:-0.15px;color:#000;">38.3</span><span style="position:absolute;right:1697px;top:43.89999999999998px;white-space:pre;font:11px 'Liberation Sans',sans-serif;line-height:16px;letter-spacing:-0.15px;color:#000;">132.1</span><span style="position:absolute;right:1648.3px;top:43.89999999999998px;white-space:pre;font:11px 'Liberation Sans',sans-serif;line-height:16px;letter-spacing:-0.15px;color:#000;">3.9</span><span style="position:absolute;right:1606px;top:43.89999999999998px;white-space:pre;font:11px 'Liberation Sans',sans-serif;line-height:16px;letter-spacing:-0.15px;color:#000;">2.4</span><span style="position:absolute;right:1523px;top:43.89999999999998px;white-space:pre;font:11px 'Liberation Sans',sans-serif;line-height:16px;letter-spacing:-0.15px;color:#000;">37909976.975</span><span style="position:absolute;right:1469px;top:43.89999999999998px;white-space:pre;font:11px 'Liberation Sans',sans-serif;line-height:16px;letter-spacing:-0.15px;color:#000;">-1.61</span><span style="position:absolute;right:1417.2px;top:43.89999999999998px;white-space:pre;font:11px 'Liberation Sans',sans-serif;line-height:16px;letter-spacing:-0.15px;color:#000;">10.82</span><span style="position:absolute;right:1970.7px;top:60.89999999999998px;white-space:pre;font:11px 'Liberation Sans',sans-serif;line-height:16px;letter-spacing:-0.15px;color:#000;">2</span><span style="position:absolute;right:1930px;top:60.89999999999998px;white-space:pre;font:11px 'Liberation Sans',sans-serif;line-height:16px;letter-spacing:-0.15px;color:#000;">41</span><span style="position:absolute;right:1872.2px;top:60.89999999999998px;white-space:pre;font:11px 'Liberation Sans',sans-serif;line-height:16px;letter-spacing:-0.15px;color:#000;">BD2 B1</span><span style="position:absolute;left:123.90000000000009px;width:80px;text-align:center;top:60.89999999999998px;white-space:pre;font:11px 'Liberation Sans',sans-serif;line-height:16px;letter-spacing:-0.15px;color:#000;">-</span><span style="position:absolute;right:1785.3px;top:60.89999999999998px;white-space:pre;font:11px 'Liberation Sans',sans-serif;line-height:16px;letter-spacing:-0.15px;color:#000;">2</span><span style="position:absolute;right:1741.4px;top:60.89999999999998px;white-space:pre;font:11px 'Liberation Sans',sans-serif;line-height:16px;letter-spacing:-0.15px;color:#000;">54.5</span><span style="position:absolute;right:1697px;top:60.89999999999998px;white-space:pre;font:11px 'Liberation Sans',sans-serif;line-height:16px;letter-spacing:-0.15px;color:#000;">-162.2</span><span style="position:absolute;right:1648.3px;top:60.89999999999998px;white-space:pre;font:11px 'Liberation Sans',sans-serif;line-height:16px;letter-spacing:-0.15px;color:#000;">3.0</span><span style="position:absolute;right:1606px;top:60.89999999999998px;white-space:pre;font:11px 'Liberation Sans',sans-serif;line-height:16px;letter-spacing:-0.15px;color:#000;">1.8</span><span style="position:absolute;right:1523px;top:60.89999999999998px;white-space:pre;font:11px 'Liberation Sans',sans-serif;line-height:16px;letter-spacing:-0.15px;color:#000;">36796354.292</span><span style="position:absolute;right:1469px;top:60.89999999999998px;white-space:pre;font:11px 'Liberation Sans',sans-serif;line-height:16px;letter-spacing:-0.15px;color:#000;">8.05</span><span style="position:absolute;right:1417.2px;top:60.89999999999998px;white-space:pre;font:11px 'Liberation Sans',sans-serif;line-height:16px;letter-spacing:-0.15px;color:#000;">11.08</span><div style="position:absolute;left:6px;top:77.39999999999998px;width:611px;height:17px;background:#f0f0ff"></div><span style="position:absolute;right:1970.7px;top:77.89999999999998px;white-space:pre;font:11px 'Liberation Sans',sans-serif;line-height:16px;letter-spacing:-0.15px;color:#000;">3</span><span style="position:absolute;right:1930px;top:77.89999999999998px;white-space:pre;font:11px 'Liberation Sans',sans-serif;line-height:16px;letter-spacing:-0.15px;color:#000;">10</span><span style="position:absolute;right:1872.2px;top:77.89999999999998px;white-space:pre;font:11px 'Liberation Sans',sans-serif;line-height:16px;letter-spacing:-0.15px;color:#000;">GPS L1</span><span style="position:absolute;left:123.90000000000009px;width:80px;text-align:center;top:77.89999999999998px;white-space:pre;font:11px 'Liberation Sans',sans-serif;line-height:16px;letter-spacing:-0.15px;color:#000;">-</span><span style="position:absolute;right:1785.3px;top:77.89999999999998px;white-space:pre;font:11px 'Liberation Sans',sans-serif;line-height:16px;letter-spacing:-0.15px;color:#000;">3</span><span style="position:absolute;right:1741.4px;top:77.89999999999998px;white-space:pre;font:11px 'Liberation Sans',sans-serif;line-height:16px;letter-spacing:-0.15px;color:#000;">45.5</span><span style="position:absolute;right:1697px;top:77.89999999999998px;white-space:pre;font:11px 'Liberation Sans',sans-serif;line-height:16px;letter-spacing:-0.15px;color:#000;">-42.7</span><span style="position:absolute;right:1648.3px;top:77.89999999999998px;white-space:pre;font:11px 'Liberation Sans',sans-serif;line-height:16px;letter-spacing:-0.15px;color:#000;">3.4</span><span style="position:absolute;right:1606px;top:77.89999999999998px;white-space:pre;font:11px 'Liberation Sans',sans-serif;line-height:16px;letter-spacing:-0.15px;color:#000;">2.0</span><span style="position:absolute;right:1523px;top:77.89999999999998px;white-space:pre;font:11px 'Liberation Sans',sans-serif;line-height:16px;letter-spacing:-0.15px;color:#000;">21644359.493</span><span style="position:absolute;right:1469px;top:77.89999999999998px;white-space:pre;font:11px 'Liberation Sans',sans-serif;line-height:16px;letter-spacing:-0.15px;color:#000;">-462.72</span><span style="position:absolute;right:1417.2px;top:77.89999999999998px;white-space:pre;font:11px 'Liberation Sans',sans-serif;line-height:16px;letter-spacing:-0.15px;color:#000;">11.52</span><span style="position:absolute;right:1970.7px;top:94.89999999999998px;white-space:pre;font:11px 'Liberation Sans',sans-serif;line-height:16px;letter-spacing:-0.15px;color:#000;">3</span><span style="position:absolute;right:1930px;top:94.89999999999998px;white-space:pre;font:11px 'Liberation Sans',sans-serif;line-height:16px;letter-spacing:-0.15px;color:#000;">42</span><span style="position:absolute;right:1872.2px;top:94.89999999999998px;white-space:pre;font:11px 'Liberation Sans',sans-serif;line-height:16px;letter-spacing:-0.15px;color:#000;">BD2 B1</span><span style="position:absolute;left:123.90000000000009px;width:80px;text-align:center;top:94.89999999999998px;white-space:pre;font:11px 'Liberation Sans',sans-serif;line-height:16px;letter-spacing:-0.15px;color:#000;">-</span><span style="position:absolute;right:1785.3px;top:94.89999999999998px;white-space:pre;font:11px 'Liberation Sans',sans-serif;line-height:16px;letter-spacing:-0.15px;color:#000;">3</span><span style="position:absolute;right:1741.4px;top:94.89999999999998px;white-space:pre;font:11px 'Liberation Sans',sans-serif;line-height:16px;letter-spacing:-0.15px;color:#000;">7.0</span><span style="position:absolute;right:1697px;top:94.89999999999998px;white-space:pre;font:11px 'Liberation Sans',sans-serif;line-height:16px;letter-spacing:-0.15px;color:#000;">-99.8</span><span style="position:absolute;right:1648.3px;top:94.89999999999998px;white-space:pre;font:11px 'Liberation Sans',sans-serif;line-height:16px;letter-spacing:-0.15px;color:#000;">18.8</span><span style="position:absolute;right:1606px;top:94.89999999999998px;white-space:pre;font:11px 'Liberation Sans',sans-serif;line-height:16px;letter-spacing:-0.15px;color:#000;">4.4</span><span style="position:absolute;right:1523px;top:94.89999999999998px;white-space:pre;font:11px 'Liberation Sans',sans-serif;line-height:16px;letter-spacing:-0.15px;color:#000;">40910855.967</span><span style="position:absolute;right:1469px;top:94.89999999999998px;white-space:pre;font:11px 'Liberation Sans',sans-serif;line-height:16px;letter-spacing:-0.15px;color:#000;">13.63</span><span style="position:absolute;right:1417.2px;top:94.89999999999998px;white-space:pre;font:11px 'Liberation Sans',sans-serif;line-height:16px;letter-spacing:-0.15px;color:#000;">10.16</span><div style="position:absolute;left:6px;top:111.39999999999998px;width:611px;height:17px;background:#f0f0ff"></div><span style="position:absolute;right:1964.7px;top:111.89999999999998px;white-space:pre;font:11px 'Liberation Sans',sans-serif;line-height:16px;letter-spacing:-0.15px;color:#000;">4 *</span><span style="position:absolute;right:1930px;top:111.89999999999998px;white-space:pre;font:11px 'Liberation Sans',sans-serif;line-height:16px;letter-spacing:-0.15px;color:#000;">37</span><span style="position:absolute;right:1872.2px;top:111.89999999999998px;white-space:pre;font:11px 'Liberation Sans',sans-serif;line-height:16px;letter-spacing:-0.15px;color:#000;">BD2 B1</span><span style="position:absolute;left:123.90000000000009px;width:80px;text-align:center;top:111.89999999999998px;white-space:pre;font:11px 'Liberation Sans',sans-serif;line-height:16px;letter-spacing:-0.15px;color:#000;">-</span><span style="position:absolute;right:1785.3px;top:111.89999999999998px;white-space:pre;font:11px 'Liberation Sans',sans-serif;line-height:16px;letter-spacing:-0.15px;color:#000;">4</span><span style="position:absolute;right:1741.4px;top:111.89999999999998px;white-space:pre;font:11px 'Liberation Sans',sans-serif;line-height:16px;letter-spacing:-0.15px;color:#000;">34.9</span><span style="position:absolute;right:1697px;top:111.89999999999998px;white-space:pre;font:11px 'Liberation Sans',sans-serif;line-height:16px;letter-spacing:-0.15px;color:#000;">127.6</span><span style="position:absolute;right:1648.3px;top:111.89999999999998px;white-space:pre;font:11px 'Liberation Sans',sans-serif;line-height:16px;letter-spacing:-0.15px;color:#000;">4.3</span><span style="position:absolute;right:1606px;top:111.89999999999998px;white-space:pre;font:11px 'Liberation Sans',sans-serif;line-height:16px;letter-spacing:-0.15px;color:#000;">2.6</span><span style="position:absolute;right:1523px;top:111.89999999999998px;white-space:pre;font:11px 'Liberation Sans',sans-serif;line-height:16px;letter-spacing:-0.15px;color:#000;">38190527.066</span><span style="position:absolute;right:1469px;top:111.89999999999998px;white-space:pre;font:11px 'Liberation Sans',sans-serif;line-height:16px;letter-spacing:-0.15px;color:#000;">8.23</span><span style="position:absolute;right:1417.2px;top:111.89999999999998px;white-space:pre;font:11px 'Liberation Sans',sans-serif;line-height:16px;letter-spacing:-0.15px;color:#000;">10.76</span><span style="position:absolute;right:1970.7px;top:128.89999999999998px;white-space:pre;font:11px 'Liberation Sans',sans-serif;line-height:16px;letter-spacing:-0.15px;color:#000;">6</span><span style="position:absolute;right:1930px;top:128.89999999999998px;white-space:pre;font:11px 'Liberation Sans',sans-serif;line-height:16px;letter-spacing:-0.15px;color:#000;">9</span><span style="position:absolute;right:1872.2px;top:128.89999999999998px;white-space:pre;font:11px 'Liberation Sans',sans-serif;line-height:16px;letter-spacing:-0.15px;color:#000;">GPS L1</span><span style="position:absolute;left:123.90000000000009px;width:80px;text-align:center;top:128.89999999999998px;white-space:pre;font:11px 'Liberation Sans',sans-serif;line-height:16px;letter-spacing:-0.15px;color:#000;">-</span><span style="position:absolute;right:1785.3px;top:128.89999999999998px;white-space:pre;font:11px 'Liberation Sans',sans-serif;line-height:16px;letter-spacing:-0.15px;color:#000;">6</span><span style="position:absolute;right:1741.4px;top:128.89999999999998px;white-space:pre;font:11px 'Liberation Sans',sans-serif;line-height:16px;letter-spacing:-0.15px;color:#000;">60.4</span><span style="position:absolute;right:1697px;top:128.89999999999998px;white-space:pre;font:11px 'Liberation Sans',sans-serif;line-height:16px;letter-spacing:-0.15px;color:#000;">-40.0</span><span style="position:absolute;right:1648.3px;top:128.89999999999998px;white-space:pre;font:11px 'Liberation Sans',sans-serif;line-height:16px;letter-spacing:-0.15px;color:#000;">2.8</span><span style="position:absolute;right:1606px;top:128.89999999999998px;white-space:pre;font:11px 'Liberation Sans',sans-serif;line-height:16px;letter-spacing:-0.15px;color:#000;">1.7</span><span style="position:absolute;right:1523px;top:128.89999999999998px;white-space:pre;font:11px 'Liberation Sans',sans-serif;line-height:16px;letter-spacing:-0.15px;color:#000;">20837293.731</span><span style="position:absolute;right:1469px;top:128.89999999999998px;white-space:pre;font:11px 'Liberation Sans',sans-serif;line-height:16px;letter-spacing:-0.15px;color:#000;">-333.20</span><span style="position:absolute;right:1417.2px;top:128.89999999999998px;white-space:pre;font:11px 'Liberation Sans',sans-serif;line-height:16px;letter-spacing:-0.15px;color:#000;">11.85</span><div style="position:absolute;left:6px;top:145.39999999999998px;width:611px;height:17px;background:#f0f0ff"></div><span style="position:absolute;right:1964.7px;top:145.89999999999998px;white-space:pre;font:11px 'Liberation Sans',sans-serif;line-height:16px;letter-spacing:-0.15px;color:#000;">6 *</span><span style="position:absolute;right:1930px;top:145.89999999999998px;white-space:pre;font:11px 'Liberation Sans',sans-serif;line-height:16px;letter-spacing:-0.15px;color:#000;">13</span><span style="position:absolute;right:1872.2px;top:145.89999999999998px;white-space:pre;font:11px 'Liberation Sans',sans-serif;line-height:16px;letter-spacing:-0.15px;color:#000;">GLN L1</span><span style="position:absolute;left:123.90000000000009px;width:80px;text-align:center;top:145.89999999999998px;white-space:pre;font:11px 'Liberation Sans',sans-serif;line-height:16px;letter-spacing:-0.15px;color:#000;">-</span><span style="position:absolute;right:1785.3px;top:145.89999999999998px;white-space:pre;font:11px 'Liberation Sans',sans-serif;line-height:16px;letter-spacing:-0.15px;color:#000;">1</span><span style="position:absolute;right:1741.4px;top:145.89999999999998px;white-space:pre;font:11px 'Liberation Sans',sans-serif;line-height:16px;letter-spacing:-0.15px;color:#000;">76.7</span><span style="position:absolute;right:1697px;top:145.89999999999998px;white-space:pre;font:11px 'Liberation Sans',sans-serif;line-height:16px;letter-spacing:-0.15px;color:#000;">24.6</span><span style="position:absolute;right:1648.3px;top:145.89999999999998px;white-space:pre;font:11px 'Liberation Sans',sans-serif;line-height:16px;letter-spacing:-0.15px;color:#000;">2.5</span><span style="position:absolute;right:1606px;top:145.89999999999998px;white-space:pre;font:11px 'Liberation Sans',sans-serif;line-height:16px;letter-spacing:-0.15px;color:#000;">1.5</span><span style="position:absolute;right:1523px;top:145.89999999999998px;white-space:pre;font:11px 'Liberation Sans',sans-serif;line-height:16px;letter-spacing:-0.15px;color:#000;">19117848.822</span><span style="position:absolute;right:1469px;top:145.89999999999998px;white-space:pre;font:11px 'Liberation Sans',sans-serif;line-height:16px;letter-spacing:-0.15px;color:#000;">-149.19</span><span style="position:absolute;right:1417.2px;top:145.89999999999998px;white-space:pre;font:11px 'Liberation Sans',sans-serif;line-height:16px;letter-spacing:-0.15px;color:#000;">12.16</span><span style="position:absolute;right:1964.7px;top:162.89999999999998px;white-space:pre;font:11px 'Liberation Sans',sans-serif;line-height:16px;letter-spacing:-0.15px;color:#000;">6 *</span><span style="position:absolute;right:1930px;top:162.89999999999998px;white-space:pre;font:11px 'Liberation Sans',sans-serif;line-height:16px;letter-spacing:-0.15px;color:#000;">38</span><span style="position:absolute;right:1872.2px;top:162.89999999999998px;white-space:pre;font:11px 'Liberation Sans',sans-serif;line-height:16px;letter-spacing:-0.15px;color:#000;">BD2 B1</span><span style="position:absolute;left:123.90000000000009px;width:80px;text-align:center;top:162.89999999999998px;white-space:pre;font:11px 'Liberation Sans',sans-serif;line-height:16px;letter-spacing:-0.15px;color:#000;">-</span><span style="position:absolute;right:1785.3px;top:162.89999999999998px;white-space:pre;font:11px 'Liberation Sans',sans-serif;line-height:16px;letter-spacing:-0.15px;color:#000;">6</span><span style="position:absolute;right:1741.4px;top:162.89999999999998px;white-space:pre;font:11px 'Liberation Sans',sans-serif;line-height:16px;letter-spacing:-0.15px;color:#000;">58.7</span><span style="position:absolute;right:1697px;top:162.89999999999998px;white-space:pre;font:11px 'Liberation Sans',sans-serif;line-height:16px;letter-spacing:-0.15px;color:#000;">-21.6</span><span style="position:absolute;right:1648.3px;top:162.89999999999998px;white-space:pre;font:11px 'Liberation Sans',sans-serif;line-height:16px;letter-spacing:-0.15px;color:#000;">2.9</span><span style="position:absolute;right:1606px;top:162.89999999999998px;white-space:pre;font:11px 'Liberation Sans',sans-serif;line-height:16px;letter-spacing:-0.15px;color:#000;">1.7</span><span style="position:absolute;right:1523px;top:162.89999999999998px;white-space:pre;font:11px 'Liberation Sans',sans-serif;line-height:16px;letter-spacing:-0.15px;color:#000;">36597976.949</span><span style="position:absolute;right:1469px;top:162.89999999999998px;white-space:pre;font:11px 'Liberation Sans',sans-serif;line-height:16px;letter-spacing:-0.15px;color:#000;">-50.11</span><span style="position:absolute;right:1417.2px;top:162.89999999999998px;white-space:pre;font:11px 'Liberation Sans',sans-serif;line-height:16px;letter-spacing:-0.15px;color:#000;">11.13</span><div style="position:absolute;left:6px;top:179.39999999999998px;width:611px;height:17px;background:#f0f0ff"></div><span style="position:absolute;right:1964.7px;top:179.89999999999998px;white-space:pre;font:11px 'Liberation Sans',sans-serif;line-height:16px;letter-spacing:-0.15px;color:#000;">7 *</span><span style="position:absolute;right:1930px;top:179.89999999999998px;white-space:pre;font:11px 'Liberation Sans',sans-serif;line-height:16px;letter-spacing:-0.15px;color:#000;">14</span><span style="position:absolute;right:1872.2px;top:179.89999999999998px;white-space:pre;font:11px 'Liberation Sans',sans-serif;line-height:16px;letter-spacing:-0.15px;color:#000;">GLN L1</span><span style="position:absolute;left:123.90000000000009px;width:80px;text-align:center;top:179.89999999999998px;white-space:pre;font:11px 'Liberation Sans',sans-serif;line-height:16px;letter-spacing:-0.15px;color:#000;">-</span><span style="position:absolute;right:1785.3px;top:179.89999999999998px;white-space:pre;font:11px 'Liberation Sans',sans-serif;line-height:16px;letter-spacing:-0.15px;color:#000;">5</span><span style="position:absolute;right:1741.4px;top:179.89999999999998px;white-space:pre;font:11px 'Liberation Sans',sans-serif;line-height:16px;letter-spacing:-0.15px;color:#000;">23.8</span><span style="position:absolute;right:1697px;top:179.89999999999998px;white-space:pre;font:11px 'Liberation Sans',sans-serif;line-height:16px;letter-spacing:-0.15px;color:#000;">-29.8</span><span style="position:absolute;right:1648.3px;top:179.89999999999998px;white-space:pre;font:11px 'Liberation Sans',sans-serif;line-height:16px;letter-spacing:-0.15px;color:#000;">6.1</span><span style="position:absolute;right:1606px;top:179.89999999999998px;white-space:pre;font:11px 'Liberation Sans',sans-serif;line-height:16px;letter-spacing:-0.15px;color:#000;">2.9</span><span style="position:absolute;right:1523px;top:179.89999999999998px;white-space:pre;font:11px 'Liberation Sans',sans-serif;line-height:16px;letter-spacing:-0.15px;color:#000;">22128214.638</span><span style="position:absolute;right:1469px;top:179.89999999999998px;white-space:pre;font:11px 'Liberation Sans',sans-serif;line-height:16px;letter-spacing:-0.15px;color:#000;">-706.23</span><span style="position:absolute;right:1417.2px;top:179.89999999999998px;white-space:pre;font:11px 'Liberation Sans',sans-serif;line-height:16px;letter-spacing:-0.15px;color:#000;">10.90</span><span style="position:absolute;right:1970.7px;top:196.89999999999998px;white-space:pre;font:11px 'Liberation Sans',sans-serif;line-height:16px;letter-spacing:-0.15px;color:#000;">7</span><span style="position:absolute;right:1930px;top:196.89999999999998px;white-space:pre;font:11px 'Liberation Sans',sans-serif;line-height:16px;letter-spacing:-0.15px;color:#000;">29</span><span style="position:absolute;right:1872.2px;top:196.89999999999998px;white-space:pre;font:11px 'Liberation Sans',sans-serif;line-height:16px;letter-spacing:-0.15px;color:#000;">GAL E1</span><span style="position:absolute;left:123.90000000000009px;width:80px;text-align:center;top:196.89999999999998px;white-space:pre;font:11px 'Liberation Sans',sans-serif;line-height:16px;letter-spacing:-0.15px;color:#000;">-</span><span style="position:absolute;right:1785.3px;top:196.89999999999998px;white-space:pre;font:11px 'Liberation Sans',sans-serif;line-height:16px;letter-spacing:-0.15px;color:#000;">7</span><span style="position:absolute;right:1741.4px;top:196.89999999999998px;white-space:pre;font:11px 'Liberation Sans',sans-serif;line-height:16px;letter-spacing:-0.15px;color:#000;">47.7</span><span style="position:absolute;right:1697px;top:196.89999999999998px;white-space:pre;font:11px 'Liberation Sans',sans-serif;line-height:16px;letter-spacing:-0.15px;color:#000;">-41.4</span><span style="position:absolute;right:1648.3px;top:196.89999999999998px;white-space:pre;font:11px 'Liberation Sans',sans-serif;line-height:16px;letter-spacing:-0.15px;color:#000;">3.3</span><span style="position:absolute;right:1606px;top:196.89999999999998px;white-space:pre;font:11px 'Liberation Sans',sans-serif;line-height:16px;letter-spacing:-0.15px;color:#000;">4.3</span><span style="position:absolute;right:1523px;top:196.89999999999998px;white-space:pre;font:11px 'Liberation Sans',sans-serif;line-height:16px;letter-spacing:-0.15px;color:#000;">24584338.191</span><span style="position:absolute;right:1469px;top:196.89999999999998px;white-space:pre;font:11px 'Liberation Sans',sans-serif;line-height:16px;letter-spacing:-0.15px;color:#000;">-355.31</span><span style="position:absolute;right:1417.2px;top:196.89999999999998px;white-space:pre;font:11px 'Liberation Sans',sans-serif;line-height:16px;letter-spacing:-0.15px;color:#000;">11.41</span><div style="position:absolute;left:6px;top:213.39999999999998px;width:611px;height:17px;background:#f0f0ff"></div><span style="position:absolute;right:1964.7px;top:213.89999999999998px;white-space:pre;font:11px 'Liberation Sans',sans-serif;line-height:16px;letter-spacing:-0.15px;color:#000;">8 *</span><span style="position:absolute;right:1930px;top:213.89999999999998px;white-space:pre;font:11px 'Liberation Sans',sans-serif;line-height:16px;letter-spacing:-0.15px;color:#000;">26</span><span style="position:absolute;right:1872.2px;top:213.89999999999998px;white-space:pre;font:11px 'Liberation Sans',sans-serif;line-height:16px;letter-spacing:-0.15px;color:#000;">GAL E1</span><span style="position:absolute;left:123.90000000000009px;width:80px;text-align:center;top:213.89999999999998px;white-space:pre;font:11px 'Liberation Sans',sans-serif;line-height:16px;letter-spacing:-0.15px;color:#000;">-</span><span style="position:absolute;right:1785.3px;top:213.89999999999998px;white-space:pre;font:11px 'Liberation Sans',sans-serif;line-height:16px;letter-spacing:-0.15px;color:#000;">8</span><span style="position:absolute;right:1741.4px;top:213.89999999999998px;white-space:pre;font:11px 'Liberation Sans',sans-serif;line-height:16px;letter-spacing:-0.15px;color:#000;">75.9</span><span style="position:absolute;right:1697px;top:213.89999999999998px;white-space:pre;font:11px 'Liberation Sans',sans-serif;line-height:16px;letter-spacing:-0.15px;color:#000;">145.4</span><span style="position:absolute;right:1648.3px;top:213.89999999999998px;white-space:pre;font:11px 'Liberation Sans',sans-serif;line-height:16px;letter-spacing:-0.15px;color:#000;">2.5</span><span style="position:absolute;right:1606px;top:213.89999999999998px;white-space:pre;font:11px 'Liberation Sans',sans-serif;line-height:16px;letter-spacing:-0.15px;color:#000;">3.8</span><span style="position:absolute;right:1523px;top:213.89999999999998px;white-space:pre;font:11px 'Liberation Sans',sans-serif;line-height:16px;letter-spacing:-0.15px;color:#000;">23374849.085</span><span style="position:absolute;right:1469px;top:213.89999999999998px;white-space:pre;font:11px 'Liberation Sans',sans-serif;line-height:16px;letter-spacing:-0.15px;color:#000;">134.27</span><span style="position:absolute;right:1417.2px;top:213.89999999999998px;white-space:pre;font:11px 'Liberation Sans',sans-serif;line-height:16px;letter-spacing:-0.15px;color:#000;">11.84</span><div style="position:absolute;left:0px;top:0px;width:617px;height:25px;background:linear-gradient(#ffffff 0,#ffffff 50%,#f7f8fa 55%,#f1f2f4 100%)"></div><div style="position:absolute;left:0px;top:24.5px;width:617px;height:1px;background:#d5d5d5"></div><div style="position:absolute;left:2.5px;top:2px;width:34px;height:23px;box-sizing:border-box;border:1px solid #96d9f9;border-top:none;background:linear-gradient(#f2f9fc 0,#e3f4fc 50%,#d8effc 55%,#bde6fd 100%)"></div><svg style="position:absolute;left:15px;top:3px;" width="8" height="5" viewBox="0 0 8 5"><path d="M0.5 4.5L4 1L7.5 4.5Z" fill="#3c5e72"/></svg><div style="position:absolute;left:75px;top:2px;width:1px;height:22px;background:linear-gradient(#fff,#e0e3e8)"></div><div style="position:absolute;left:133px;top:2px;width:1px;height:22px;background:linear-gradient(#fff,#e0e3e8)"></div><div style="position:absolute;left:177px;top:2px;width:1px;height:22px;background:linear-gradient(#fff,#e0e3e8)"></div><div style="position:absolute;left:220px;top:2px;width:1px;height:22px;background:linear-gradient(#fff,#e0e3e8)"></div><div style="position:absolute;left:264px;top:2px;width:1px;height:22px;background:linear-gradient(#fff,#e0e3e8)"></div><div style="position:absolute;left:308px;top:2px;width:1px;height:22px;background:linear-gradient(#fff,#e0e3e8)"></div><div style="position:absolute;left:357px;top:2px;width:1px;height:22px;background:linear-gradient(#fff,#e0e3e8)"></div><div style="position:absolute;left:399px;top:2px;width:1px;height:22px;background:linear-gradient(#fff,#e0e3e8)"></div><div style="position:absolute;left:482px;top:2px;width:1px;height:22px;background:linear-gradient(#fff,#e0e3e8)"></div><div style="position:absolute;left:536px;top:2px;width:1px;height:22px;background:linear-gradient(#fff,#e0e3e8)"></div><div style="position:absolute;left:588px;top:2px;width:1px;height:22px;background:linear-gradient(#fff,#e0e3e8)"></div><span style="position:absolute;left:-21.40000000000009px;width:80px;text-align:center;top:6px;white-space:pre;font:11px 'Liberation Sans',sans-serif;line-height:16px;letter-spacing:-0.15px;color:#000;">SVID</span><span style="position:absolute;left:16.700000000000045px;width:80px;text-align:center;top:6px;white-space:pre;font:11px 'Liberation Sans',sans-serif;line-height:16px;letter-spacing:-0.15px;color:#000;">Chan</span><span style="position:absolute;right:1873px;top:6px;white-space:pre;font:11px 'Liberation Sans',sans-serif;line-height:16px;letter-spacing:-0.15px;color:#000;">Type</span><span style="position:absolute;left:119.70000000000005px;width:80px;text-align:center;top:6px;white-space:pre;font:11px 'Liberation Sans',sans-serif;line-height:16px;letter-spacing:-0.15px;color:#000;">Echo</span><span style="position:absolute;right:1785.7px;top:6px;white-space:pre;font:11px 'Liberation Sans',sans-serif;line-height:16px;letter-spacing:-0.15px;color:#000;">PRN</span><span style="position:absolute;right:1741.7px;top:6px;white-space:pre;font:11px 'Liberation Sans',sans-serif;line-height:16px;letter-spacing:-0.15px;color:#000;">Elev</span><span style="position:absolute;right:1697.8px;top:6px;white-space:pre;font:11px 'Liberation Sans',sans-serif;line-height:16px;letter-spacing:-0.15px;color:#000;">Azim</span><span style="position:absolute;right:1649px;top:6px;white-space:pre;font:11px 'Liberation Sans',sans-serif;line-height:16px;letter-spacing:-0.15px;color:#000;">Tropo</span><span style="position:absolute;right:1606.8px;top:6px;white-space:pre;font:11px 'Liberation Sans',sans-serif;line-height:16px;letter-spacing:-0.15px;color:#000;">Iono</span><span style="position:absolute;right:1523.7px;top:6px;white-space:pre;font:11px 'Liberation Sans',sans-serif;line-height:16px;letter-spacing:-0.15px;color:#000;">Pseudorange</span><span style="position:absolute;right:1469.7px;top:6px;white-space:pre;font:11px 'Liberation Sans',sans-serif;line-height:16px;letter-spacing:-0.15px;color:#000;">PR rate</span><span style="position:absolute;right:1418.2px;top:6px;white-space:pre;font:11px 'Liberation Sans',sans-serif;line-height:16px;letter-spacing:-0.15px;color:#000;">Power</span><div style="position:absolute;left:594px;top:6px;width:22px;overflow:hidden;height:16px"><span style="position:absolute;left:0;top:0;white-space:pre;font:11px 'Liberation Sans',sans-serif;line-height:16px;letter-spacing:-0.15px;color:#000;">Clock</span></div><div style="position:absolute;left:617px;top:2px;width:17px;height:222px;background:linear-gradient(90deg,#e3e3e3,#f2f2f2 40%,#f7f7f7)"></div><svg style="position:absolute;left:621px;top:8px;" width="9" height="6" viewBox="0 0 9 6"><path d="M0.5 5 L4.5 1 L8.5 5Z" fill="#333"/></svg><svg style="position:absolute;left:621px;top:214px;" width="9" height="6" viewBox="0 0 9 6"><path d="M0.5 1 L4.5 5 L8.5 1Z" fill="#333"/></svg><div style="position:absolute;left:618px;top:20px;width:14px;height:72px;border:1px solid #979797;border-radius:2px;background:linear-gradient(90deg,#f3f3f3 0,#e8e8e9 45%,#cfcfd1 55%,#dcdcde 100%);box-sizing:border-box"></div><div style="position:absolute;left:621px;top:52px;width:7px;height:1px;background:linear-gradient(90deg,#3a3a3a,#8a8a8a)"></div><div style="position:absolute;left:621px;top:53px;width:7px;height:1px;background:rgba(255,255,255,.8)"></div><div style="position:absolute;left:621px;top:55px;width:7px;height:1px;background:linear-gradient(90deg,#3a3a3a,#8a8a8a)"></div><div style="position:absolute;left:621px;top:56px;width:7px;height:1px;background:rgba(255,255,255,.8)"></div><div style="position:absolute;left:621px;top:58px;width:7px;height:1px;background:linear-gradient(90deg,#3a3a3a,#8a8a8a)"></div><div style="position:absolute;left:621px;top:59px;width:7px;height:1px;background:rgba(255,255,255,.8)"></div><div style="position:absolute;left:0px;top:224px;width:634px;height:18px;background:#f0f0f0"></div><div style="position:absolute;left:0px;top:224px;width:617px;height:18px;background:linear-gradient(#e3e3e3,#f2f2f2 40%,#f7f7f7)"></div><svg style="position:absolute;left:7px;top:228px;" width="6" height="9" viewBox="0 0 6 9"><path d="M5 0.5 L1 4.5 L5 8.5Z" fill="#333"/></svg><svg style="position:absolute;left:604px;top:228px;" width="6" height="9" viewBox="0 0 6 9"><path d="M1 0.5 L5 4.5 L1 8.5Z" fill="#333"/></svg><div style="position:absolute;left:20px;top:225px;width:375px;height:15px;border:1px solid #979797;border-radius:2px;background:linear-gradient(#f3f3f3 0,#e8e8e9 45%,#cfcfd1 55%,#dcdcde 100%);box-sizing:border-box"></div><div style="position:absolute;left:203px;top:229px;width:1px;height:7px;background:linear-gradient(#3a3a3a,#8a8a8a)"></div><div style="position:absolute;left:204px;top:229px;width:1px;height:7px;background:rgba(255,255,255,.8)"></div><div style="position:absolute;left:206px;top:229px;width:1px;height:7px;background:linear-gradient(#3a3a3a,#8a8a8a)"></div><div style="position:absolute;left:207px;top:229px;width:1px;height:7px;background:rgba(255,255,255,.8)"></div><div style="position:absolute;left:209px;top:229px;width:1px;height:7px;background:linear-gradient(#3a3a3a,#8a8a8a)"></div><div style="position:absolute;left:210px;top:229px;width:1px;height:7px;background:rgba(255,255,255,.8)"></div><div style="position:absolute;left:630px;top:237px;width:2px;height:2px;background:#bfbfbf"></div><div style="position:absolute;left:627px;top:237px;width:2px;height:2px;background:#bfbfbf"></div><div style="position:absolute;left:630px;top:234px;width:2px;height:2px;background:#bfbfbf"></div><div style="position:absolute;left:624px;top:237px;width:2px;height:2px;background:#bfbfbf"></div><div style="position:absolute;left:627px;top:234px;width:2px;height:2px;background:#bfbfbf"></div><div style="position:absolute;left:630px;top:231px;width:2px;height:2px;background:#bfbfbf"></div></div></div></div></div><div style="position:absolute;left:358px;top:591px;width:702px;height:428px;background:#444;border-radius:6px 6px 0 0"></div><div style="position:absolute;left:359px;top:592px;width:700px;height:426px;background:linear-gradient(#bfcddb 0px,#cbd8e6 14px,#d7e4f2 30px,#d7e4f2 100%);border-radius:5px 5px 0 0;box-shadow:inset 1px 1px 0 0 #e3edf7;"><svg style="position:absolute;left:9px;top:10px" width="15" height="13" viewBox="0 0 15 13"><rect x="0.5" y="0.5" width="14" height="12" fill="#f4f4f4" stroke="#8a8f98"/><rect x="0" y="0" width="15" height="1" fill="#6f7782"/><rect x="1.5" y="2" width="5.5" height="8.5" fill="#2f8f86"/><rect x="1.5" y="2" width="5.5" height="3" fill="#5573a8" opacity="0.7"/><rect x="11.6" y="2" width="1.2" height="3.5" fill="#1a43a8"/><rect x="8.5" y="9" width="3" height="1.5" fill="#c9c9c9"/></svg><span style="position:absolute;left:29px;top:11px;font:12px 'Liberation Sans',sans-serif;color:#434e66;white-space:pre;letter-spacing:-0.1px">Ground Track</span><div style="position:absolute;left:660px;top:9px;width:29px;height:15px;border:1px solid #8e9dbd;border-radius:3px;background:linear-gradient(#cddbea 0,#c6d5e6 48%,#bccde0 52%,#cfdcec 100%);box-shadow:inset 0 0 0 1px rgba(255,255,255,.45)"><svg style="position:absolute;left:9px;top:3px" width="12" height="11" viewBox="0 0 12 11"><path d="M0.5 0.7 L3.9 0.7 L5.5 2.8 L7.1 0.7 L10.5 0.7 L7.4 4.9 L10.5 9.3 L7.1 9.3 L5.5 7.1 L3.9 9.3 L0.5 9.3 L3.6 4.9 Z" fill="#f8f8f8" stroke="#454b66" stroke-width="1" stroke-linejoin="round"/></svg></div><div style="position:absolute;left:627px;top:9px;width:29px;height:15px;border:1px solid #8e9dbd;border-radius:3px;background:linear-gradient(#cddbea 0,#c6d5e6 48%,#bccde0 52%,#cfdcec 100%);box-shadow:inset 0 0 0 1px rgba(255,255,255,.45)"><svg style="position:absolute;left:9px;top:3px" width="12" height="11" viewBox="0 0 12 11"><rect x="0.5" y="0.5" width="10" height="9" rx="1" fill="#f6f6f6" stroke="#454b66"/><rect x="3.5" y="3.5" width="4" height="2" fill="#a9bbd3" stroke="#454b66"/></svg></div><div style="position:absolute;left:594px;top:9px;width:29px;height:15px;border:1px solid #8e9dbd;border-radius:3px;background:linear-gradient(#cddbea 0,#c6d5e6 48%,#bccde0 52%,#cfdcec 100%);box-shadow:inset 0 0 0 1px rgba(255,255,255,.45)"><div style="position:absolute;left:9px;top:7px;width:9px;height:3px;background:#f6f6f6;border:1px solid #454b66;border-radius:1px"></div></div><div style="position:absolute;left:7px;top:29px;width:686px;height:390px;box-sizing:border-box;border:1px solid;border-color:#7f8893 #fff #fff #7f8893;"><div style="position:absolute;left:0;top:0;right:0;bottom:0;border:1px solid;border-color:#696969 #e3e3e3 #e3e3e3 #696969;overflow:hidden"><div style="position:absolute;left:0px;top:0px;width:700px;height:400px;background:#f0f0f0"></div><span style="position:absolute;left:7.600000000000023px;top:6.7000000000000455px;white-space:pre;font:11px 'Liberation Sans',sans-serif;line-height:16px;letter-spacing:-0.12px;color:#000;">Displayed satellite types</span><div style="position:absolute;left:129px;top:5px;width:71px;height:21px;box-sizing:border-box;border:1px solid #707070;border-radius:3px;background:linear-gradient(#f2f2f2 0,#ebebeb 48%,#dddddd 52%,#cfcfcf 100%);box-shadow:inset 0 0 0 1px #fcfcfc"></div><span style="position:absolute;left:133.5px;top:8px;white-space:pre;font:11px 'Liberation Sans',sans-serif;line-height:16px;letter-spacing:-0.12px;color:#000;">All</span><svg style="position:absolute;left:187px;top:14px;" width="7" height="4" viewBox="0 0 7 4"><path d="M0 0H7L3.5 4Z" fill="#000"/></svg><svg style="position:absolute;left:0px;top:31px" width="683" height="355" viewBox="368 654 683 355"><rect x="368" y="654" width="683" height="355" fill="#000"/><path d="M423.4 696.2L426.7 691.6L432.4 689.9L437.8 687.8L444.0 686.4L452.1 687.3L459.2 688.0L466.4 688.7L471.8 689.3L478.9 690.4L483.4 689.5L489.6 688.7L495.0 688.0L500.4 689.2L507.5 689.2L514.7 690.6L520.1 691.8L527.2 692.3L530.8 691.2L536.2 691.8L541.5 692.4L547.8 691.6L552.3 693.0L553.2 690.4L551.4 686.6L554.9 685.2L558.5 687.8L560.3 689.7L563.9 690.4L567.5 693.0L570.1 691.2L571.4 689.0L576.8 689.3L578.4 691.6L576.6 694.7L570.5 695.2L568.4 696.9L565.7 698.6L561.2 699.3L557.6 701.4L554.9 705.0L554.6 707.9L558.0 711.0L563.0 711.0L567.5 712.8L571.9 714.0L576.4 714.3L576.9 717.9L579.1 720.0L581.2 721.0L583.0 719.3L582.7 715.7L586.2 713.1L586.8 710.5L583.6 707.9L585.4 705.0L584.5 701.9L589.8 701.9L594.3 703.3L598.8 704.2L599.7 707.1L602.9 708.8L605.9 707.9L607.7 705.4L609.5 707.1L612.5 709.7L614.9 712.8L618.4 714.5L621.7 716.2L623.8 718.8L622.6 720.5L617.6 722.6L611.3 722.6L605.0 722.8L601.5 724.8L597.9 727.7L600.6 726.5L605.0 724.6L609.0 725.0L607.2 726.7L608.1 728.6L610.4 730.0L614.3 730.5L616.1 729.0L615.2 730.8L610.4 732.6L606.5 734.1L605.6 732.6L608.3 730.8L604.5 731.7L603.2 732.6L599.7 733.6L597.5 735.2L597.5 736.7L598.8 737.2L596.4 737.7L592.5 738.8L591.4 739.6L590.7 741.5L589.3 742.9L588.4 745.0L587.5 742.4L587.1 745.1L588.2 746.2L588.8 748.4L586.6 749.4L584.5 750.8L582.1 752.2L579.4 754.1L578.6 756.2L578.6 757.9L580.0 760.6L580.9 763.6L580.3 765.6L578.7 765.8L577.7 763.9L576.0 761.7L575.9 759.3L574.1 757.5L571.4 758.1L569.3 756.9L566.2 757.0L563.9 757.2L564.2 758.9L562.1 758.9L559.8 758.4L556.7 758.1L554.4 758.6L551.4 760.5L549.8 762.4L550.1 764.8L549.0 768.7L549.0 771.0L550.1 773.4L551.7 776.0L553.7 777.2L555.5 777.9L558.5 777.2L560.8 776.5L562.1 773.9L563.0 772.9L566.2 772.0L568.5 772.3L567.5 775.3L566.9 777.9L566.0 780.8L565.1 782.0L567.5 782.0L570.5 781.6L573.4 782.2L575.2 783.4L574.6 786.0L574.4 788.5L574.1 790.4L575.5 792.0L576.9 793.5L579.1 794.0L581.2 792.8L583.0 793.0L584.8 794.0L586.2 794.6L586.6 795.3L588.0 793.2L588.9 790.9L590.7 790.3L593.4 789.4L595.7 787.8L596.4 789.1L595.2 790.1L595.9 791.6L596.6 790.4L598.8 788.4L601.5 789.7L602.3 790.9L605.9 790.9L608.6 791.5L611.7 790.8L613.3 790.9L612.0 791.8L614.9 793.2L615.8 794.6L618.4 795.8L621.1 798.5L624.7 799.0L627.8 799.4L631.0 801.1L632.8 802.5L633.7 806.1L634.5 808.2L633.7 809.5L637.2 810.1L639.0 810.4L643.5 811.8L645.3 813.7L648.0 814.0L652.4 814.2L655.1 815.7L657.8 817.6L660.7 818.3L661.6 821.3L661.4 824.4L659.1 827.3L657.3 829.5L654.9 831.6L654.2 835.0L654.1 839.3L652.8 842.8L650.8 846.6L649.0 848.5L646.2 848.8L644.0 849.3L641.2 850.5L638.1 852.8L637.1 854.8L636.9 857.9L634.9 860.0L632.8 862.6L630.6 864.8L628.5 867.4L626.5 869.1L623.8 869.3L620.6 868.4L619.5 867.7L621.5 870.0L621.7 872.1L620.8 874.6L617.6 876.0L613.1 876.2L612.4 878.6L611.7 879.8L607.7 879.6L607.7 881.9L610.0 882.0L608.6 883.1L607.2 884.5L606.8 886.7L603.6 887.7L603.1 889.4L606.1 891.0L603.2 893.6L600.9 895.6L600.2 897.0L601.6 899.3L599.7 899.6L597.3 900.1L597.0 901.8L594.7 901.3L592.0 900.1L590.0 898.4L589.3 895.3L588.8 892.7L590.7 890.1L588.8 889.4L591.6 885.5L593.0 882.2L591.8 881.2L592.0 878.1L592.9 875.5L592.3 873.3L593.8 870.8L595.5 867.4L596.1 863.4L596.3 860.0L597.2 856.6L597.9 852.8L598.1 848.8L598.6 844.5L598.2 840.9L596.3 839.2L592.9 837.3L589.5 835.4L587.5 833.1L585.9 829.9L584.1 826.4L582.7 823.3L581.1 820.9L578.7 819.5L578.6 816.9L580.3 815.1L581.1 813.3L579.3 813.0L579.6 810.9L580.7 809.2L580.9 807.7L582.8 807.0L583.6 804.9L585.7 802.7L585.4 799.7L585.7 797.5L584.6 796.6L583.9 795.1L581.8 793.7L580.3 795.1L580.2 796.6L577.8 795.9L575.7 795.1L574.3 794.0L572.5 792.5L570.7 792.0L570.5 790.1L568.7 788.2L567.3 786.8L565.3 786.5L562.6 785.4L560.1 784.9L557.6 782.9L555.3 781.3L553.5 781.6L551.0 782.2L547.6 781.0L544.7 779.9L541.9 778.4L538.8 777.7L536.2 775.8L535.1 773.9L535.6 772.0L534.4 769.6L531.7 767.0L529.4 765.3L528.3 763.2L526.1 761.8L524.5 760.3L522.7 758.1L521.7 755.5L518.8 754.4L518.8 756.2L520.6 758.4L522.2 760.6L523.6 763.1L524.9 765.3L526.1 767.4L527.9 769.2L527.0 769.8L525.4 767.9L523.3 766.3L523.3 764.4L520.6 763.1L518.6 761.3L519.7 760.0L517.5 758.1L516.1 756.0L515.0 754.1L514.2 752.4L512.2 751.0L510.8 750.3L508.2 749.8L506.6 747.2L505.7 745.7L504.7 744.1L503.6 743.1L502.3 740.8L501.6 739.5L501.8 736.9L501.4 734.6L502.2 732.1L502.2 729.5L501.3 727.4L500.9 725.9L504.0 726.2L505.0 727.7L504.8 725.2L503.4 724.3L500.7 723.1L497.7 722.1L495.4 720.5L495.4 718.8L493.2 717.1L491.1 715.4L490.5 713.6L487.9 712.4L485.2 710.5L483.4 708.8L479.8 708.8L477.1 707.6L473.9 706.2L470.9 705.9L466.4 705.9L463.2 705.0L460.7 704.2L457.8 704.7L456.0 706.2L453.0 707.1L453.3 704.8L455.1 703.8L452.1 704.5L449.7 706.7L448.1 708.5L444.9 710.0L441.7 711.7L438.7 713.3L435.1 714.1L432.0 714.8L429.2 715.2L432.4 713.6L436.0 712.9L438.7 711.9L441.3 710.2L442.6 708.3L439.9 708.3L437.4 707.9L434.2 708.3L434.5 706.2L431.5 706.1L428.8 704.8L427.4 702.8L428.8 701.2L431.0 700.4L435.1 699.9L436.3 698.3L433.3 698.1L429.7 698.1L426.5 698.0L423.4 696.2ZM593.4 674.5L598.8 676.6L601.5 678.2L607.7 678.3L614.9 678.3L620.2 679.2L623.8 681.8L625.6 684.4L626.5 686.9L631.0 688.7L632.8 690.0L628.3 691.2L628.3 693.8L630.1 696.4L631.9 699.0L634.5 701.6L637.2 704.2L641.7 705.4L645.3 706.1L647.1 705.0L648.0 702.4L650.7 700.2L652.4 697.3L656.9 696.1L661.4 694.7L665.9 692.1L672.1 691.6L677.5 691.2L682.9 689.0L680.2 687.5L684.6 686.9L682.9 684.7L685.5 682.6L688.2 680.4L690.0 677.5L687.3 674.9L690.9 672.3L695.4 670.6L701.6 668.9L693.6 668.3L684.6 667.5L673.9 665.9L661.4 665.2L648.9 666.3L638.1 667.1L627.4 667.5L616.7 668.0L611.3 669.2L604.1 670.6L607.7 671.8L600.6 673.2L593.4 674.5ZM680.5 696.2L683.7 697.8L684.1 699.2L687.3 699.7L690.9 700.0L695.4 699.0L699.0 697.8L699.7 696.6L697.2 695.2L694.5 694.7L690.9 695.5L687.3 696.1L684.6 695.0L682.3 695.4L680.5 696.2ZM614.0 694.3L610.4 697.3L607.7 699.0L608.1 701.1L605.0 702.1L601.5 701.1L597.0 699.9L591.6 698.3L585.4 698.5L584.5 696.8L591.6 695.5L593.4 692.4L588.0 690.4L583.6 688.7L577.3 688.8L571.0 688.7L565.7 687.8L563.9 685.2L563.9 682.6L570.1 682.1L577.3 682.3L580.0 684.0L585.4 683.8L590.7 685.6L596.1 686.9L601.5 688.7L603.2 690.7L608.6 692.4L614.0 694.3ZM513.8 688.8L518.3 690.0L521.8 691.1L529.0 690.9L535.3 690.2L541.5 689.5L542.4 688.3L537.9 686.9L536.2 684.4L530.8 683.1L525.4 684.0L520.1 683.0L513.8 683.7L512.0 685.6L516.5 686.4L512.9 687.8L513.8 688.8ZM500.4 685.2L504.0 686.6L508.4 686.1L512.9 684.4L514.7 682.6L510.2 681.4L504.8 681.1L501.3 682.3L500.4 685.2ZM563.0 677.8L570.1 677.8L577.3 677.8L582.7 677.0L585.4 674.9L589.8 673.5L595.2 672.0L602.3 670.4L609.5 668.9L613.1 667.1L605.9 666.3L595.2 666.1L584.5 666.3L573.7 667.3L566.6 668.9L561.2 669.7L563.0 671.4L570.1 672.3L566.6 674.4L570.1 675.7L563.0 677.8ZM551.4 679.2L559.4 680.6L570.1 680.9L580.0 680.6L580.9 679.2L573.7 678.7L564.8 678.7L559.4 677.5L552.3 677.3L551.4 679.2ZM553.2 683.8L557.6 685.2L562.1 684.0L562.5 682.1L556.7 681.6L553.2 682.3L553.2 683.8ZM541.5 686.1L546.9 686.4L550.5 684.9L550.5 682.6L545.1 681.9L540.6 683.5L541.5 686.1ZM514.7 679.7L521.8 680.9L529.0 680.4L534.4 679.7L533.5 678.0L527.2 677.6L520.1 677.1L514.7 678.3L514.7 679.7ZM552.3 674.5L561.2 674.5L567.5 673.2L568.4 670.6L561.2 669.4L554.0 670.2L551.4 672.3L552.3 674.5ZM568.4 699.7L573.7 700.4L579.1 699.0L580.0 696.8L573.7 695.9L569.3 697.3L568.4 699.7ZM617.9 727.1L619.7 724.8L622.0 721.9L624.5 720.3L624.7 722.6L622.9 723.4L627.4 724.1L628.8 725.7L629.7 727.4L628.3 728.8L626.5 727.7L624.2 728.4L621.1 727.2L617.9 727.1ZM572.1 771.5L574.6 769.8L577.7 769.2L580.9 769.6L584.5 770.8L587.7 772.5L591.1 774.2L588.9 774.9L585.2 774.9L584.5 773.6L581.8 772.0L578.2 771.1L576.4 770.3L574.1 771.0L572.1 771.5ZM590.9 777.5L592.9 774.9L596.1 774.9L599.1 775.6L601.6 777.2L599.7 777.7L596.6 778.0L594.3 777.9L590.9 777.5ZM583.9 777.7L587.5 778.0L585.9 778.5L583.9 777.7ZM603.8 777.5L606.5 777.7L605.0 778.3L603.8 777.5ZM494.5 721.7L499.5 722.8L503.1 725.5L500.7 725.5L496.8 723.4L494.5 721.7ZM486.1 716.0L488.2 716.6L489.3 719.3L487.0 717.9L486.1 716.0ZM447.6 709.5L451.5 710.0L449.4 711.0L447.6 709.5ZM547.2 716.6L550.5 722.2L551.7 720.5L549.0 717.1L547.2 716.6ZM500.4 695.2L507.5 697.3L512.9 695.5L509.3 693.8L504.0 694.2L500.4 695.2ZM514.7 704.2L520.1 704.2L525.4 701.6L528.1 701.2L523.6 702.4L518.3 702.4L514.7 704.2ZM714.0 747.2L712.6 745.8L710.8 745.1L708.1 745.5L708.3 743.1L707.0 742.4L708.1 740.0L708.4 737.7L707.5 735.2L709.7 733.9L713.6 734.1L717.7 734.3L720.8 734.5L721.9 732.2L722.0 730.0L720.1 728.1L717.7 726.9L715.6 726.0L718.6 725.2L721.3 725.3L721.0 723.6L723.6 724.3L724.4 723.6L726.7 722.8L727.0 721.4L729.9 720.7L731.5 719.7L732.6 717.9L734.7 717.2L736.9 716.9L739.2 716.9L739.7 715.7L738.8 713.6L738.5 711.9L739.4 710.9L742.8 709.8L742.4 711.7L743.3 712.4L741.7 714.1L741.5 714.8L743.5 715.7L743.7 716.2L746.0 715.7L748.3 715.5L749.6 716.4L753.2 715.7L756.7 714.8L758.9 715.5L759.8 714.7L761.6 713.8L761.6 711.4L762.8 710.0L765.1 710.9L767.5 710.7L767.7 708.8L766.0 708.1L766.0 707.3L769.6 706.6L774.1 706.7L776.8 705.9L775.0 705.0L770.5 705.2L766.9 705.9L764.8 706.1L762.5 704.8L762.5 703.0L761.9 701.1L764.3 699.5L767.8 697.6L769.3 696.8L767.3 695.9L763.9 695.9L762.3 697.6L761.0 699.3L758.0 700.4L755.8 701.7L754.8 703.8L754.9 704.8L757.3 705.7L756.7 707.3L754.1 708.3L753.7 710.2L753.2 712.3L750.5 712.6L749.4 713.8L747.1 713.8L746.7 712.4L745.3 710.2L744.0 707.9L743.0 706.6L741.2 707.6L738.8 709.0L736.5 709.3L734.0 707.9L733.1 705.9L732.9 703.8L733.3 702.1L735.6 701.1L739.2 699.9L741.9 698.6L744.6 697.3L746.4 695.5L748.2 693.5L750.3 692.1L753.2 690.7L756.2 689.5L759.8 688.7L763.4 688.0L767.8 686.9L770.5 686.9L774.1 686.9L777.7 687.6L779.5 688.1L776.8 689.0L780.4 689.2L783.9 689.7L788.4 690.0L792.9 691.4L796.5 692.6L797.7 694.2L795.6 695.2L792.0 695.4L786.6 694.7L783.0 694.5L785.7 695.9L786.3 698.0L789.3 699.0L791.6 698.5L792.3 697.6L795.9 698.0L795.2 696.2L799.1 694.9L802.4 695.2L803.1 693.3L802.4 691.2L806.3 691.8L806.3 694.0L809.3 694.0L809.5 692.6L813.5 691.9L818.8 691.2L821.5 691.6L826.0 691.1L830.4 691.2L833.1 689.5L838.5 689.9L842.1 690.7L846.0 691.4L847.4 690.0L843.9 689.0L844.2 686.9L846.5 685.9L848.0 683.7L851.9 683.5L854.2 684.9L853.7 687.3L854.1 689.9L855.8 692.1L852.5 694.2L852.8 695.2L856.9 693.8L858.2 691.6L856.9 690.4L856.0 687.5L857.8 684.7L859.4 684.7L862.6 685.4L864.4 684.5L868.0 684.9L869.8 685.7L872.5 686.6L870.7 684.7L868.4 682.6L874.3 682.1L878.7 681.4L879.6 680.1L885.0 679.0L892.2 678.2L899.3 677.6L904.7 676.6L910.6 675.4L914.5 676.1L917.2 677.1L923.5 677.1L927.1 678.3L925.3 680.1L919.9 681.4L924.4 682.1L927.9 682.5L936.0 683.1L942.3 683.5L945.8 682.3L950.3 682.6L953.0 683.8L955.7 686.6L959.3 687.1L961.9 686.1L967.3 686.1L970.9 686.2L974.5 684.5L978.0 684.0L985.2 684.7L991.5 685.0L996.8 687.1L1003.1 686.8L1008.5 687.5L1010.2 689.2L1014.7 689.3L1019.2 689.3L1024.6 688.8L1029.0 690.0L1029.9 688.7L1035.3 689.0L1040.7 689.7L1046.0 690.6M1046.0 697.3L1043.3 698.0L1040.7 697.6L1042.1 698.6L1044.8 700.4L1044.8 701.7L1040.7 701.6L1037.1 702.4L1033.5 704.2L1029.0 705.9L1025.4 705.0L1021.5 705.2L1018.3 706.2L1016.0 707.1L1016.0 709.0L1013.8 709.7L1015.6 711.6L1014.9 712.4L1013.5 714.1L1010.8 715.9L1009.9 717.6L1007.6 718.1L1006.3 720.0L1004.3 721.4L1003.1 719.3L1002.5 716.2L1002.7 712.8L1004.5 710.4L1006.7 709.2L1009.9 707.3L1012.9 705.5L1016.5 703.3L1017.4 701.7L1013.8 703.0L1010.8 702.8L1008.8 702.8L1004.9 703.1L1002.5 705.0L1000.4 706.7L996.8 707.8L994.1 706.9L990.6 706.6L987.0 707.1L982.5 707.1L978.9 707.3L976.2 708.6L973.6 710.7L971.2 712.4L969.1 714.8L966.9 715.2L969.5 716.4L971.8 716.6L974.8 716.4L976.8 717.6L975.7 720.2L975.4 723.1L974.8 725.7L972.7 727.9L970.9 730.0L968.2 732.1L965.5 734.3L962.3 735.5L960.1 734.8L958.0 736.2L956.2 737.7L955.7 738.9L953.0 740.3L952.1 741.5L953.5 742.7L955.3 745.1L955.7 747.2L955.1 748.6L953.0 749.3L950.5 750.0L950.0 748.1L950.8 745.8L949.8 744.3L948.0 744.1L948.2 742.6L948.0 741.0L946.4 740.5L944.0 741.0L941.7 742.2L941.4 741.0L942.6 739.5L940.8 738.8L937.8 740.7L935.1 741.7L934.6 742.9L936.5 744.1L937.2 745.1L940.1 744.1L943.0 744.8L942.8 745.8L939.9 746.9L937.8 748.2L937.4 749.4L939.2 751.0L940.3 753.1L941.9 754.6L940.5 756.5L942.3 757.5L941.4 759.6L939.6 762.4L938.1 764.4L936.4 766.5L934.2 768.4L932.1 769.8L928.8 770.5L927.1 771.0L924.0 772.0L921.7 772.5L921.3 774.2L920.4 774.1L920.3 772.2L918.1 772.0L916.3 772.7L914.9 774.2L913.3 776.1L913.3 777.7L914.5 779.1L916.0 780.4L917.7 781.6L919.0 783.4L919.5 786.0L919.5 788.5L918.6 789.9L916.3 791.1L914.9 791.6L914.5 793.0L912.2 794.2L911.5 792.8L911.8 791.5L910.1 791.1L908.3 790.3L907.7 788.5L905.6 787.5L904.5 786.1L903.4 786.0L902.7 787.7L902.4 789.4L901.5 791.1L901.6 793.2L902.9 794.6L903.8 796.6L904.7 797.5L906.5 798.4L907.9 799.7L909.0 801.5L909.2 803.5L909.7 805.2L910.4 806.8L909.2 807.0L907.4 805.6L905.2 804.4L904.2 802.5L903.6 800.2L903.4 798.4L902.4 797.5L900.8 795.6L899.9 794.9L900.0 792.8L900.6 790.9L900.6 788.5L899.7 786.0L899.0 783.4L898.6 781.1L897.2 779.9L895.7 780.8L894.5 782.0L892.7 781.6L893.2 779.1L892.5 776.8L891.3 775.1L889.8 773.7L888.6 772.3L888.2 770.6L886.8 770.3L885.5 771.3L883.6 771.7L881.4 771.8L879.6 772.3L879.3 773.9L877.9 774.9L876.1 775.8L874.3 777.3L872.5 779.1L871.2 780.6L869.4 781.5L867.7 782.3L867.3 784.2L867.7 786.3L867.1 788.5L866.8 790.6L866.8 791.6L865.3 793.2L864.1 793.9L862.6 795.3L861.4 794.2L860.3 792.0L859.2 789.4L858.0 787.2L857.1 784.6L856.0 782.2L855.1 779.6L854.4 777.2L854.2 774.8L854.1 772.7L853.7 771.5L853.0 772.9L851.0 773.6L849.2 773.0L847.4 770.8L849.6 769.8L847.8 769.6L846.0 768.6L844.6 766.8L843.1 765.6L840.3 765.6L836.7 765.8L834.0 766.0L831.0 765.5L828.1 765.1L826.5 764.4L825.6 762.7L823.3 763.2L821.5 763.4L819.2 762.7L817.0 761.3L815.2 759.6L814.3 758.1L812.6 757.2L811.1 757.0L809.9 757.9L810.4 759.6L811.3 761.3L813.1 762.9L813.8 764.1L814.0 765.8L815.1 766.3L815.8 764.3L816.3 766.2L816.0 767.2L817.9 767.5L820.6 767.7L822.9 765.8L824.4 764.3L825.1 765.3L825.4 767.4L827.4 768.4L829.2 768.7L831.0 770.5L830.1 772.3L828.7 774.1L827.4 775.6L826.5 776.8L825.1 778.2L822.8 779.1L820.6 779.9L817.9 781.1L815.2 782.9L812.6 784.2L809.9 785.1L807.2 786.1L804.5 787.2L802.0 787.3L801.3 786.1L800.6 783.7L800.4 781.6L799.5 779.6L797.9 777.3L796.1 775.1L794.3 773.0L793.6 770.8L792.3 768.2L790.7 766.3L789.7 764.4L788.0 762.2L786.6 760.6L786.3 758.6L785.5 760.6L785.2 761.3L783.9 760.1L782.7 758.4L782.1 757.5L781.8 755.3L784.5 755.6L785.5 755.1L786.4 753.2L787.0 751.7L788.0 749.6L788.2 747.6L788.8 746.0L787.0 746.2L784.8 746.7L782.7 747.2L780.4 746.2L778.7 745.8L777.3 746.9L775.0 746.0L773.2 745.8L772.7 744.1L771.1 742.9L772.3 741.7L770.9 741.2L770.9 740.0L771.9 739.5L774.1 739.5L776.2 739.1L776.2 738.3L778.6 738.3L780.9 737.9L783.6 736.9L786.6 736.7L788.4 737.6L790.2 738.3L792.9 738.8L795.6 738.6L798.2 737.7L798.4 736.0L796.1 734.8L793.4 733.1L791.1 732.2L789.8 731.2L791.6 730.3L792.9 729.1L794.3 727.9L792.0 727.9L789.8 728.8L787.2 729.3L786.6 730.5L789.1 731.0L787.5 731.7L785.2 732.6L783.8 732.4L782.1 731.0L784.1 730.0L781.8 729.6L780.4 728.8L778.9 729.3L777.3 730.8L775.5 732.2L775.2 733.9L773.9 735.3L774.1 736.9L775.7 738.1L774.4 738.6L772.8 738.8L771.4 739.5L770.5 738.9L767.8 738.8L766.8 739.6L765.7 740.1L764.8 739.5L764.4 740.7L765.5 741.7L764.8 742.4L766.9 743.4L766.9 744.3L765.5 744.1L765.5 745.0L764.8 746.2L764.1 746.2L763.0 745.8L762.1 744.5L763.0 743.2L761.6 742.4L761.0 741.0L759.6 740.3L758.7 738.6L758.9 737.2L757.6 736.2L755.3 735.2L753.0 734.1L751.2 732.9L750.5 731.7L749.6 731.2L748.7 731.9L748.3 730.7L746.4 730.8L746.0 731.9L746.2 733.1L747.8 733.9L748.7 735.2L749.4 736.2L751.2 737.0L752.6 737.0L752.6 737.9L754.8 738.6L756.9 739.8L756.9 740.5L755.8 739.8L754.4 739.5L753.7 740.7L754.6 741.9L753.7 742.6L753.0 743.8L752.1 743.8L752.3 742.4L752.6 741.2L751.9 740.1L750.5 739.3L749.4 738.9L747.8 738.3L746.0 737.4L744.6 736.2L743.0 735.3L742.4 734.1L741.5 733.3L739.7 732.7L738.3 733.6L737.2 733.9L735.6 735.0L733.7 734.6L732.1 734.5L730.4 734.5L729.4 735.5L729.7 737.0L727.9 737.9L725.6 738.6L724.4 740.0L723.5 741.2L724.4 742.4L723.1 743.2L722.6 744.5L720.8 745.5L719.9 745.8L717.7 746.0L715.9 746.0L714.0 747.2M713.4 747.6L714.5 747.4L715.9 748.6L718.6 748.4L720.4 748.8L722.2 747.9L724.5 746.9L726.7 746.2L729.4 745.7L732.9 745.8L736.5 745.5L739.7 745.5L741.5 745.0L742.4 745.8L743.9 745.5L742.8 746.7L743.3 748.2L743.7 749.8L742.2 750.7L743.3 751.3L744.6 752.0L746.4 752.7L748.2 752.5L750.8 753.4L751.6 754.6L754.1 755.5L756.6 756.3L758.3 757.0L759.8 756.0L759.8 754.1L761.6 752.7L763.7 752.5L765.5 753.8L768.4 754.3L770.5 754.8L773.2 755.5L775.9 756.0L777.7 755.3L779.5 754.8L781.8 755.3L782.1 757.5L782.0 758.4L783.2 760.5L784.3 762.4L785.4 764.4L786.6 766.7L787.7 768.2L787.9 769.6L789.7 771.3L790.4 773.0L790.7 775.6L791.3 777.0L793.1 778.2L794.1 780.8L795.0 782.7L797.0 783.9L798.6 785.4L800.2 786.8L801.5 787.8L800.9 789.2L802.4 790.3L803.8 791.3L806.3 790.8L809.0 789.9L811.7 789.7L813.8 789.1L815.6 788.5L815.4 790.3L814.3 792.8L813.1 795.4L811.7 798.0L809.9 800.6L808.1 802.8L806.3 804.7L804.1 806.1L801.8 808.2L800.0 810.1L798.4 812.1L797.0 813.5L795.9 814.4L795.0 816.4L793.8 818.3L793.4 820.0L794.5 821.3L794.3 823.5L795.0 825.9L796.3 827.3L796.5 829.9L796.6 832.4L796.8 835.0L795.6 837.3L793.4 838.8L790.7 839.9L788.9 841.6L786.6 843.3L786.1 844.8L787.2 846.2L787.5 848.5L787.3 850.5L785.7 851.9L783.0 852.9L782.5 854.3L782.7 856.6L781.8 858.8L779.8 860.5L778.2 862.6L775.9 864.8L774.1 866.0L771.9 867.4L769.8 867.7L766.9 867.9L764.3 867.9L761.6 868.4L759.8 869.1L758.0 868.3L756.9 868.1L756.7 866.0L756.0 865.2L756.6 863.4L754.9 860.9L753.5 858.4L751.9 856.6L750.8 854.0L749.9 850.5L749.8 847.9L748.5 845.4L746.7 841.9L745.1 839.7L744.9 836.8L745.8 834.5L746.9 831.6L748.3 829.9L748.7 827.6L747.6 825.2L747.6 823.8L746.4 821.3L745.8 819.5L745.8 817.8L744.6 816.4L743.1 814.7L741.5 813.2L740.1 811.3L739.7 810.2L740.8 808.9L741.2 807.1L741.5 804.9L741.4 803.2L740.6 802.3L739.4 801.3L737.4 801.6L735.6 801.8L733.8 800.9L732.9 799.2L731.7 798.4L729.9 798.2L727.6 798.4L725.4 799.0L723.5 799.9L720.8 800.9L718.6 800.4L715.9 800.2L713.3 800.9L710.6 801.6L708.8 800.6L707.0 799.4L704.7 798.0L702.9 796.8L701.1 795.4L700.2 794.0L699.8 792.7L698.1 791.3L697.2 790.3L695.4 788.9L693.9 787.8L694.1 786.3L693.1 784.2L692.7 783.7L693.9 782.0L694.7 780.3L695.2 778.2L694.8 776.0L694.3 774.1L693.4 773.0L693.9 771.3L695.0 769.2L695.7 768.0L697.3 766.2L698.2 763.9L699.8 762.4L700.9 761.2L703.4 760.3L705.2 759.3L706.6 757.5L706.5 755.5L707.4 753.4L708.8 751.9L710.9 751.0L712.4 749.8L713.4 747.6ZM812.2 829.9L813.5 832.4L814.2 835.9L812.9 837.6L812.6 840.2L811.3 843.6L809.9 847.6L808.6 851.4L807.2 852.8L804.9 853.1L803.1 852.2L802.0 849.7L801.5 847.1L802.7 845.0L803.4 842.8L802.7 840.2L803.1 837.6L805.4 836.8L807.2 836.1L809.0 834.7L809.9 832.8L811.3 831.2L812.2 829.9ZM713.8 722.9L715.9 722.6L717.9 722.4L720.4 721.9L722.6 721.7L724.9 721.7L726.5 721.0L725.4 720.5L726.3 719.8L727.0 718.6L725.3 718.1L724.4 717.6L724.2 716.9L723.6 715.9L721.9 715.0L721.1 713.6L720.1 712.8L718.3 712.8L719.5 711.7L720.4 710.2L717.7 709.8L716.7 710.0L718.3 708.3L715.1 708.3L714.5 709.5L713.6 710.5L714.0 711.9L712.9 712.3L714.2 712.9L714.0 714.0L715.4 713.5L715.1 714.8L717.6 714.7L718.1 715.9L718.8 716.6L718.5 717.4L716.1 717.4L715.8 718.3L716.7 718.8L715.4 719.7L714.7 720.0L716.5 720.3L718.3 720.7L717.6 721.0L715.9 721.2L714.5 722.6L713.8 722.9ZM713.1 719.3L713.1 717.4L713.3 716.2L714.2 715.2L712.9 714.1L710.6 714.0L709.2 714.5L708.6 715.5L706.1 715.9L706.5 717.2L707.5 717.8L706.6 718.8L705.6 719.7L706.5 720.5L708.8 720.2L710.9 719.5L713.1 719.3ZM743.7 673.9L748.2 675.2L750.8 676.6L754.4 677.1L758.0 675.2L762.5 674.5L759.8 673.2L765.1 672.8L772.3 671.1L763.4 670.6L755.3 671.3L749.0 671.8L743.7 672.6L743.7 673.9ZM816.1 685.9L819.7 687.3L823.3 687.6L826.9 687.5L825.1 686.1L823.3 684.4L824.2 682.6L827.8 681.4L832.2 679.7L838.5 678.3L846.5 677.0L842.1 676.6L834.9 677.8L827.8 679.2L823.3 680.9L820.6 682.6L817.9 684.4L816.1 685.9ZM894.0 672.8L902.9 673.5L910.1 674.0L911.8 672.3L904.7 671.1L897.5 669.7L892.2 671.4L894.0 672.8ZM970.0 679.2L976.2 680.2L982.5 680.2L988.8 680.1L993.2 679.5L985.2 678.7L976.2 678.0L970.0 679.2ZM808.1 670.4L817.0 671.1L827.8 670.9L834.9 670.1L824.2 669.0L813.5 669.7L808.1 670.4ZM978.4 715.7L979.8 717.6L980.4 720.0L980.9 722.6L982.7 724.8L980.2 724.5L979.5 727.4L980.7 729.5L978.6 730.0L978.0 727.4L978.2 724.8L978.2 722.2L977.7 719.7L978.4 715.7ZM977.7 730.8L979.8 732.6L983.8 733.1L984.3 734.6L981.6 735.3L980.4 736.9L977.7 735.8L975.9 736.0L974.8 737.7L974.5 736.0L975.2 734.6L977.0 734.3L977.5 732.6L977.7 730.8ZM976.1 737.7L977.1 739.5L978.0 741.0L977.3 743.1L976.2 743.8L976.1 745.7L975.7 747.2L975.9 747.7L974.5 748.9L974.1 748.1L973.0 748.6L972.3 749.4L971.2 749.4L969.5 749.6L968.9 748.9L968.4 750.1L967.7 750.8L966.9 751.5L965.9 751.0L966.1 749.6L964.3 749.4L961.9 750.1L960.5 750.7L958.4 750.7L958.2 750.0L959.8 749.3L961.6 748.1L964.3 747.9L966.4 747.9L967.3 747.2L968.6 745.8L969.6 744.6L969.3 745.7L971.8 744.8L973.4 743.2L974.5 741.2L974.3 739.5L975.0 738.3L976.1 737.7ZM958.2 750.8L959.6 751.5L960.1 752.7L959.3 754.4L958.4 755.5L957.6 755.5L956.9 754.1L957.5 752.7L956.0 752.7L956.0 751.7L957.1 751.3L958.2 750.8ZM961.0 750.7L963.0 750.1L964.8 750.3L964.3 751.3L962.8 751.5L961.9 752.7L960.9 751.9L961.0 750.7ZM941.4 765.6L942.3 766.8L941.2 769.2L940.1 771.5L938.9 769.9L939.0 768.2L940.5 766.2L941.4 765.6ZM920.3 774.8L922.4 774.8L921.7 776.8L919.9 777.9L918.5 776.5L920.3 774.8ZM939.8 777.3L942.6 777.3L942.8 779.9L941.5 782.0L941.5 784.2L942.8 785.1L944.6 785.1L945.8 787.2L944.4 786.6L942.8 786.0L941.0 785.6L939.9 784.7L938.9 783.4L938.5 781.3L939.4 779.4L939.8 777.3ZM948.3 792.3L950.0 794.6L950.3 796.6L949.4 798.4L948.3 799.2L948.0 797.5L946.2 798.4L945.8 796.8L943.9 796.5L942.4 797.1L942.8 795.4L944.9 794.4L947.1 794.2L948.3 792.3ZM937.8 789.6L936.0 792.3L933.7 794.7L935.1 792.8L937.8 789.6ZM919.4 806.1L920.8 806.3L922.9 806.6L923.3 804.9L926.2 803.7L927.9 801.5L930.3 800.2L931.9 798.5L933.0 797.1L934.6 798.2L935.6 799.7L937.2 800.2L935.6 801.6L934.6 803.2L934.9 805.2L936.9 807.5L934.7 807.8L934.2 810.4L932.4 812.1L932.2 814.4L931.5 815.9L929.2 816.3L927.1 815.1L924.4 815.1L922.6 814.4L921.1 814.0L920.8 811.8L919.2 810.1L919.0 808.2L919.4 806.1ZM894.5 799.6L896.6 800.2L898.6 800.4L900.4 802.7L902.5 804.0L904.0 805.4L906.1 806.1L908.3 808.3L909.7 809.7L911.0 812.3L913.3 814.0L913.6 815.2L913.3 817.8L913.3 819.2L911.1 819.2L909.7 817.8L907.0 816.1L905.2 813.8L903.6 811.3L902.4 809.2L900.8 806.4L898.8 804.9L896.6 802.7L894.8 800.9L894.5 799.6ZM912.2 820.9L914.0 819.5L915.4 819.4L918.1 820.6L920.8 821.1L922.4 820.2L925.4 821.1L928.8 822.5L928.7 824.2L925.8 823.7L922.6 823.5L919.5 822.6L916.9 822.5L914.3 821.9L912.2 820.9ZM937.8 818.7L937.6 816.1L938.0 815.1L936.5 814.0L937.4 811.4L938.3 809.2L939.0 807.7L940.5 807.0L943.2 807.5L945.5 807.7L948.0 806.4L946.9 808.5L944.6 808.5L941.4 808.3L939.0 809.0L938.9 810.6L940.5 811.4L942.6 810.6L944.8 810.7L943.7 812.0L941.7 812.5L942.8 814.4L943.7 816.1L944.4 817.5L943.3 818.7L942.3 817.5L941.4 816.4L940.3 815.2L940.5 813.8L939.2 814.2L939.4 816.9L939.4 818.8L937.8 818.7ZM952.3 806.1L953.3 806.8L954.2 808.3L953.0 810.4L952.5 808.3L952.3 806.1ZM953.0 814.4L955.7 814.0L958.0 815.1L955.7 815.2L953.0 814.4ZM958.4 810.6L960.9 809.9L963.7 810.6L964.1 812.6L965.5 814.9L967.8 813.2L970.5 812.0L973.6 813.0L976.2 813.7L978.9 814.9L982.5 815.7L984.8 817.6L985.7 818.8L988.2 819.9L987.3 820.9L988.4 822.8L989.7 824.7L992.0 826.1L993.2 827.3L990.6 826.9L987.9 826.4L986.3 824.7L984.8 823.0L982.5 822.5L980.7 823.3L980.2 824.9L978.0 825.0L976.2 824.9L974.1 823.3L972.3 823.5L970.9 823.3L972.3 821.6L971.4 820.0L970.9 818.7L968.2 817.3L966.1 816.8L963.7 815.7L961.9 816.3L961.6 814.9L963.4 813.5L961.9 813.3L960.1 813.0L958.7 811.8L958.4 810.6ZM989.3 819.0L992.3 817.8L995.0 816.4L996.3 816.6L995.6 818.7L993.2 819.9L990.6 819.9L989.3 819.0ZM927.4 847.1L927.4 849.7L927.1 853.1L928.3 854.8L927.9 856.6L929.4 859.1L929.9 861.7L931.0 864.0L930.8 866.5L929.7 868.3L931.5 869.3L934.7 869.6L937.8 868.3L940.5 867.6L944.6 867.6L946.2 866.0L949.4 864.8L953.0 864.3L955.7 863.6L958.7 863.4L961.0 864.3L963.7 865.7L965.5 867.4L966.9 869.1L968.7 867.6L970.5 865.3L970.0 867.7L968.9 869.8L970.5 869.5L971.4 868.4L971.8 870.3L973.6 871.2L974.3 873.4L975.9 874.6L978.6 875.3L980.7 876.0L982.9 875.0L983.9 875.2L985.7 876.4L987.9 874.6L991.5 874.1L992.3 873.1L992.7 870.8L993.8 869.1L994.7 867.2L995.9 865.5L997.4 863.4L997.9 860.9L998.6 858.6L998.3 856.2L997.9 854.0L997.2 852.6L995.6 850.5L993.8 849.2L993.2 847.6L991.5 846.7L990.2 844.5L987.9 842.8L985.7 841.7L985.2 839.3L984.3 837.3L983.9 835.0L982.5 833.8L981.3 833.7L980.7 831.6L980.2 829.5L979.1 827.8L978.4 829.0L977.5 831.2L977.3 833.3L977.1 835.5L976.6 837.6L975.9 839.3L974.1 839.5L972.7 838.5L970.9 837.4L969.1 836.4L967.3 835.5L966.4 834.7L967.3 833.0L968.7 830.2L967.3 830.4L965.5 830.2L963.4 829.5L961.4 828.7L959.8 828.8L958.4 830.4L957.1 831.6L956.2 833.7L955.7 834.9L953.9 834.7L952.1 833.3L950.8 833.0L949.4 833.8L947.6 835.5L946.4 837.1L944.9 838.8L942.8 838.8L942.6 840.5L941.0 842.4L938.7 843.5L936.5 844.2L933.8 844.8L931.5 845.4L929.7 846.2L927.4 847.1ZM982.9 879.3L985.6 880.0L987.9 879.6L989.3 879.6L989.3 881.5L988.6 883.4L987.0 884.1L985.2 884.1L983.9 882.4L983.8 881.2L982.9 879.3ZM1033.0 868.4L1034.4 869.5L1036.0 870.3L1036.7 872.1L1038.1 872.6L1038.9 873.9L1041.0 874.6L1043.2 874.1L1042.4 875.8L1041.2 876.9L1040.7 878.1L1039.4 879.8L1037.6 880.8L1036.5 880.3L1037.3 878.6L1036.2 877.6L1034.9 876.9L1036.4 876.0L1036.7 874.3L1036.0 872.6L1034.9 871.2L1033.5 869.6L1033.0 868.4ZM1033.0 878.9L1034.9 879.6L1035.8 881.0L1034.0 883.1L1033.1 884.3L1031.4 885.1L1030.3 886.5L1029.6 888.2L1027.8 889.3L1025.4 889.4L1023.5 888.8L1021.9 888.1L1023.3 886.3L1025.4 885.0L1028.1 883.6L1030.3 882.0L1031.4 880.7L1032.2 879.3L1033.0 878.9ZM1017.4 843.8L1020.1 845.4L1022.8 847.6L1021.0 847.1L1018.3 845.4L1017.4 843.8ZM1041.2 839.3L1043.5 839.3L1043.0 840.5L1041.4 840.4L1041.2 839.3ZM867.1 792.3L868.7 793.7L869.4 794.9L870.3 796.6L870.0 798.0L868.4 798.9L867.1 798.4L866.8 796.3L866.9 794.4L867.1 792.3ZM808.1 732.1L809.0 730.7L811.7 729.5L814.3 728.6L817.0 728.6L819.2 729.5L818.5 731.0L816.1 731.4L815.6 732.6L814.0 732.9L815.2 734.8L817.9 735.7L818.5 737.2L818.6 738.6L820.6 739.1L818.8 740.7L820.2 742.4L820.4 745.0L817.9 745.8L815.2 746.0L813.1 744.8L811.7 743.4L811.5 741.5L812.6 739.8L814.0 739.6L812.6 738.6L811.3 737.0L809.5 735.5L809.0 733.8L808.1 732.1ZM828.3 730.2L830.4 729.0L833.1 729.0L834.0 730.3L832.8 732.1L830.4 733.8L828.5 732.9L828.3 730.2ZM855.5 730.8L858.2 728.8L862.6 729.0L865.3 729.3L861.8 729.6L858.2 730.5L856.0 731.7L855.5 730.8ZM909.7 720.3L912.7 718.8L916.3 717.1L919.9 714.5L920.4 713.1L918.1 715.4L915.4 717.9L911.8 720.0L909.7 720.3ZM780.9 810.1L782.7 808.7L784.8 808.9L784.8 811.8L783.4 813.5L781.2 813.2L780.9 810.1ZM776.4 815.1L777.3 817.8L779.1 822.1L778.7 824.0L776.8 820.4L776.2 816.9L776.4 815.1ZM784.8 825.6L786.3 829.0L786.6 832.4L785.9 833.8L785.2 829.9L784.8 825.6ZM778.6 705.9L781.2 705.5L782.7 704.2L780.4 703.0L777.7 703.8L778.6 705.9ZM785.7 704.2L788.4 703.8L787.5 701.9L785.7 702.1L785.7 704.2ZM746.4 743.8L748.2 743.4L751.7 743.4L751.2 745.5L749.6 745.7L747.3 744.6L746.4 743.8ZM738.7 738.8L740.6 738.3L741.4 740.0L741.0 741.7L739.2 742.0L739.0 740.3L738.7 738.8ZM739.4 736.2L740.8 735.2L741.0 736.9L740.5 737.9L739.6 737.2L739.4 736.2ZM766.0 748.1L768.7 748.2L771.1 748.6L768.7 748.9L766.0 748.6L766.0 748.1ZM781.8 748.9L783.0 748.4L785.7 747.9L784.6 748.9L783.0 749.6L781.8 748.9ZM743.7 713.3L746.4 712.8L746.4 714.0L745.1 714.5L743.7 713.3ZM756.4 710.5L757.8 709.5L757.6 710.5L756.4 711.0L756.4 710.5ZM810.8 689.9L812.6 689.5L813.8 690.4L811.7 690.7L810.8 689.9ZM819.4 787.5L821.5 787.7L820.2 788.0L819.4 787.5ZM559.4 728.8L563.9 726.7L569.3 726.9L572.5 729.1L569.3 729.1L565.7 728.4L562.1 729.0L559.4 728.8ZM566.9 737.4L569.3 737.2L569.6 733.4L571.9 730.3L568.7 730.8L566.9 734.3L566.9 737.4ZM572.8 730.2L574.6 731.7L576.4 735.0L577.8 734.3L578.6 731.2L580.9 732.1L579.4 730.0L575.5 729.6L572.8 730.2ZM575.0 736.9L579.1 737.6L582.8 735.5L580.0 735.8L576.4 736.4L575.0 736.9ZM581.4 734.6L586.2 734.6L587.7 733.4L584.5 733.6L581.4 734.6ZM945.7 789.9L946.0 792.0L944.8 793.0L944.0 791.1L945.7 789.9ZM946.6 789.4L948.0 787.7L948.7 789.9L947.6 791.6L946.6 789.4ZM942.1 788.7L944.2 789.2L943.3 791.1L942.3 790.9L942.1 788.7ZM929.7 823.3L931.0 823.7L930.1 824.4L929.7 823.3ZM931.3 823.5L932.8 823.7L932.1 824.5L931.3 823.5ZM933.0 823.8L935.1 823.3L936.9 824.0L934.2 824.7L933.0 823.8ZM938.5 823.7L941.4 823.8L944.0 823.5L942.3 824.4L939.2 824.4L938.5 823.7ZM936.9 825.6L939.0 825.6L940.1 826.8L938.0 826.2L936.9 825.6ZM944.9 826.9L947.6 824.7L951.2 823.7L950.3 824.7L946.7 826.8L944.9 826.9ZM1000.8 818.7L1002.7 820.4L1001.8 820.9L1000.8 818.7ZM1009.3 823.3L1011.7 825.0L1010.6 825.7L1009.3 823.3ZM1011.5 823.7L1012.9 825.6L1012.0 825.0L1011.5 823.7ZM546.0 690.4L549.6 691.1L553.2 690.7L552.3 689.0L548.7 688.7L546.0 690.4ZM504.0 678.3L511.1 678.7L515.6 677.0L511.1 675.9L504.8 677.0L504.0 678.3ZM537.9 680.1L545.1 680.1L548.7 678.7L545.1 677.3L538.8 677.8L537.9 680.1ZM551.4 680.4L555.8 680.6L556.7 679.4L553.2 679.0L551.4 680.4ZM579.1 683.7L584.5 683.8L588.0 683.3L583.6 682.3L579.1 682.6L579.1 683.7ZM536.2 674.9L543.3 675.2L546.9 674.0L543.3 672.6L537.0 673.2L536.2 674.9ZM548.7 675.2L554.0 675.2L554.9 673.9L550.5 673.3L548.7 675.2ZM520.1 675.7L527.2 676.1L529.0 674.9L524.5 674.2L520.1 675.7ZM521.8 674.4L527.2 674.4L528.1 673.3L523.6 673.3L521.8 674.4ZM585.4 693.3L588.9 693.5L589.8 692.1L587.1 691.6L585.4 693.3ZM575.5 702.1L580.9 701.6L581.4 700.7L576.4 700.9L575.5 702.1ZM580.0 703.0L582.1 703.1L581.8 701.9L580.0 703.0ZM577.3 718.1L580.0 718.3L579.1 717.4L577.3 718.1ZM608.6 723.3L613.1 724.5L613.4 724.1L610.4 723.3L608.6 723.3ZM609.0 728.6L611.3 729.5L613.1 729.3L610.4 729.0L609.0 728.6ZM591.6 739.3L595.2 738.8L594.3 738.6L592.2 738.8L591.6 739.3ZM625.6 689.5L629.2 689.9L630.1 688.7L626.5 688.1L625.6 689.5ZM424.7 705.5L427.4 706.1L427.0 705.2L424.7 705.5ZM416.8 700.0L421.7 700.4L422.0 699.9L418.1 699.5L416.8 700.0ZM524.5 708.3L529.0 707.4L532.6 707.1L529.0 706.6L524.5 708.3ZM539.7 711.9L542.4 710.2L540.6 709.3L539.7 711.9ZM595.2 695.0L598.8 695.2L597.9 694.0L595.2 695.0ZM1016.5 708.3L1018.3 707.3L1017.4 708.5L1016.5 708.3ZM753.3 712.4L754.6 710.5L754.2 711.9L753.3 712.4ZM763.2 708.8L765.1 708.3L765.1 709.0L763.2 708.8ZM765.1 742.2L767.3 743.4L767.8 743.8L766.0 742.4L765.1 742.2ZM773.6 746.9L774.4 746.5L774.1 747.4L773.6 746.9ZM728.1 741.0L730.1 740.7L729.5 741.5L728.1 741.0ZM912.2 812.0L914.0 812.1L914.9 814.4L913.5 813.8L912.2 812.0ZM916.5 813.7L917.7 814.0L917.0 814.7L916.5 813.7ZM897.7 806.8L899.1 808.2L898.2 807.7L897.7 806.8ZM900.4 810.9L901.6 812.1L900.8 812.0L900.4 810.9ZM949.4 814.5L951.6 814.9L950.7 815.7L949.4 814.5ZM993.8 813.7L995.9 814.9L997.7 816.9L996.8 816.1L994.7 814.4L993.8 813.7ZM1000.6 818.2L1002.9 820.4L1002.2 821.1L1000.9 819.5L1000.6 818.2ZM968.4 870.7L970.9 870.8L970.0 871.2L968.4 871.0L968.4 870.7ZM957.3 828.8L959.3 828.8L958.4 829.7L957.3 828.8ZM968.0 833.0L968.9 833.3L968.4 833.8L968.0 833.0ZM1023.7 890.0L1024.9 890.0L1024.2 890.7L1023.7 890.0ZM591.3 881.4L592.5 882.0L592.2 883.9L590.9 883.2L591.3 881.4ZM601.3 899.9L604.1 902.2L607.4 903.4L605.0 904.1L601.5 904.6L597.9 903.9L595.2 902.7L597.0 902.2L598.8 901.3L597.9 900.3L601.3 899.9ZM656.0 902.2L658.7 902.7L660.0 903.6L657.4 902.7L656.0 902.2ZM613.3 790.8L614.9 790.6L614.9 791.8L613.3 791.8L613.3 790.8ZM794.1 819.2L794.7 819.7L794.3 820.2L794.1 819.2ZM847.1 893.6L849.8 893.8L849.2 894.6L847.4 894.6L847.1 893.6ZM936.9 825.4L939.2 825.7L940.1 826.8L938.0 826.4L936.9 825.4ZM614.5 898.4L616.7 897.7L617.7 898.6L615.8 899.1L614.5 898.4ZM618.1 897.9L620.6 898.1L619.3 899.1L618.1 897.9ZM402.0 690.6L405.6 691.4L410.0 693.0L414.5 693.8L418.1 694.5L420.2 695.4L418.4 696.4L415.4 698.0L413.6 698.5L410.0 697.6L406.5 696.6L403.8 695.9L402.0 697.3M402.0 944.0L416.3 944.4L428.8 944.2L441.3 942.7L450.3 942.1L459.2 940.9L468.2 939.2L477.1 938.4L487.9 937.7L498.6 936.6L509.3 936.6L520.1 937.1L530.8 938.0L539.7 936.6L545.1 935.3L552.3 935.3L559.4 934.9L568.4 935.4L577.3 935.9L584.5 934.9L591.6 935.4L598.8 934.9L601.5 931.5L603.2 928.0L605.0 925.4L607.7 922.9L610.4 921.1L614.9 919.4L619.3 918.4L622.0 918.5L619.3 920.3L615.8 922.0L613.1 923.7L609.5 926.3L611.3 928.9L614.0 931.5L615.8 934.0L614.9 937.5L611.3 939.2L605.9 940.9L598.8 942.7L589.8 943.9L584.5 945.2L598.8 945.8L613.1 944.4L625.6 943.5L638.1 944.0L648.9 944.0L659.6 943.5L666.8 942.3L673.9 940.1L681.1 937.5L690.0 935.3L697.2 933.7L704.3 932.0L711.5 931.1L718.6 930.6L724.0 929.4L731.2 930.3L738.3 929.7L745.5 930.1L752.6 929.4L759.8 929.9L766.9 930.3L774.1 929.7L779.5 928.5L784.8 928.0L790.2 928.9L793.8 928.0L797.3 926.8L802.7 925.8L808.1 925.1L813.5 923.7L818.8 922.7L824.2 923.4L829.6 924.9L834.9 925.4L840.3 926.0L845.7 926.3L849.2 927.7L851.0 929.4L854.6 929.6L858.2 928.9L862.6 928.0L867.1 926.3L872.5 924.6L879.6 923.7L886.8 923.9L894.0 923.7L901.1 922.9L906.5 922.5L911.8 923.5L917.2 924.1L922.6 922.9L927.9 923.2L933.3 924.2L938.7 924.1L944.0 923.5L949.4 923.4L954.8 924.2L960.1 923.2L965.5 922.9L970.9 923.7L976.2 924.2L981.6 924.6L987.0 926.0L992.3 927.0L997.7 927.2L1003.1 928.2L1008.5 929.1L1013.8 930.4L1019.2 930.9L1024.6 931.8L1029.0 932.7L1028.1 934.6L1024.6 936.6L1020.1 938.4L1016.5 940.9L1016.5 943.0L1021.0 944.0L1028.1 944.4L1037.1 944.0L1046.0 944.0M1043.3 686.6L1046.0 686.1M426.1 716.4L424.3 717.2L422.6 717.6M419.9 718.3L418.1 718.8M414.5 719.3L411.8 719.5M409.1 719.8L406.5 720.2M1033.5 718.1L1036.2 718.5M1041.5 719.7L1044.2 720.5M444.9 774.4L446.7 775.1L445.6 776.5L444.9 775.4L444.9 774.4M443.8 773.0L444.6 773.6M441.0 772.2L441.7 772.5M438.3 771.1L438.8 771.3M1002.2 722.6L1003.1 721.9M995.9 728.3L997.7 726.9M991.5 730.5L993.2 729.6M987.0 732.2L989.7 731.0M984.7 733.6L986.1 732.7M583.9 763.2L585.9 763.4L586.2 763.9M584.1 765.8L585.0 767.4M587.5 765.6L587.7 766.7M407.6 884.8h1.4M472.9 824.5h1.4M455.9 839.5h1.4M527.7 855.9h1.4M560.6 810.2h1.4M561.9 810.7h1.4M607.7 753.6h1.4M673.3 742.9h1.4M677.8 744.1h1.4M693.9 760.5h1.4M695.7 761.0h1.4M693.0 752.9h1.4M680.5 781.6h1.4M681.4 783.4h1.4M822.7 845.5h1.4M826.3 844.0h1.4M848.6 894.1h1.4M846.8 893.6h1.4M790.8 890.0h1.4M657.6 902.7h1.4M656.3 902.4h1.4M617.8 898.2h1.4M616.1 898.4h1.4M618.7 898.6h1.4M676.0 909.8h1.4M982.4 786.1h1.4M1021.4 810.1h1.4M416.0 833.0h1.4M410.0 845.7h1.4M1024.0 836.8h1.4M1022.2 835.5h1.4M854.9 802.0h1.4M852.9 821.8h1.4M889.4 788.5h1.4M889.6 789.4h1.4M891.2 796.8h1.4M613.4 781.6h1.4M614.3 784.1h1.4M613.9 786.5h1.4M617.0 786.5h1.4M613.4 791.1h1.4M584.8 766.2h1.4M583.9 763.6h1.4M585.1 767.4h1.4M944.9 767.2h1.4M952.2 763.6h1.4M952.9 763.1h1.4M955.1 760.5h1.4M713.2 836.6h1.4M697.6 822.8h1.4M862.0 874.3h1.4M402.3 837.6h1.4" fill="none" stroke="#4646ff" stroke-width="1.25" stroke-linejoin="round" shape-rendering="crispEdges"/><path d="M459.5 654V966.5M525.5 654V966.5M591.5 654V966.5M657.5 654V966.5M724.5 654V966.5M790.5 654V966.5M856.5 654V966.5M922.5 654V966.5M988.5 654V966.5M398.5 685.5H1050M398.5 746.5H1050M398.5 809.5H1050M398.5 872.5H1050M398.5 933.5H1050M398.5 654V966.5H1050V654" fill="none" stroke="#a8a8a8" stroke-width="1" shape-rendering="crispEdges"/><text x="369" y="690.1" style="font-family:'Liberation Sans',sans-serif;font-size:12px;fill:#c4c4c4;">72</text><text x="369" y="751.2" style="font-family:'Liberation Sans',sans-serif;font-size:12px;fill:#c4c4c4;">36</text><text x="369" y="813.5" style="font-family:'Liberation Sans',sans-serif;font-size:12px;fill:#c4c4c4;">0</text><text x="369" y="877.1" style="font-family:'Liberation Sans',sans-serif;font-size:12px;fill:#c4c4c4;">-36</text><text x="369" y="938.2" style="font-family:'Liberation Sans',sans-serif;font-size:12px;fill:#c4c4c4;">-72</text><text x="459.0" y="985.6" text-anchor="middle" style="font-family:'Liberation Sans',sans-serif;font-size:12px;fill:#c4c4c4;">-148</text><text x="525.5" y="985.6" text-anchor="middle" style="font-family:'Liberation Sans',sans-serif;font-size:12px;fill:#c4c4c4;">-111</text><text x="591.6" y="985.6" text-anchor="middle" style="font-family:'Liberation Sans',sans-serif;font-size:12px;fill:#c4c4c4;">-74</text><text x="657.6" y="985.6" text-anchor="middle" style="font-family:'Liberation Sans',sans-serif;font-size:12px;fill:#c4c4c4;">-37</text><text x="724.0" y="985.6" text-anchor="middle" style="font-family:'Liberation Sans',sans-serif;font-size:12px;fill:#c4c4c4;">0</text><text x="790.3" y="985.6" text-anchor="middle" style="font-family:'Liberation Sans',sans-serif;font-size:12px;fill:#c4c4c4;">37</text><text x="856.4" y="985.6" text-anchor="middle" style="font-family:'Liberation Sans',sans-serif;font-size:12px;fill:#c4c4c4;">74</text><text x="922.8" y="985.6" text-anchor="middle" style="font-family:'Liberation Sans',sans-serif;font-size:12px;fill:#c4c4c4;">111</text><text x="988.8" y="985.6" text-anchor="middle" style="font-family:'Liberation Sans',sans-serif;font-size:12px;fill:#c4c4c4;">148</text><path d="M446.2 697.7L455.2 706.7M455.2 697.7L446.2 706.7" stroke="#14ec14" stroke-width="1" fill="none"/><text x="455.9" y="706.5" style="font-family:'Liberation Sans',sans-serif;font-size:12px;fill:#14ec14">G15</text><path d="M471.5 712.3L480.5 721.3M480.5 712.3L471.5 721.3" stroke="#00f6f6" stroke-width="1" fill="none"/><text x="481.2" y="721.1" style="font-family:'Liberation Sans',sans-serif;font-size:12px;fill:#00f6f6">15</text><path d="M509.8 712.3L518.8 721.3M518.8 712.3L509.8 721.3" stroke="#00f6f6" stroke-width="1" fill="none"/><text x="519.5" y="721.1" style="font-family:'Liberation Sans',sans-serif;font-size:12px;fill:#00f6f6">B7</text><path d="M527.4 708.8L536.4 717.8M536.4 708.8L527.4 717.8" stroke="#00f6f6" stroke-width="1" fill="none"/><text x="537.1" y="717.6" style="font-family:'Liberation Sans',sans-serif;font-size:12px;fill:#00f6f6">26</text><path d="M532.9 705.4L541.9 714.4M541.9 705.4L532.9 714.4" stroke="#00f6f6" stroke-width="1" fill="none"/><text x="542.6" y="714.2" style="font-family:'Liberation Sans',sans-serif;font-size:12px;fill:#00f6f6">G24</text><path d="M585.0 710.5L594.0 719.5M594.0 710.5L585.0 719.5" stroke="#00f6f6" stroke-width="1" fill="none"/><text x="594.7" y="719.3" style="font-family:'Liberation Sans',sans-serif;font-size:12px;fill:#00f6f6">27</text><path d="M611.6 709.3L620.6 718.3M620.6 709.3L611.6 718.3" stroke="#00f6f6" stroke-width="1" fill="none"/><text x="621.3" y="718.1" style="font-family:'Liberation Sans',sans-serif;font-size:12px;fill:#00f6f6">A22</text><path d="M662.9 715.2L671.9 724.2M671.9 715.2L662.9 724.2" stroke="#00f6f6" stroke-width="1" fill="none"/><text x="672.6" y="724.0" style="font-family:'Liberation Sans',sans-serif;font-size:12px;fill:#00f6f6">8</text><path d="M695.0 709.1L704.0 718.1M704.0 709.1L695.0 718.1" stroke="#00f6f6" stroke-width="1" fill="none"/><text x="704.7" y="717.9" style="font-family:'Liberation Sans',sans-serif;font-size:12px;fill:#00f6f6">G23</text><path d="M474.9 730.0L483.9 739.0M483.9 730.0L474.9 739.0" stroke="#00f6f6" stroke-width="1" fill="none"/><text x="484.6" y="738.8" style="font-family:'Liberation Sans',sans-serif;font-size:12px;fill:#00f6f6">A15</text><path d="M498.1 738.9L507.1 747.9M507.1 738.9L498.1 747.9" stroke="#00f6f6" stroke-width="1" fill="none"/><text x="507.8" y="747.7" style="font-family:'Liberation Sans',sans-serif;font-size:12px;fill:#00f6f6">A21</text><path d="M614.2 746.3L623.2 755.3M623.2 746.3L614.2 755.3" stroke="#00f6f6" stroke-width="1" fill="none"/><text x="623.9" y="755.1" style="font-family:'Liberation Sans',sans-serif;font-size:12px;fill:#00f6f6">28</text><path d="M701.0 741.5L710.0 750.5M710.0 741.5L701.0 750.5" stroke="#00f6f6" stroke-width="1" fill="none"/><text x="710.7" y="750.3" style="font-family:'Liberation Sans',sans-serif;font-size:12px;fill:#00f6f6">G8</text><path d="M699.5 747.7L708.5 756.7M708.5 747.7L699.5 756.7" stroke="#00f6f6" stroke-width="1" fill="none"/><text x="709.2" y="756.5" style="font-family:'Liberation Sans',sans-serif;font-size:12px;fill:#00f6f6">A25</text><path d="M706.5 747.9L715.5 756.9M715.5 747.9L706.5 756.9" stroke="#00f6f6" stroke-width="1" fill="none"/><text x="716.2" y="756.7" style="font-family:'Liberation Sans',sans-serif;font-size:12px;fill:#00f6f6">A26</text><path d="M727.0 751.0L736.0 760.0M736.0 751.0L727.0 760.0" stroke="#00f6f6" stroke-width="1" fill="none"/><text x="736.7" y="759.8" style="font-family:'Liberation Sans',sans-serif;font-size:12px;fill:#00f6f6">27</text><path d="M531.7 757.0L540.7 766.0M540.7 757.0L531.7 766.0" stroke="#00f6f6" stroke-width="1" fill="none"/><text x="541.4" y="765.8" style="font-family:'Liberation Sans',sans-serif;font-size:12px;fill:#00f6f6">G14</text><path d="M472.0 765.1L481.0 774.1M481.0 765.1L472.0 774.1" stroke="#00f6f6" stroke-width="1" fill="none"/><text x="481.7" y="773.9" style="font-family:'Liberation Sans',sans-serif;font-size:12px;fill:#00f6f6">G17</text><path d="M540.8 777.1L549.8 786.1M549.8 777.1L540.8 786.1" stroke="#00f6f6" stroke-width="1" fill="none"/><text x="550.5" y="785.9" style="font-family:'Liberation Sans',sans-serif;font-size:12px;fill:#00f6f6">10</text><path d="M535.1 789.1L544.1 798.1M544.1 789.1L535.1 798.1" stroke="#00f6f6" stroke-width="1" fill="none"/><text x="544.8" y="797.9" style="font-family:'Liberation Sans',sans-serif;font-size:12px;fill:#00f6f6">A16</text><path d="M440.9 783.3L449.9 792.3M449.9 783.3L440.9 792.3" stroke="#00f6f6" stroke-width="1" fill="none"/><text x="450.6" y="792.1" style="font-family:'Liberation Sans',sans-serif;font-size:12px;fill:#00f6f6">24</text><path d="M441.8 800.5L450.8 809.5M450.8 800.5L441.8 809.5" stroke="#00f6f6" stroke-width="1" fill="none"/><text x="451.5" y="809.3" style="font-family:'Liberation Sans',sans-serif;font-size:12px;fill:#00f6f6">A19</text><path d="M450.5 800.7L459.5 809.7M459.5 800.7L450.5 809.7" stroke="#00f6f6" stroke-width="1" fill="none"/><text x="460.2" y="809.5" style="font-family:'Liberation Sans',sans-serif;font-size:12px;fill:#00f6f6">A20</text><path d="M672.7 778.8L681.7 787.8M681.7 778.8L672.7 787.8" stroke="#00f6f6" stroke-width="1" fill="none"/><text x="682.4" y="787.6" style="font-family:'Liberation Sans',sans-serif;font-size:12px;fill:#00f6f6">A5</text><path d="M740.2 722.1L749.2 731.1M749.2 722.1L740.2 731.1" stroke="#00f6f6" stroke-width="1" fill="none"/><text x="749.9" y="730.9" style="font-family:'Liberation Sans',sans-serif;font-size:12px;fill:#00f6f6">A6</text><path d="M781.7 716.8L790.7 725.8M790.7 716.8L781.7 725.8" stroke="#14ec14" stroke-width="1" fill="none"/><text x="791.4" y="725.6" style="font-family:'Liberation Sans',sans-serif;font-size:12px;fill:#14ec14">19</text><path d="M788.3 716.8L797.3 725.8M797.3 716.8L788.3 725.8" stroke="#14ec14" stroke-width="1" fill="none"/><text x="798.0" y="725.6" style="font-family:'Liberation Sans',sans-serif;font-size:12px;fill:#14ec14">B11</text><path d="M813.8 693.3L822.8 702.3M822.8 693.3L813.8 702.3" stroke="#14ec14" stroke-width="1" fill="none"/><text x="823.5" y="702.1" style="font-family:'Liberation Sans',sans-serif;font-size:12px;fill:#14ec14">G7</text><path d="M868.1 715.5L877.1 724.5M877.1 715.5L868.1 724.5" stroke="#14ec14" stroke-width="1" fill="none"/><text x="876.6" y="716.0" style="font-family:'Liberation Sans',sans-serif;font-size:12px;fill:#14ec14">3</text><path d="M869.1 717.0L878.1 726.0M878.1 717.0L869.1 726.0" stroke="#14ec14" stroke-width="1" fill="none"/><text x="879.6" y="733.5" style="font-family:'Liberation Sans',sans-serif;font-size:12px;fill:#14ec14">A7</text><path d="M897.7 724.0L906.7 733.0M906.7 724.0L897.7 733.0" stroke="#14ec14" stroke-width="1" fill="none"/><text x="907.4" y="732.8" style="font-family:'Liberation Sans',sans-serif;font-size:12px;fill:#14ec14">6</text><path d="M904.3 710.2L913.3 719.2M913.3 710.2L904.3 719.2" stroke="#14ec14" stroke-width="1" fill="none"/><text x="914.0" y="719.0" style="font-family:'Liberation Sans',sans-serif;font-size:12px;fill:#14ec14">B6</text><path d="M993.4 710.2L1002.4 719.2M1002.4 710.2L993.4 719.2" stroke="#14ec14" stroke-width="1" fill="none"/><text x="1003.1" y="719.0" style="font-family:'Liberation Sans',sans-serif;font-size:12px;fill:#14ec14">A14</text><path d="M979.8 721.2L988.8 730.2M988.8 721.2L979.8 730.2" stroke="#14ec14" stroke-width="1" fill="none"/><text x="989.5" y="730.0" style="font-family:'Liberation Sans',sans-serif;font-size:12px;fill:#14ec14">18</text><path d="M945.5 735.9L954.5 744.9M954.5 735.9L945.5 744.9" stroke="#14ec14" stroke-width="1" fill="none"/><text x="955.2" y="744.7" style="font-family:'Liberation Sans',sans-serif;font-size:12px;fill:#14ec14">G6</text><path d="M1031.7 736.3L1040.7 745.3M1040.7 736.3L1031.7 745.3" stroke="#14ec14" stroke-width="1" fill="none"/><text x="1041.4" y="745.1" style="font-family:'Liberation Sans',sans-serif;font-size:12px;fill:#14ec14">21</text><path d="M806.2 745.1L815.2 754.1M815.2 745.1L806.2 754.1" stroke="#14ec14" stroke-width="1" fill="none"/><text x="815.9" y="753.9" style="font-family:'Liberation Sans',sans-serif;font-size:12px;fill:#14ec14">B9</text><path d="M903.9 758.0L912.9 767.0M912.9 758.0L903.9 767.0" stroke="#14ec14" stroke-width="1" fill="none"/><text x="913.6" y="766.8" style="font-family:'Liberation Sans',sans-serif;font-size:12px;fill:#14ec14">A13</text><path d="M927.0 752.3L936.0 761.3M936.0 752.3L927.0 761.3" stroke="#14ec14" stroke-width="1" fill="none"/><text x="936.7" y="761.1" style="font-family:'Liberation Sans',sans-serif;font-size:12px;fill:#14ec14">22</text><path d="M946.8 768.0L955.8 777.0M955.8 768.0L946.8 777.0" stroke="#14ec14" stroke-width="1" fill="none"/><text x="956.5" y="776.8" style="font-family:'Liberation Sans',sans-serif;font-size:12px;fill:#14ec14">A8</text><path d="M743.0 778.7L752.0 787.7M752.0 778.7L743.0 787.7" stroke="#00f6f6" stroke-width="1" fill="none"/><text x="752.7" y="787.5" style="font-family:'Liberation Sans',sans-serif;font-size:12px;fill:#00f6f6">25</text><path d="M756.8 774.9L765.8 783.9M765.8 774.9L756.8 783.9" stroke="#00f6f6" stroke-width="1" fill="none"/><text x="766.5" y="783.7" style="font-family:'Liberation Sans',sans-serif;font-size:12px;fill:#00f6f6">G22</text><path d="M757.2 800.4L766.2 809.4M766.2 800.4L757.2 809.4" stroke="#00f6f6" stroke-width="1" fill="none"/><text x="766.7" y="798.9" style="font-family:'Liberation Sans',sans-serif;font-size:12px;fill:#00f6f6">11</text><path d="M761.9 804.3L770.9 813.3M770.9 804.3L761.9 813.3" stroke="#00f6f6" stroke-width="1" fill="none"/><text x="774.4" y="813.8" style="font-family:'Liberation Sans',sans-serif;font-size:12px;fill:#00f6f6">A24</text><path d="M765.7 811.3L774.7 820.3M774.7 811.3L765.7 820.3" stroke="#00f6f6" stroke-width="1" fill="none"/><text x="772.2" y="827.8" style="font-family:'Liberation Sans',sans-serif;font-size:12px;fill:#00f6f6">B5</text><path d="M766.3 811.5L775.3 820.5M775.3 811.5L766.3 820.5" stroke="#00f6f6" stroke-width="1" fill="none"/><text x="783.8" y="828.0" style="font-family:'Liberation Sans',sans-serif;font-size:12px;fill:#00f6f6">B14</text><path d="M808.1 806.3L817.1 815.3M817.1 806.3L808.1 815.3" stroke="#14ec14" stroke-width="1" fill="none"/><text x="817.8" y="815.1" style="font-family:'Liberation Sans',sans-serif;font-size:12px;fill:#14ec14">B3</text><path d="M888.3 784.9L897.3 793.9M897.3 784.9L888.3 793.9" stroke="#14ec14" stroke-width="1" fill="none"/><text x="898.0" y="793.7" style="font-family:'Liberation Sans',sans-serif;font-size:12px;fill:#14ec14">G9</text><path d="M885.8 790.6L894.8 799.6M894.8 790.6L885.8 799.6" stroke="#14ec14" stroke-width="1" fill="none"/><text x="895.5" y="799.4" style="font-family:'Liberation Sans',sans-serif;font-size:12px;fill:#14ec14">B12</text><path d="M879.8 800.3L888.8 809.3M888.8 800.3L879.8 809.3" stroke="#14ec14" stroke-width="1" fill="none"/><text x="889.5" y="809.1" style="font-family:'Liberation Sans',sans-serif;font-size:12px;fill:#14ec14">16</text><path d="M860.0 808.5L869.0 817.5M869.0 808.5L860.0 817.5" stroke="#14ec14" stroke-width="1" fill="none"/><text x="869.7" y="817.3" style="font-family:'Liberation Sans',sans-serif;font-size:12px;fill:#14ec14">B8</text><path d="M856.7 821.0L865.7 830.0M865.7 821.0L856.7 830.0" stroke="#14ec14" stroke-width="1" fill="none"/><text x="866.4" y="829.8" style="font-family:'Liberation Sans',sans-serif;font-size:12px;fill:#14ec14">A12</text><path d="M920.4 802.9L929.4 811.9M929.4 802.9L920.4 811.9" stroke="#14ec14" stroke-width="1" fill="none"/><text x="930.1" y="811.7" style="font-family:'Liberation Sans',sans-serif;font-size:12px;fill:#14ec14">B2</text><path d="M992.0 809.7L1001.0 818.7M1001.0 809.7L992.0 818.7" stroke="#14ec14" stroke-width="1" fill="none"/><text x="1001.7" y="818.5" style="font-family:'Liberation Sans',sans-serif;font-size:12px;fill:#14ec14">B1</text><path d="M999.0 809.7L1008.0 818.7M1008.0 809.7L999.0 818.7" stroke="#14ec14" stroke-width="1" fill="none"/><text x="1008.7" y="818.5" style="font-family:'Liberation Sans',sans-serif;font-size:12px;fill:#14ec14">B4</text><path d="M435.8 836.1L444.8 845.1M444.8 836.1L435.8 845.1" stroke="#00f6f6" stroke-width="1" fill="none"/><text x="445.5" y="844.9" style="font-family:'Liberation Sans',sans-serif;font-size:12px;fill:#00f6f6">G18</text><path d="M566.6 823.8L575.6 832.8M575.6 823.8L566.6 832.8" stroke="#00f6f6" stroke-width="1" fill="none"/><text x="576.3" y="832.6" style="font-family:'Liberation Sans',sans-serif;font-size:12px;fill:#00f6f6">G13</text><path d="M647.1 835.1L656.1 844.1M656.1 835.1L647.1 844.1" stroke="#00f6f6" stroke-width="1" fill="none"/><text x="656.8" y="843.9" style="font-family:'Liberation Sans',sans-serif;font-size:12px;fill:#00f6f6">17</text><path d="M695.7 837.0L704.7 846.0M704.7 837.0L695.7 846.0" stroke="#00f6f6" stroke-width="1" fill="none"/><text x="705.4" y="845.8" style="font-family:'Liberation Sans',sans-serif;font-size:12px;fill:#00f6f6">13</text><path d="M625.4 842.7L634.4 851.7M634.4 842.7L625.4 851.7" stroke="#00f6f6" stroke-width="1" fill="none"/><text x="635.1" y="851.5" style="font-family:'Liberation Sans',sans-serif;font-size:12px;fill:#00f6f6">A4</text><path d="M582.6 853.0L591.6 862.0M591.6 853.0L582.6 862.0" stroke="#00f6f6" stroke-width="1" fill="none"/><text x="592.3" y="861.8" style="font-family:'Liberation Sans',sans-serif;font-size:12px;fill:#00f6f6">A9</text><path d="M625.0 872.8L634.0 881.8M634.0 872.8L625.0 881.8" stroke="#00f6f6" stroke-width="1" fill="none"/><text x="634.7" y="881.6" style="font-family:'Liberation Sans',sans-serif;font-size:12px;fill:#00f6f6">G2</text><path d="M516.4 876.1L525.4 885.1M525.4 876.1L516.4 885.1" stroke="#00f6f6" stroke-width="1" fill="none"/><text x="526.1" y="884.9" style="font-family:'Liberation Sans',sans-serif;font-size:12px;fill:#00f6f6">2</text><path d="M418.9 889.3L427.9 898.3M427.9 889.3L418.9 898.3" stroke="#00f6f6" stroke-width="1" fill="none"/><text x="428.6" y="898.1" style="font-family:'Liberation Sans',sans-serif;font-size:12px;fill:#00f6f6">A2</text><path d="M449.4 892.1L458.4 901.1M458.4 892.1L449.4 901.1" stroke="#00f6f6" stroke-width="1" fill="none"/><text x="459.1" y="900.9" style="font-family:'Liberation Sans',sans-serif;font-size:12px;fill:#00f6f6">5</text><path d="M473.6 887.0L482.6 896.0M482.6 887.0L473.6 896.0" stroke="#00f6f6" stroke-width="1" fill="none"/><text x="483.3" y="895.8" style="font-family:'Liberation Sans',sans-serif;font-size:12px;fill:#00f6f6">12</text><path d="M548.5 894.9L557.5 903.9M557.5 894.9L548.5 903.9" stroke="#00f6f6" stroke-width="1" fill="none"/><text x="558.2" y="903.7" style="font-family:'Liberation Sans',sans-serif;font-size:12px;fill:#00f6f6">A3</text><path d="M602.8 901.1L611.8 910.1M611.8 901.1L602.8 910.1" stroke="#00f6f6" stroke-width="1" fill="none"/><text x="612.5" y="909.9" style="font-family:'Liberation Sans',sans-serif;font-size:12px;fill:#00f6f6">4</text><path d="M672.0 899.8L681.0 908.8M681.0 899.8L672.0 908.8" stroke="#00f6f6" stroke-width="1" fill="none"/><text x="681.7" y="908.6" style="font-family:'Liberation Sans',sans-serif;font-size:12px;fill:#00f6f6">A10</text><path d="M485.8 917.2L494.8 926.2M494.8 917.2L485.8 926.2" stroke="#00f6f6" stroke-width="1" fill="none"/><text x="495.5" y="926.0" style="font-family:'Liberation Sans',sans-serif;font-size:12px;fill:#00f6f6">G3</text><path d="M710.0 877.5L719.0 886.5M719.0 877.5L710.0 886.5" stroke="#00f6f6" stroke-width="1" fill="none"/><text x="719.5" y="876.0" style="font-family:'Liberation Sans',sans-serif;font-size:12px;fill:#00f6f6">B10</text><path d="M713.8 878.1L722.8 887.1M722.8 878.1L713.8 887.1" stroke="#00f6f6" stroke-width="1" fill="none"/><text x="723.3" y="893.6" style="font-family:'Liberation Sans',sans-serif;font-size:12px;fill:#00f6f6">B13</text><path d="M725.7 872.7L734.7 881.7M734.7 872.7L725.7 881.7" stroke="#00f6f6" stroke-width="1" fill="none"/><text x="735.4" y="881.5" style="font-family:'Liberation Sans',sans-serif;font-size:12px;fill:#00f6f6">23</text><path d="M994.3 832.3L1003.3 841.3M1003.3 832.3L994.3 841.3" stroke="#14ec14" stroke-width="1" fill="none"/><text x="1004.0" y="841.1" style="font-family:'Liberation Sans',sans-serif;font-size:12px;fill:#14ec14">A1</text><path d="M1017.9 841.7L1026.9 850.7M1026.9 841.7L1017.9 850.7" stroke="#14ec14" stroke-width="1" fill="none"/><text x="1027.6" y="850.5" style="font-family:'Liberation Sans',sans-serif;font-size:12px;fill:#14ec14">29</text><path d="M962.2 844.2L971.2 853.2M971.2 844.2L962.2 853.2" stroke="#14ec14" stroke-width="1" fill="none"/><text x="971.9" y="853.0" style="font-family:'Liberation Sans',sans-serif;font-size:12px;fill:#14ec14">14</text><path d="M793.0 846.1L802.0 855.1M802.0 846.1L793.0 855.1" stroke="#00f6f6" stroke-width="1" fill="none"/><text x="802.7" y="854.9" style="font-family:'Liberation Sans',sans-serif;font-size:12px;fill:#00f6f6">G21</text><path d="M830.8 853.0L839.8 862.0M839.8 853.0L830.8 862.0" stroke="#00f6f6" stroke-width="1" fill="none"/><text x="840.5" y="861.8" style="font-family:'Liberation Sans',sans-serif;font-size:12px;fill:#00f6f6">A27</text><path d="M854.0 854.0L863.0 863.0M863.0 854.0L854.0 863.0" stroke="#00f6f6" stroke-width="1" fill="none"/><text x="863.7" y="862.8" style="font-family:'Liberation Sans',sans-serif;font-size:12px;fill:#00f6f6">G10</text><path d="M1022.2 863.0L1031.2 872.0M1031.2 863.0L1022.2 872.0" stroke="#00f6f6" stroke-width="1" fill="none"/><text x="1031.9" y="871.8" style="font-family:'Liberation Sans',sans-serif;font-size:12px;fill:#00f6f6">A25</text><path d="M1028.5 863.1L1037.5 872.1M1037.5 863.1L1028.5 872.1" stroke="#00f6f6" stroke-width="1" fill="none"/><text x="1038.2" y="871.9" style="font-family:'Liberation Sans',sans-serif;font-size:12px;fill:#00f6f6">A26</text><path d="M819.4 871.9L828.4 880.9M828.4 871.9L819.4 880.9" stroke="#00f6f6" stroke-width="1" fill="none"/><text x="829.1" y="880.7" style="font-family:'Liberation Sans',sans-serif;font-size:12px;fill:#00f6f6">A17</text><path d="M826.0 875.7L835.0 884.7M835.0 875.7L826.0 884.7" stroke="#00f6f6" stroke-width="1" fill="none"/><text x="834.5" y="877.2" style="font-family:'Liberation Sans',sans-serif;font-size:12px;fill:#00f6f6">1</text><path d="M795.9 880.8L804.9 889.8M804.9 880.8L795.9 889.8" stroke="#00f6f6" stroke-width="1" fill="none"/><text x="805.6" y="889.6" style="font-family:'Liberation Sans',sans-serif;font-size:12px;fill:#00f6f6">A11</text><path d="M776.6 893.0L785.6 902.0M785.6 893.0L776.6 902.0" stroke="#00f6f6" stroke-width="1" fill="none"/><text x="786.3" y="901.8" style="font-family:'Liberation Sans',sans-serif;font-size:12px;fill:#00f6f6">20</text><path d="M767.9 913.4L776.9 922.4M776.9 913.4L767.9 922.4" stroke="#00f6f6" stroke-width="1" fill="none"/><text x="777.6" y="922.2" style="font-family:'Liberation Sans',sans-serif;font-size:12px;fill:#00f6f6">G11</text><path d="M861.9 906.8L870.9 915.8M870.9 906.8L861.9 915.8" stroke="#00f6f6" stroke-width="1" fill="none"/><text x="871.6" y="915.6" style="font-family:'Liberation Sans',sans-serif;font-size:12px;fill:#00f6f6">G20</text><path d="M903.8 898.9L912.8 907.9M912.8 898.9L903.8 907.9" stroke="#00f6f6" stroke-width="1" fill="none"/><text x="913.5" y="907.7" style="font-family:'Liberation Sans',sans-serif;font-size:12px;fill:#00f6f6">31</text><path d="M932.6 902.1L941.6 911.1M941.6 902.1L932.6 911.1" stroke="#00f6f6" stroke-width="1" fill="none"/><text x="942.3" y="910.9" style="font-family:'Liberation Sans',sans-serif;font-size:12px;fill:#00f6f6">A18</text><path d="M1035.4 883.2L1044.4 892.2M1044.4 883.2L1035.4 892.2" stroke="#00f6f6" stroke-width="1" fill="none"/><text x="1045.1" y="892.0" style="font-family:'Liberation Sans',sans-serif;font-size:12px;fill:#00f6f6">G1</text><path d="M1020.3 899.8L1029.3 908.8M1029.3 899.8L1020.3 908.8" stroke="#00f6f6" stroke-width="1" fill="none"/><text x="1030.0" y="908.6" style="font-family:'Liberation Sans',sans-serif;font-size:12px;fill:#00f6f6">G19</text><path d="M1027.0 900.0L1036.0 909.0M1036.0 900.0L1027.0 909.0" stroke="#00f6f6" stroke-width="1" fill="none"/><text x="1036.7" y="908.8" style="font-family:'Liberation Sans',sans-serif;font-size:12px;fill:#00f6f6">30</text><path d="M939.4 752.3l4.5 9M943.9 752.3l-4.5 9" stroke="#e8e000" stroke-width="1" transform="translate(-2.3 0)"/><path d="M950.9 750.5 L957 762.5 H944.8 Z" fill="#000" stroke="#fff" stroke-width="1.3"/><rect x="950.3" y="757.3" width="1.4" height="1.4" fill="#fff"/><text transform="translate(379.8 1003.3) scale(1.36 1)" style="font-family:'Liberation Sans',sans-serif;font-size:11.5px;fill:#e4e4e4">Latitude</text><text transform="translate(454 1003.3) scale(1.36 1)" style="font-family:'Liberation Sans',sans-serif;font-size:11.5px;fill:#00e000">N 31° 0'</text><text transform="translate(607.7 1003.3) scale(1.36 1)" style="font-family:'Liberation Sans',sans-serif;font-size:11.5px;fill:#e4e4e4">Longitude</text><text transform="translate(681 1003.3) scale(1.36 1)" style="font-family:'Liberation Sans',sans-serif;font-size:11.5px;fill:#00e000">E 121° 0'</text><text transform="translate(835.3 1003.3) scale(1.36 1)" style="font-family:'Liberation Sans',sans-serif;font-size:11.5px;fill:#e4e4e4">Height</text><text transform="translate(908.3 1003.3) scale(1.36 1)" style="font-family:'Liberation Sans',sans-serif;font-size:11.5px;fill:#00e000">36.44m</text></svg></div></div></div><div style="position:absolute;left:1060px;top:591px;width:406px;height:428px;background:#444;border-radius:6px 6px 0 0"></div><div style="position:absolute;left:1061px;top:592px;width:404px;height:426px;background:linear-gradient(#bfcddb 0px,#cbd8e6 14px,#d7e4f2 30px,#d7e4f2 100%);border-radius:5px 5px 0 0;box-shadow:inset 1px 1px 0 0 #e3edf7;"><svg style="position:absolute;left:9px;top:10px" width="15" height="13" viewBox="0 0 15 13"><rect x="0.5" y="0.5" width="14" height="12" fill="#f4f4f4" stroke="#8a8f98"/><rect x="0" y="0" width="15" height="1" fill="#6f7782"/><rect x="1.5" y="2" width="5.5" height="8.5" fill="#2f8f86"/><rect x="1.5" y="2" width="5.5" height="3" fill="#5573a8" opacity="0.7"/><rect x="11.6" y="2" width="1.2" height="3.5" fill="#1a43a8"/><rect x="8.5" y="9" width="3" height="1.5" fill="#c9c9c9"/></svg><span style="position:absolute;left:29px;top:11px;font:12px 'Liberation Sans',sans-serif;color:#434e66;white-space:pre;letter-spacing:-0.1px">Sky Plot</span><div style="position:absolute;left:364px;top:9px;width:29px;height:15px;border:1px solid #8e9dbd;border-radius:3px;background:linear-gradient(#cddbea 0,#c6d5e6 48%,#bccde0 52%,#cfdcec 100%);box-shadow:inset 0 0 0 1px rgba(255,255,255,.45)"><svg style="position:absolute;left:9px;top:3px" width="12" height="11" viewBox="0 0 12 11"><path d="M0.5 0.7 L3.9 0.7 L5.5 2.8 L7.1 0.7 L10.5 0.7 L7.4 4.9 L10.5 9.3 L7.1 9.3 L5.5 7.1 L3.9 9.3 L0.5 9.3 L3.6 4.9 Z" fill="#f8f8f8" stroke="#454b66" stroke-width="1" stroke-linejoin="round"/></svg></div><div style="position:absolute;left:331px;top:9px;width:29px;height:15px;border:1px solid #8e9dbd;border-radius:3px;background:linear-gradient(#cddbea 0,#c6d5e6 48%,#bccde0 52%,#cfdcec 100%);box-shadow:inset 0 0 0 1px rgba(255,255,255,.45)"><svg style="position:absolute;left:9px;top:3px" width="12" height="11" viewBox="0 0 12 11"><rect x="0.5" y="0.5" width="10" height="9" rx="1" fill="#f6f6f6" stroke="#454b66"/><rect x="3.5" y="3.5" width="4" height="2" fill="#a9bbd3" stroke="#454b66"/></svg></div><div style="position:absolute;left:298px;top:9px;width:29px;height:15px;border:1px solid #8e9dbd;border-radius:3px;background:linear-gradient(#cddbea 0,#c6d5e6 48%,#bccde0 52%,#cfdcec 100%);box-shadow:inset 0 0 0 1px rgba(255,255,255,.45)"><div style="position:absolute;left:9px;top:7px;width:9px;height:3px;background:#f6f6f6;border:1px solid #454b66;border-radius:1px"></div></div><div style="position:absolute;left:7px;top:29px;width:390px;height:390px;box-sizing:border-box;border:1px solid;border-color:#7f8893 #fff #fff #7f8893;"><div style="position:absolute;left:0;top:0;right:0;bottom:0;border:1px solid;border-color:#696969 #e3e3e3 #e3e3e3 #696969;overflow:hidden"><div style="position:absolute;left:0px;top:0px;width:400px;height:400px;background:#f0f0f0"></div><div style="position:absolute;left:7px;top:8px;width:69px;height:21px;box-sizing:border-box;border:1px solid #707070;border-radius:3px;background:linear-gradient(#f2f2f2 0,#ebebeb 48%,#dddddd 52%,#cfcfcf 100%);box-shadow:inset 0 0 0 1px #fcfcfc"></div><span style="position:absolute;left:11px;top:11px;white-space:pre;font:11px 'Liberation Sans',sans-serif;line-height:16px;letter-spacing:-0.12px;color:#000;">Properties...</span><span style="position:absolute;left:82.79999999999995px;top:12px;white-space:pre;font:11px 'Liberation Sans',sans-serif;line-height:16px;letter-spacing:-0.12px;color:#000;letter-spacing:-0.1px;">All satellite types, azimuth v elevation, no multipaths</span><svg style="position:absolute;left:6px;top:37px;" width="375" height="315" viewBox="0 0 375 315"><rect x="0.5" y="0.5" width="374" height="314" fill="#000018" stroke="#6464ff" stroke-width="1"/><circle cx="187.2" cy="157.2" r="145.7" fill="none" stroke="#6464ff" stroke-width="1"/><circle cx="187.2" cy="157.2" r="72.7" fill="none" stroke="#6464ff" stroke-width="1"/><path d="M39.2 157.2H336.2M187.2 8.2V303.2" stroke="#6464ff" stroke-width="1" fill="none"/><path d="M84.2 54.2L290.2 260.2M290.2 54.2L84.2 260.2" stroke="#6464ff" stroke-width="1" fill="none"/><path d="M199.9 12.1L199.6 15.0M212.5 13.7L212.0 16.7M224.9 16.5L224.1 19.4M237.0 20.3L236.0 23.1M248.8 25.2L247.5 27.9M260.1 31.0L258.6 33.6M270.8 37.8L269.0 40.3M280.9 45.6L278.9 47.9M298.8 63.5L296.5 65.5M306.6 73.6L304.1 75.4M313.4 84.4L310.8 85.9M319.2 95.6L316.5 96.9M324.1 107.4L321.3 108.4M327.9 119.5L325.0 120.3M330.7 131.9L327.7 132.4M332.3 144.5L329.4 144.8M332.3 169.9L329.4 169.6M330.7 182.5L327.7 182.0M327.9 194.9L325.0 194.1M324.1 207.0L321.3 206.0M319.2 218.8L316.5 217.5M313.4 230.1L310.8 228.6M306.6 240.8L304.1 239.0M298.8 250.9L296.5 248.9M280.9 268.8L278.9 266.5M270.8 276.6L269.0 274.1M260.1 283.4L258.6 280.8M248.8 289.2L247.5 286.5M237.0 294.1L236.0 291.3M224.9 297.9L224.1 295.0M212.5 300.7L212.0 297.7M199.9 302.3L199.6 299.4M174.5 302.3L174.8 299.4M161.9 300.7L162.4 297.7M149.5 297.9L150.3 295.0M137.4 294.1L138.4 291.3M125.6 289.2L126.9 286.5M114.4 283.4L115.9 280.8M103.6 276.6L105.4 274.1M93.5 268.8L95.5 266.5M75.6 250.9L77.9 248.9M67.8 240.8L70.3 239.0M61.0 230.1L63.6 228.6M55.2 218.8L57.9 217.5M50.3 207.0L53.1 206.0M46.5 194.9L49.4 194.1M43.7 182.5L46.7 182.0M42.1 169.9L45.0 169.6M42.1 144.5L45.0 144.8M43.7 131.9L46.7 132.4M46.5 119.5L49.4 120.3M50.3 107.4L53.1 108.4M55.2 95.6L57.9 96.9M61.0 84.4L63.6 85.9M67.8 73.6L70.3 75.4M75.6 63.5L77.9 65.5M93.5 45.6L95.5 47.9M103.6 37.8L105.4 40.3M114.3 31.0L115.8 33.6M125.6 25.2L126.9 27.9M137.4 20.3L138.4 23.1M149.5 16.5L150.3 19.4M161.9 13.7L162.4 16.7M174.5 12.1L174.8 15.0M195.3 157.2V154.7M203.4 157.2V154.7M211.5 157.2V154.7M219.6 157.2V154.7M227.7 157.2V154.7M235.8 157.2V154.7M243.9 157.2V154.7M252.0 157.2V154.7M260.1 157.2V154.7M268.1 157.2V154.7M276.2 157.2V154.7M284.3 157.2V154.7M292.4 157.2V154.7M300.5 157.2V154.7M308.6 157.2V154.7M316.7 157.2V154.7M324.8 157.2V154.7" stroke="#6464ff" stroke-width="1" fill="none"/><text x="187.3" y="9.3" text-anchor="middle" style="font-family:'Liberation Sans',sans-serif;font-size:9px;fill:#7474ff;">N</text><text x="187.3" y="311.0" text-anchor="middle" style="font-family:'Liberation Sans',sans-serif;font-size:9px;fill:#7474ff;">S</text><text x="335.6" y="160.0" text-anchor="middle" style="font-family:'Liberation Sans',sans-serif;font-size:9px;fill:#7474ff;">E</text><text x="38.0" y="160.5" text-anchor="middle" style="font-family:'Liberation Sans',sans-serif;font-size:9px;fill:#7474ff;">W</text><text x="296.5" y="52.0" text-anchor="middle" style="font-family:'Liberation Sans',sans-serif;font-size:9px;fill:#7474ff;">NE</text><text x="76.5" y="52.0" text-anchor="middle" style="font-family:'Liberation Sans',sans-serif;font-size:9px;fill:#7474ff;">NW</text><text x="296.5" y="268.3" text-anchor="middle" style="font-family:'Liberation Sans',sans-serif;font-size:9px;fill:#7474ff;">SE</text><text x="76.3" y="268.3" text-anchor="middle" style="font-family:'Liberation Sans',sans-serif;font-size:9px;fill:#7474ff;">SW</text><text x="259.0" y="168.3" text-anchor="middle" style="font-family:'Liberation Sans',sans-serif;font-size:9px;fill:#7474ff;">45</text><path d="M93.9 67.5H104.9M99.4 62.0V73.0" stroke="#ff8468" stroke-width="1" fill="none"/><text x="105.0" y="59.7" style="font-family:'Liberation Sans',sans-serif;font-size:12.4px;fill:#ff8468">19*</text><path d="M96.4 71.6H107.4M101.9 66.1V77.1" stroke="#c88cff" stroke-width="1" fill="none"/><text x="69.2" y="65.0" style="font-family:'Liberation Sans',sans-serif;font-size:12.4px;fill:#c88cff">B11*</text><path d="M127.4 64.3H138.4M132.9 58.8V69.8" stroke="#84ff5c" stroke-width="1" fill="none"/><text x="137.4" y="56.5" style="font-family:'Liberation Sans',sans-serif;font-size:12.4px;fill:#84ff5c">G7*</text><path d="M246.1 54.1H257.1M251.6 48.6V59.6" stroke="#84ff5c" stroke-width="1" fill="none"/><text x="256.6" y="46.8" style="font-family:'Liberation Sans',sans-serif;font-size:12.4px;fill:#84ff5c">G15*</text><path d="M81.5 111.5H92.5M87.0 106.0V117.0" stroke="#c88cff" stroke-width="1" fill="none"/><text x="91.4" y="103.4" style="font-family:'Liberation Sans',sans-serif;font-size:12.4px;fill:#c88cff">B9</text><path d="M135.9 106.1H146.9M141.4 100.6V111.6" stroke="#84d6ff" stroke-width="1" fill="none"/><text x="121.2" y="97.4" style="font-family:'Liberation Sans',sans-serif;font-size:12.4px;fill:#84d6ff">A7</text><path d="M132.7 104.2H143.7M138.2 98.7V109.7" stroke="#ff8468" stroke-width="1" fill="none"/><text x="142.6" y="96.4" style="font-family:'Liberation Sans',sans-serif;font-size:12.4px;fill:#ff8468">3</text><path d="M150.8 120.4H161.8M156.3 114.9V125.9" stroke="#ff8468" stroke-width="1" fill="none"/><text x="160.8" y="112.2" style="font-family:'Liberation Sans',sans-serif;font-size:12.4px;fill:#ff8468">6</text><path d="M162.9 110.2H173.9M168.4 104.7V115.7" stroke="#c88cff" stroke-width="1" fill="none"/><text x="172.6" y="125.5" style="font-family:'Liberation Sans',sans-serif;font-size:12.4px;fill:#c88cff">B6*</text><path d="M220.3 102.9H231.3M225.8 97.4V108.4" stroke="#84d6ff" stroke-width="1" fill="none"/><text x="192.3" y="96.0" style="font-family:'Liberation Sans',sans-serif;font-size:12.4px;fill:#84d6ff">A14*</text><path d="M215.4 115.0H226.4M220.9 109.5V120.5" stroke="#ff8468" stroke-width="1" fill="none"/><text x="227.0" y="107.4" style="font-family:'Liberation Sans',sans-serif;font-size:12.4px;fill:#ff8468">18</text><path d="M261.1 115.0H272.1M266.6 109.5V120.5" stroke="#ff8468" stroke-width="1" fill="none"/><text x="271.5" y="107.4" style="font-family:'Liberation Sans',sans-serif;font-size:12.4px;fill:#ff8468">21*</text><path d="M190.1 137.3H201.1M195.6 131.8V142.8" stroke="#84ff5c" stroke-width="1" fill="none"/><text x="200.4" y="129.7" style="font-family:'Liberation Sans',sans-serif;font-size:12.4px;fill:#84ff5c">G6*</text><path d="M172.8 159.6H183.8M178.3 154.1V165.1" stroke="#ff8468" stroke-width="1" fill="none"/><text x="182.6" y="151.3" style="font-family:'Liberation Sans',sans-serif;font-size:12.4px;fill:#ff8468">22*</text><path d="M149.8 161.5H160.8M155.3 156.0V167.0" stroke="#84d6ff" stroke-width="1" fill="none"/><text x="159.2" y="155.0" style="font-family:'Liberation Sans',sans-serif;font-size:12.4px;fill:#84d6ff">A13</text><path d="M193.8 175.8H204.8M199.3 170.3V181.3" stroke="#84d6ff" stroke-width="1" fill="none"/><text x="204.4" y="168.9" style="font-family:'Liberation Sans',sans-serif;font-size:12.4px;fill:#84d6ff">A8*</text><path d="M48.7 180.2H59.7M54.2 174.7V185.7" stroke="#c88cff" stroke-width="1" fill="none"/><text x="58.2" y="172.6" style="font-family:'Liberation Sans',sans-serif;font-size:12.4px;fill:#c88cff">B3</text><path d="M127.0 194.4H138.0M132.5 188.9V199.9" stroke="#84ff5c" stroke-width="1" fill="none"/><text x="136.6" y="185.5" style="font-family:'Liberation Sans',sans-serif;font-size:12.4px;fill:#84ff5c">G9*</text><path d="M115.7 207.4H126.7M121.2 201.9V212.9" stroke="#ff8468" stroke-width="1" fill="none"/><text x="127.5" y="202.0" style="font-family:'Liberation Sans',sans-serif;font-size:12.4px;fill:#ff8468">16</text><path d="M124.6 198.5H135.6M130.1 193.0V204.0" stroke="#c88cff" stroke-width="1" fill="none"/><text x="134.5" y="214.6" style="font-family:'Liberation Sans',sans-serif;font-size:12.4px;fill:#c88cff">B12*</text><path d="M99.6 206.5H110.6M105.1 201.0V212.0" stroke="#c88cff" stroke-width="1" fill="none"/><text x="85.7" y="198.4" style="font-family:'Liberation Sans',sans-serif;font-size:12.4px;fill:#c88cff">B8</text><path d="M163.9 212.2H174.9M169.4 206.7V217.7" stroke="#c88cff" stroke-width="1" fill="none"/><text x="173.3" y="204.4" style="font-family:'Liberation Sans',sans-serif;font-size:12.4px;fill:#c88cff">B2</text><path d="M243.4 213.5H254.4M248.9 208.0V219.0" stroke="#c88cff" stroke-width="1" fill="none"/><text x="228.7" y="205.7" style="font-family:'Liberation Sans',sans-serif;font-size:12.4px;fill:#c88cff">B1</text><path d="M252.2 211.4H263.2M257.7 205.9V216.9" stroke="#c88cff" stroke-width="1" fill="none"/><text x="262.6" y="203.3" style="font-family:'Liberation Sans',sans-serif;font-size:12.4px;fill:#c88cff">B4*</text><path d="M89.9 224.6H100.9M95.4 219.1V230.1" stroke="#84d6ff" stroke-width="1" fill="none"/><text x="99.4" y="216.7" style="font-family:'Liberation Sans',sans-serif;font-size:12.4px;fill:#84d6ff">A12*</text><path d="M250.6 241.8H261.6M256.1 236.3V247.3" stroke="#84d6ff" stroke-width="1" fill="none"/><text x="260.2" y="234.3" style="font-family:'Liberation Sans',sans-serif;font-size:12.4px;fill:#84d6ff">A1*</text><path d="M277.8 248.2H288.8M283.3 242.7V253.7" stroke="#ff8468" stroke-width="1" fill="none"/><text x="287.6" y="240.8" style="font-family:'Liberation Sans',sans-serif;font-size:12.4px;fill:#ff8468">29*</text><path d="M213.5 262.0H224.5M219.0 256.5V267.5" stroke="#ff8468" stroke-width="1" fill="none"/><text x="225.0" y="254.5" style="font-family:'Liberation Sans',sans-serif;font-size:12.4px;fill:#ff8468">14</text></svg><span style="position:absolute;left:6.5px;top:360px;white-space:pre;font:13.25px 'Liberation Sans',sans-serif;line-height:16px;color:#000">GPS best set =  19, 21, 22, 29, GDOP = 2.3813 (All = 1.7921)</span></div></div></div><div style="position:absolute;left:1466px;top:591px;width:452px;height:428px;background:#444;border-radius:6px 6px 0 0"></div><div style="position:absolute;left:1467px;top:592px;width:450px;height:426px;background:linear-gradient(#bfcddb 0px,#cbd8e6 14px,#d7e4f2 30px,#d7e4f2 100%);border-radius:5px 5px 0 0;box-shadow:inset 1px 1px 0 0 #e3edf7;"><svg style="position:absolute;left:9px;top:10px" width="15" height="13" viewBox="0 0 15 13"><rect x="0.5" y="0.5" width="14" height="12" fill="#f4f4f4" stroke="#8a8f98"/><rect x="0" y="0" width="15" height="1" fill="#6f7782"/><rect x="1.5" y="2" width="5.5" height="8.5" fill="#2f8f86"/><rect x="1.5" y="2" width="5.5" height="3" fill="#5573a8" opacity="0.7"/><rect x="11.6" y="2" width="1.2" height="3.5" fill="#1a43a8"/><rect x="8.5" y="9" width="3" height="1.5" fill="#c9c9c9"/></svg><span style="position:absolute;left:29px;top:11px;font:12px 'Liberation Sans',sans-serif;color:#434e66;white-space:pre;letter-spacing:-0.1px">System Messages</span><div style="position:absolute;left:410px;top:9px;width:29px;height:15px;border:1px solid #8e9dbd;border-radius:3px;background:linear-gradient(#cddbea 0,#c6d5e6 48%,#bccde0 52%,#cfdcec 100%);box-shadow:inset 0 0 0 1px rgba(255,255,255,.45)"><svg style="position:absolute;left:9px;top:3px" width="12" height="11" viewBox="0 0 12 11"><path d="M0.5 0.7 L3.9 0.7 L5.5 2.8 L7.1 0.7 L10.5 0.7 L7.4 4.9 L10.5 9.3 L7.1 9.3 L5.5 7.1 L3.9 9.3 L0.5 9.3 L3.6 4.9 Z" fill="#f8f8f8" stroke="#454b66" stroke-width="1" stroke-linejoin="round"/></svg></div><div style="position:absolute;left:377px;top:9px;width:29px;height:15px;border:1px solid #8e9dbd;border-radius:3px;background:linear-gradient(#cddbea 0,#c6d5e6 48%,#bccde0 52%,#cfdcec 100%);box-shadow:inset 0 0 0 1px rgba(255,255,255,.45)"><svg style="position:absolute;left:9px;top:3px" width="12" height="11" viewBox="0 0 12 11"><rect x="0.5" y="0.5" width="10" height="9" rx="1" fill="#f6f6f6" stroke="#454b66"/><rect x="3.5" y="3.5" width="4" height="2" fill="#a9bbd3" stroke="#454b66"/></svg></div><div style="position:absolute;left:344px;top:9px;width:29px;height:15px;border:1px solid #8e9dbd;border-radius:3px;background:linear-gradient(#cddbea 0,#c6d5e6 48%,#bccde0 52%,#cfdcec 100%);box-shadow:inset 0 0 0 1px rgba(255,255,255,.45)"><div style="position:absolute;left:9px;top:7px;width:9px;height:3px;background:#f6f6f6;border:1px solid #454b66;border-radius:1px"></div></div><div style="position:absolute;left:7px;top:29px;width:436px;height:390px;box-sizing:border-box;border:1px solid;border-color:#7f8893 #fff #fff #7f8893;"><div style="position:absolute;left:0;top:0;right:0;bottom:0;border:1px solid;border-color:#696969 #e3e3e3 #e3e3e3 #696969;overflow:hidden"><div style="position:absolute;left:0px;top:0px;width:440px;height:400px;background:#fff"></div><div style="position:absolute;left:0;top:0;width:416px;height:369px;overflow:hidden"><span style="position:absolute;left:5px;top:-14px;white-space:pre;font:13px 'Liberation Sans',sans-serif;line-height:16px;letter-spacing:0px;color:#3a3aff">00:00:00 Warning: Galileo PRS switching capability, y/n</span><span style="position:absolute;left:5px;top:1.5px;white-space:pre;font:13px 'Liberation Sans',sans-serif;line-height:16px;letter-spacing:0px;color:#3a3aff">00:00:00 Warning: Galileo PRS switching capability disabled on</span><span style="position:absolute;left:5px;top:17.519999999999982px;white-space:pre;font:13px 'Liberation Sans',sans-serif;line-height:16px;letter-spacing:0px;color:#0c800c">00:00:00 Info: Scenario 2048week.scn armed</span><span style="position:absolute;left:5px;top:33.539999999999964px;white-space:pre;font:13px 'Liberation Sans',sans-serif;line-height:16px;letter-spacing:0px;color:#0c800c">00:00:00 Info: No hardware ("dummy run"): OFF</span><span style="position:absolute;left:5px;top:49.559999999999945px;white-space:pre;font:13px 'Liberation Sans',sans-serif;line-height:16px;letter-spacing:0px;color:#0c800c">00:00:00 Info: Simulation iteration rate: 1 ms</span><span style="position:absolute;left:5px;top:65.58000000000004px;white-space:pre;font:13px 'Liberation Sans',sans-serif;line-height:16px;letter-spacing:0px;color:#0c800c">00:00:00 Info: Hardware configuration: "GSS9000 #0476"</span><span style="position:absolute;left:5px;top:81.60000000000002px;white-space:pre;font:13px 'Liberation Sans',sans-serif;line-height:16px;letter-spacing:0px;color:#0c800c">00:00:00 Info: External power gain: 0 dB</span><span style="position:absolute;left:5px;top:97.62px;white-space:pre;font:13px 'Liberation Sans',sans-serif;line-height:16px;letter-spacing:0px;color:#0c800c">00:00:00 Info: Maximum simulated satellites: 999</span><span style="position:absolute;left:5px;top:113.63999999999999px;white-space:pre;font:13px 'Liberation Sans',sans-serif;line-height:16px;letter-spacing:0px;color:#0c800c">00:00:00 Info: Dump navigation data: OFF</span><span style="position:absolute;left:5px;top:129.65999999999997px;white-space:pre;font:13px 'Liberation Sans',sans-serif;line-height:16px;letter-spacing:0px;color:#0c800c">00:00:00 Info: Dump signal generator messages: OFF</span><span style="position:absolute;left:5px;top:145.68000000000006px;white-space:pre;font:13px 'Liberation Sans',sans-serif;line-height:16px;letter-spacing:0px;color:#0c800c">00:00:00 Info: Utilise timer card at 4 ms SIR: OFF</span><span style="position:absolute;left:5px;top:161.70000000000005px;white-space:pre;font:13px 'Liberation Sans',sans-serif;line-height:16px;letter-spacing:0px;color:#0c800c">00:00:00 Info: Utilise timer card for all SIRs: OFF</span><span style="position:absolute;left:5px;top:177.72000000000003px;white-space:pre;font:13px 'Liberation Sans',sans-serif;line-height:16px;letter-spacing:0px;color:#0c800c">00:00:00 Info: Prior data: simgen_priordatastreaming.bin</span><span style="position:absolute;left:5px;top:193.74px;white-space:pre;font:13px 'Liberation Sans',sans-serif;line-height:16px;letter-spacing:0px;color:#0c800c">00:00:00 Info: Bulk logging::</span><span style="position:absolute;left:5px;top:209.76px;white-space:pre;font:13px 'Liberation Sans',sans-serif;line-height:16px;letter-spacing:0px;color:#0c800c">00:00:00 Info:     Motion logging: ON</span><span style="position:absolute;left:5px;top:225.77999999999997px;white-space:pre;font:13px 'Liberation Sans',sans-serif;line-height:16px;letter-spacing:0px;color:#0c800c">00:00:00 Info:     Satellite data logging: ON</span><span style="position:absolute;left:5px;top:241.79999999999995px;white-space:pre;font:13px 'Liberation Sans',sans-serif;line-height:16px;letter-spacing:0px;color:#0c800c">00:00:00 Info:     Aiding logging: OFF</span><span style="position:absolute;left:5px;top:257.81999999999994px;white-space:pre;font:13px 'Liberation Sans',sans-serif;line-height:16px;letter-spacing:0px;color:#0c800c">00:00:00 Info:     NCO logging: OFF</span><span style="position:absolute;left:5px;top:273.8399999999999px;white-space:pre;font:13px 'Liberation Sans',sans-serif;line-height:16px;letter-spacing:0px;color:#0c800c">00:00:00 Info:     Log TOW not TIR: ON</span><span style="position:absolute;left:5px;top:289.86px;white-space:pre;font:13px 'Liberation Sans',sans-serif;line-height:16px;letter-spacing:0px;color:#0c800c">00:00:00 Info:     Logging rate: 1000 ms</span><span style="position:absolute;left:5px;top:305.88px;white-space:pre;font:13px 'Liberation Sans',sans-serif;line-height:16px;letter-spacing:0px;color:#0c800c">00:00:00 Info:     Output file format: ascii</span><span style="position:absolute;left:5px;top:321.9px;white-space:pre;font:13px 'Liberation Sans',sans-serif;line-height:16px;letter-spacing:0px;color:#0c800c">00:00:00 Info:     Output file directory: D:/posapp/logs/2048week/2019_04_06</span><span style="position:absolute;left:5px;top:337.9200000000001px;white-space:pre;font:13px 'Liberation Sans',sans-serif;line-height:16px;letter-spacing:0px;color:#0c800c">00:00:00 Info: Running scenario 2048week.scn; started on Fri Jan 25 00:12:08 2019</span><span style="position:absolute;left:5px;top:353.94000000000005px;white-space:pre;font:13px 'Liberation Sans',sans-serif;line-height:16px;letter-spacing:0px;color:#0c800c">00:00:00 Info: SimGEN V6.02.01 SVN revision 549971</span></div><div style="position:absolute;left:416px;top:0px;width:17px;height:369px;background:linear-gradient(90deg,#e3e3e3,#f2f2f2 40%,#f7f7f7)"></div><svg style="position:absolute;left:420px;top:6px;" width="9" height="6" viewBox="0 0 9 6"><path d="M0.5 5 L4.5 1 L8.5 5Z" fill="#333"/></svg><svg style="position:absolute;left:420px;top:358px;" width="9" height="6" viewBox="0 0 9 6"><path d="M0.5 1 L4.5 5 L8.5 1Z" fill="#333"/></svg><div style="position:absolute;left:417px;top:261px;width:15px;height:90px;border:1px solid #979797;border-radius:2px;background:linear-gradient(90deg,#f3f3f3 0,#e8e8e9 45%,#cfcfd1 55%,#dcdcde 100%);box-sizing:border-box"></div><div style="position:absolute;left:421px;top:303px;width:7px;height:1px;background:linear-gradient(90deg,#3a3a3a,#8a8a8a)"></div><div style="position:absolute;left:421px;top:304px;width:7px;height:1px;background:rgba(255,255,255,.8)"></div><div style="position:absolute;left:421px;top:306px;width:7px;height:1px;background:linear-gradient(90deg,#3a3a3a,#8a8a8a)"></div><div style="position:absolute;left:421px;top:307px;width:7px;height:1px;background:rgba(255,255,255,.8)"></div><div style="position:absolute;left:421px;top:309px;width:7px;height:1px;background:linear-gradient(90deg,#3a3a3a,#8a8a8a)"></div><div style="position:absolute;left:421px;top:310px;width:7px;height:1px;background:rgba(255,255,255,.8)"></div><div style="position:absolute;left:0px;top:369px;width:433px;height:17px;background:#f0f0f0"></div><div style="position:absolute;left:0px;top:369px;width:416px;height:17px;background:linear-gradient(#e3e3e3,#f2f2f2 40%,#f7f7f7)"></div><svg style="position:absolute;left:6px;top:373px;" width="6" height="9" viewBox="0 0 6 9"><path d="M5 0.5 L1 4.5 L5 8.5Z" fill="#333"/></svg><svg style="position:absolute;left:404px;top:373px;" width="6" height="9" viewBox="0 0 6 9"><path d="M1 0.5 L5 4.5 L1 8.5Z" fill="#333"/></svg><div style="position:absolute;left:18px;top:370px;width:52px;height:15px;border:1px solid #979797;border-radius:2px;background:linear-gradient(#f3f3f3 0,#e8e8e9 45%,#cfcfd1 55%,#dcdcde 100%);box-sizing:border-box"></div><div style="position:absolute;left:40px;top:374px;width:1px;height:7px;background:linear-gradient(#3a3a3a,#8a8a8a)"></div><div style="position:absolute;left:41px;top:374px;width:1px;height:7px;background:rgba(255,255,255,.8)"></div><div style="position:absolute;left:43px;top:374px;width:1px;height:7px;background:linear-gradient(#3a3a3a,#8a8a8a)"></div><div style="position:absolute;left:44px;top:374px;width:1px;height:7px;background:rgba(255,255,255,.8)"></div><div style="position:absolute;left:46px;top:374px;width:1px;height:7px;background:linear-gradient(#3a3a3a,#8a8a8a)"></div><div style="position:absolute;left:47px;top:374px;width:1px;height:7px;background:rgba(255,255,255,.8)"></div><div style="position:absolute;left:429px;top:381px;width:2px;height:2px;background:#bfbfbf"></div><div style="position:absolute;left:426px;top:381px;width:2px;height:2px;background:#bfbfbf"></div><div style="position:absolute;left:429px;top:378px;width:2px;height:2px;background:#bfbfbf"></div><div style="position:absolute;left:423px;top:381px;width:2px;height:2px;background:#bfbfbf"></div><div style="position:absolute;left:426px;top:378px;width:2px;height:2px;background:#bfbfbf"></div><div style="position:absolute;left:429px;top:375px;width:2px;height:2px;background:#bfbfbf"></div></div></div></div><div style="position:absolute;left:356px;top:1018px;width:1563px;height:1px;background:#7a7a7a"></div><div style="position:absolute;left:0px;top:1019px;width:1919px;height:1px;background:#a0a0a0"></div><div style="position:absolute;left:0px;top:1020px;width:1919px;height:3px;background:#fff"></div><div style="position:absolute;left:0px;top:1023px;width:1919px;height:17px;background:#f0edec"></div><div style="position:absolute;left:0px;top:1040px;width:1919px;height:2px;background:linear-gradient(#2a4468,#1a2c4a)"></div><span style="position:absolute;left:2px;top:1025px;white-space:pre;font:11px 'Liberation Sans',sans-serif;line-height:14px;letter-spacing:-0.1px;color:#000;font-size:11.5px">Ready</span><div style="position:absolute;left:1251px;top:1023px;width:118px;height:16px;box-sizing:border-box;border:1px solid;border-color:#a0a0a0 #fff #fff #a0a0a0"></div><span style="position:absolute;left:1255px;top:1025px;white-space:pre;font:11px 'Liberation Sans',sans-serif;line-height:14px;letter-spacing:-0.1px;color:#000;letter-spacing:0.05px;font-size:11.5px">06-Apr-2019 23:52:46</span><div style="position:absolute;left:1373px;top:1023px;width:254px;height:16px;box-sizing:border-box;border:1px solid;border-color:#f8f8f8 #a8a8a8 #a0a0a0 #e8e8e8;border-radius:2px;background:linear-gradient(#d6d6d6 0,#c9c9c9 50%,#c2c2c2 100%)"></div><div style="position:absolute;left:1630px;top:1023px;width:48px;height:16px;box-sizing:border-box;border:1px solid;border-color:#a0a0a0 #fff #fff #a0a0a0;"></div><span style="position:absolute;left:1630px;top:1025px;width:48px;text-align:center;white-space:pre;font:11px 'Liberation Sans',sans-serif;line-height:14px;letter-spacing:-0.1px;color:#a0a0a0;font-size:11.5px;letter-spacing:0.1px">LOCKED</span><div style="position:absolute;left:1681px;top:1023px;width:29px;height:16px;box-sizing:border-box;border:1px solid;border-color:#a0a0a0 #fff #fff #a0a0a0;"></div><span style="position:absolute;left:1681px;top:1025px;width:29px;text-align:center;white-space:pre;font:11px 'Liberation Sans',sans-serif;line-height:14px;letter-spacing:-0.1px;color:#a0a0a0;font-size:11.5px;letter-spacing:0.1px">LOG</span><div style="position:absolute;left:1712px;top:1023px;width:30px;height:16px;background:#00f000;"></div><span style="position:absolute;left:1712px;top:1025px;width:30px;text-align:center;white-space:pre;font:11px 'Liberation Sans',sans-serif;line-height:14px;letter-spacing:-0.1px;color:#000;font-size:11.5px;letter-spacing:0.1px">H/W</span><div style="position:absolute;left:1745px;top:1023px;width:99px;height:16px;background:#00f000;"></div><span style="position:absolute;left:1745px;top:1025px;width:99px;text-align:center;white-space:pre;font:11px 'Liberation Sans',sans-serif;line-height:14px;letter-spacing:-0.1px;color:#000;font-size:11.5px;letter-spacing:0.1px">Compatible h/w</span><div style="position:absolute;left:1847px;top:1023px;width:72px;height:16px;background:#00f000;"></div><span style="position:absolute;left:1847px;top:1025px;width:72px;text-align:center;white-space:pre;font:11px 'Liberation Sans',sans-serif;line-height:14px;letter-spacing:-0.1px;color:#000;font-size:11.5px;letter-spacing:0.1px">Running</span><div style="position:absolute;left:1918px;top:67px;width:1px;height:952px;background:#dde5ee"></div></body></html>
